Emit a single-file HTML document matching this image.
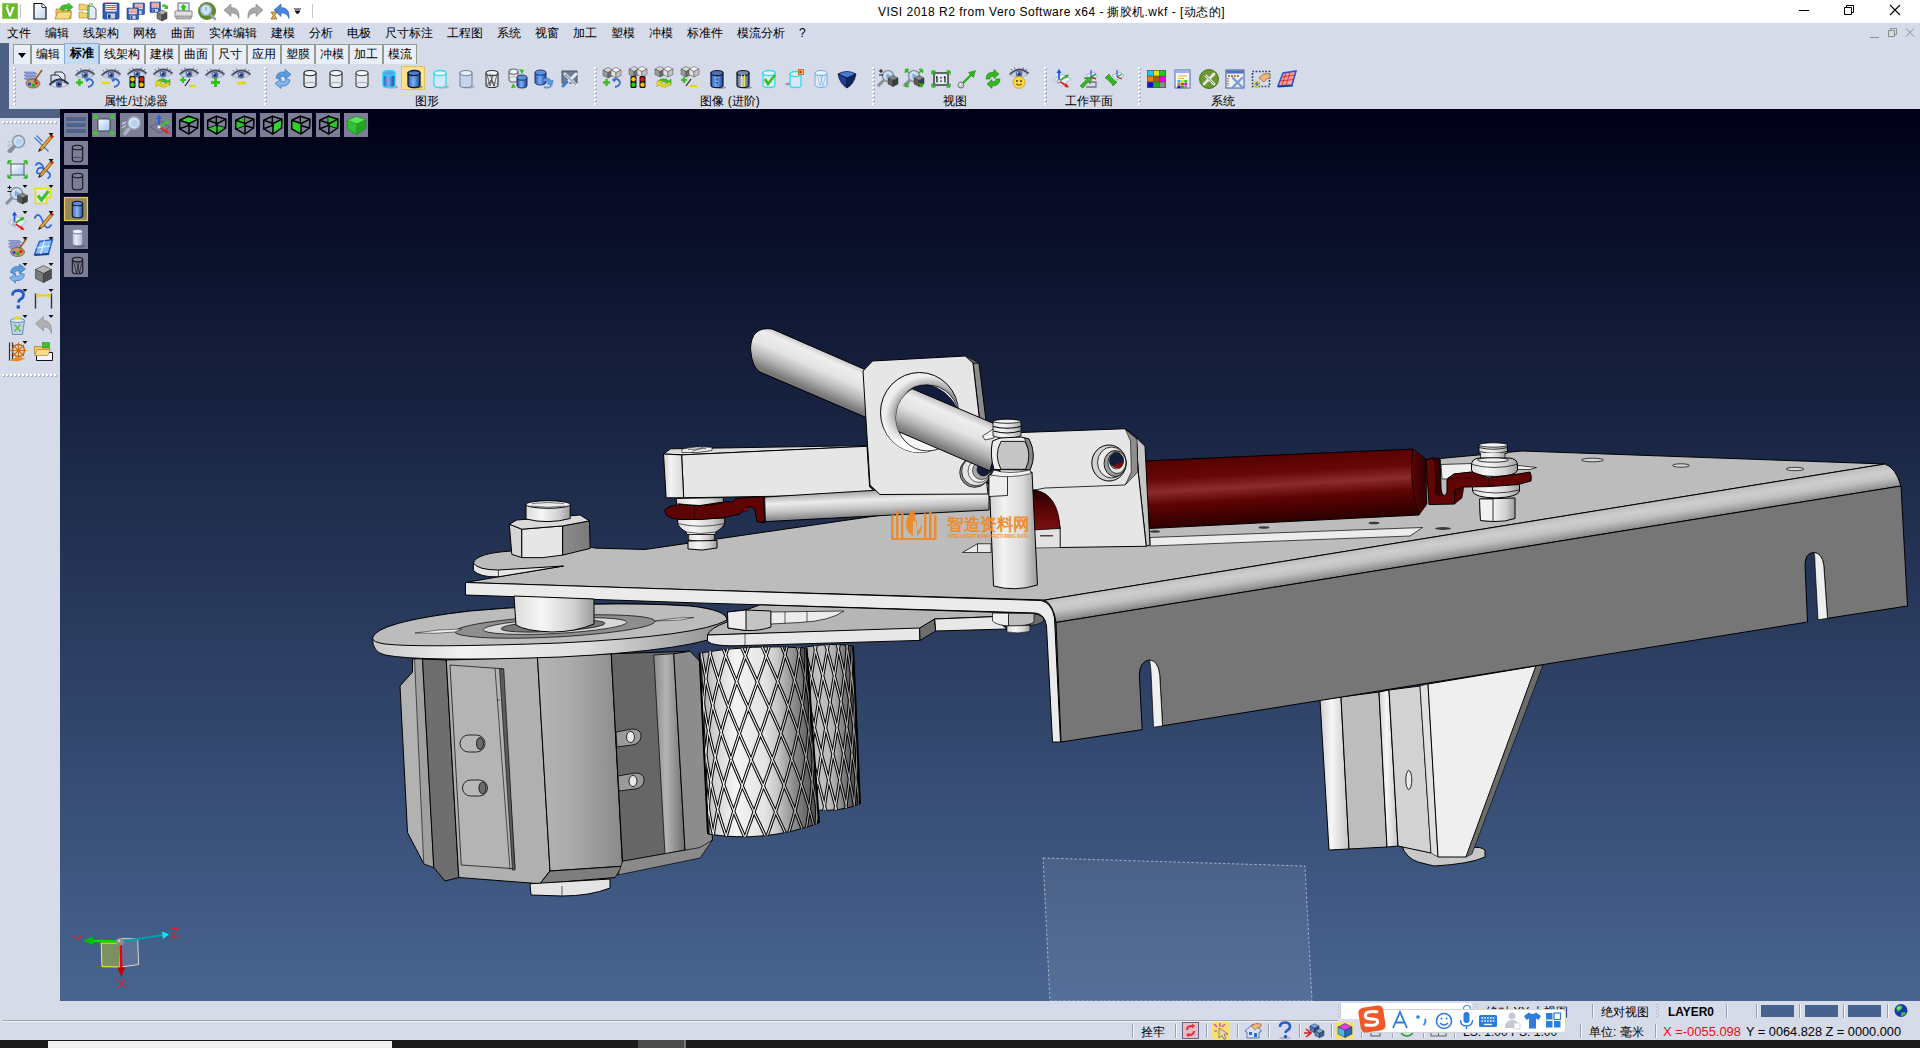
<!DOCTYPE html>
<html lang="zh">
<head>
<meta charset="utf-8">
<title>VISI 2018 R2 from Vero Software x64 - 撕胶机.wkf - [动态的]</title>
<style>
*{box-sizing:border-box;margin:0;padding:0}
html,body{width:1920px;height:1048px;overflow:hidden;background:#d6dbe9;font-family:"Liberation Sans",sans-serif;font-size:12px;color:#000}
.abs,.abs *{position:absolute}
#app{position:relative;width:1920px;height:1048px;overflow:hidden}
#titlebar{left:0;top:0;width:1920px;height:23px;background:#fff}
#title,#title2{top:5px;white-space:nowrap;font-size:12px;letter-spacing:.5px;color:#000;line-height:14px}
#title{left:878px}#title2{left:1107px}
#menubar{left:0;top:23px;width:1920px;height:20px;background:#d6dbe9}
#menubar span{top:3px;white-space:nowrap;line-height:14px;font-size:12px}
#strip{left:0;top:43px;width:9px;height:75px;background:#4e6084}
#strip2{left:0;top:109px;width:60px;height:9px;background:#4e6084}
#tabs{left:12px;top:43px;height:21px;width:410px}
#tabs div{top:1px;height:20px;background:#e8eefa;border:1px solid #9a9a8a;border-bottom:none;text-align:center;line-height:18px;font-size:12px;white-space:nowrap;overflow:hidden}
#tabs div.sel{top:0;height:21px;background:#c2dcf8;border-color:#8fa9c8;font-weight:bold;line-height:19px}
#toolbar{left:12px;top:64px;width:1908px;height:44px;background:#d6dbe9}
.grip{width:3px;top:3px;height:38px;background:repeating-linear-gradient(180deg,#fff 0,#fff 2px,transparent 2px,transparent 4px) 0 0/2px 100% no-repeat,repeating-linear-gradient(180deg,transparent 0,transparent 1px,#a4acc0 1px,#a4acc0 3px,transparent 3px,transparent 4px) 1px 0/2px 100% no-repeat}
.glabel{top:30px;font-size:12px;line-height:14px;white-space:nowrap;transform:translateX(-50%)}
#sidebar{left:0;top:118px;width:60px;height:883px;background:#d6dbe9}
.hgrip{left:2px;width:56px;height:3px;background:repeating-linear-gradient(90deg,#fff 0,#fff 2px,transparent 2px,transparent 4px) 0 0/100% 2px no-repeat,repeating-linear-gradient(90deg,transparent 0,transparent 1px,#a4acc0 1px,#a4acc0 3px,transparent 3px,transparent 4px) 0 1px/100% 2px no-repeat}
#viewport{left:60px;top:109px;width:1860px;height:892px;background:linear-gradient(180deg,#000118 0%,#486591 100%);overflow:hidden}
#status{left:0;top:1001px;width:1920px;height:39px;background:#d6dbe9}
#taskbar{left:0;top:1040px;width:1920px;height:8px;background:#1b1b1b}
</style>
</head>
<body>
<div id="app" class="abs">

<!-- ===== viewport ===== -->
<div id="viewport">
<svg id="model" width="1860" height="892" viewBox="60 109 1860 892" style="left:0;top:0">
<defs>
<linearGradient id="gHandle" gradientUnits="userSpaceOnUse" x1="880" y1="372" x2="862" y2="413"><stop offset="0" stop-color="#b4b4b4"/><stop offset=".22" stop-color="#eeeeee"/><stop offset=".5" stop-color="#e2e2e2"/><stop offset=".75" stop-color="#b4b4b4"/><stop offset="1" stop-color="#787878"/></linearGradient>
<linearGradient id="gCap" x1="0" y1="0" x2="1" y2="0"><stop offset="0" stop-color="#cfcfcf"/><stop offset=".35" stop-color="#f4f4f4"/><stop offset="1" stop-color="#d6d6d6"/></linearGradient>
<linearGradient id="gRod" gradientUnits="userSpaceOnUse" x1="876" y1="491" x2="877" y2="515"><stop offset="0" stop-color="#a8a8a8"/><stop offset=".35" stop-color="#ececec"/><stop offset=".7" stop-color="#c4c4c4"/><stop offset="1" stop-color="#8c8c8c"/></linearGradient>
<linearGradient id="gPost" x1="0" y1="0" x2="1" y2="0"><stop offset="0" stop-color="#cfcfcf"/><stop offset=".3" stop-color="#f2f2f2"/><stop offset=".7" stop-color="#dadada"/><stop offset="1" stop-color="#9a9a9a"/></linearGradient>
<linearGradient id="gRed" gradientUnits="userSpaceOnUse" x1="1280" y1="455" x2="1284" y2="523"><stop offset="0" stop-color="#560101"/><stop offset=".25" stop-color="#690707"/><stop offset=".44" stop-color="#8c2c2c"/><stop offset=".62" stop-color="#600404"/><stop offset=".85" stop-color="#3e0000"/><stop offset="1" stop-color="#2a0000"/></linearGradient>
<linearGradient id="gRedEnd" x1="0" y1="0" x2="0" y2="1"><stop offset="0" stop-color="#1e0000"/><stop offset=".45" stop-color="#5a0404"/><stop offset="1" stop-color="#7a1212"/></linearGradient>
<linearGradient id="gRedCap" x1="0" y1="0" x2="1" y2="0"><stop offset="0" stop-color="#5a0505"/><stop offset="1" stop-color="#2e0000"/></linearGradient>
<linearGradient id="gFold" gradientUnits="userSpaceOnUse" x1="1470" y1="531" x2="1474" y2="556"><stop offset="0" stop-color="#bcbcbc"/><stop offset=".3" stop-color="#cecece"/><stop offset=".55" stop-color="#c2c2c2"/><stop offset=".8" stop-color="#9e9e9e"/><stop offset="1" stop-color="#7a7a7a"/></linearGradient>
<linearGradient id="gHub" x1="0" y1="0" x2="1" y2="0"><stop offset="0" stop-color="#dcdcdc"/><stop offset=".35" stop-color="#f6f6f6"/><stop offset=".75" stop-color="#d0d0d0"/><stop offset="1" stop-color="#9c9c9c"/></linearGradient>
<linearGradient id="gDiscSide" x1="0" y1="0" x2="1" y2="0"><stop offset="0" stop-color="#c8c8c8"/><stop offset=".25" stop-color="#f2f2f2"/><stop offset=".6" stop-color="#dedede"/><stop offset="1" stop-color="#8e8e8e"/></linearGradient>
<linearGradient id="gDrum" x1="0" y1="0" x2="1" y2="0"><stop offset="0" stop-color="#b4b4b4"/><stop offset=".4" stop-color="#aaaaaa"/><stop offset="1" stop-color="#8a8a8a"/></linearGradient>
<linearGradient id="gStrip" x1="0" y1="0" x2="1" y2="0"><stop offset="0" stop-color="#8a8a8a"/><stop offset=".4" stop-color="#b4b4b4"/><stop offset="1" stop-color="#6c6c6c"/></linearGradient>
<linearGradient id="gKnSh1" x1="0" y1="0" x2="1" y2="0"><stop offset="0" stop-color="#000" stop-opacity=".12"/><stop offset=".12" stop-color="#000" stop-opacity="0"/><stop offset=".55" stop-color="#000" stop-opacity="0"/><stop offset="1" stop-color="#000" stop-opacity=".42"/></linearGradient><linearGradient id="gKnSh2" x1="0" y1="0" x2="1" y2="0"><stop offset="0" stop-color="#000" stop-opacity=".3"/><stop offset=".3" stop-color="#000" stop-opacity=".08"/><stop offset=".6" stop-color="#000" stop-opacity=".12"/><stop offset="1" stop-color="#000" stop-opacity=".5"/></linearGradient>
<linearGradient id="gKn1" x1="0" y1="0" x2="1" y2="0"><stop offset="0" stop-color="#b8b8b8"/><stop offset=".3" stop-color="#f4f4f4"/><stop offset=".65" stop-color="#dcdcdc"/><stop offset="1" stop-color="#7c7c7c"/></linearGradient>
<linearGradient id="gKn2" x1="0" y1="0" x2="1" y2="0"><stop offset="0" stop-color="#d8d8d8"/><stop offset=".5" stop-color="#d0d0d0"/><stop offset="1" stop-color="#707070"/></linearGradient>
<linearGradient id="gSup1" x1="0" y1="0" x2="1" y2="0"><stop offset="0" stop-color="#d0d0d0"/><stop offset=".4" stop-color="#f6f6f6"/><stop offset="1" stop-color="#c4c4c4"/></linearGradient>
<linearGradient id="gNutR" x1="0" y1="0" x2="1" y2="0"><stop offset="0" stop-color="#8c8c8c"/><stop offset="1" stop-color="#7a7a7a"/></linearGradient>
<radialGradient id="gRing" gradientUnits="userSpaceOnUse" cx="929" cy="420" r="44"><stop offset=".68" stop-color="#666"/><stop offset=".84" stop-color="#b8b8b8"/><stop offset="1" stop-color="#eee"/></radialGradient>
<linearGradient id="gRingW" x1=".2" y1="0" x2=".5" y2="1"><stop offset=".45" stop-color="#fff" stop-opacity="0"/><stop offset=".85" stop-color="#fff" stop-opacity="1"/></linearGradient>
<clipPath id="cHole"><ellipse cx="927.5" cy="418" rx="31.5" ry="33"/><path d="M927.5,300 L1100,300 L1100,520 L927.5,520 Z"/></clipPath>
<clipPath id="cKn1"><path d="M699.5,653 Q752,644 806.5,648 L819,823 Q765,843 708,834 Z"/></clipPath>
<clipPath id="cKn2"><path d="M800,648 Q830,642 853,646 L860,804 Q840,812 815,810 Z"/></clipPath>
</defs>
<g stroke="#000" stroke-width="1" stroke-linejoin="round">

<!-- dashed selection rectangle -->
<path d="M1043,858 L1305,866 L1312,1001 L1050,1001 Z" fill="#fff" fill-opacity=".075" stroke="#dfe4ee" stroke-opacity=".62" stroke-width="1" stroke-dasharray="2.5 2"/>

<!-- ============ support bracket under flange ============ -->
<path d="M1402,846 Q1406,858 1418,862 L1434,866 Q1470,864 1485,857 L1485,850 Q1480,846 1472,848 Z" fill="#c8c8c8"/>
<path d="M1320,700 L1341,697 L1349,849 L1329,850 Z" fill="url(#gSup1)"/>
<path d="M1341,697 L1379,692 L1387,847 L1349,849 Z" fill="#bdbdbd"/>
<path d="M1379,692 L1389,690 L1398,846 L1387,847 Z" fill="url(#gSup1)"/>
<path d="M1389,690 L1420,686 L1431,853 L1398,846 Z" fill="#d2d2d2"/>
<ellipse cx="1408.8" cy="780" rx="3" ry="9.5" fill="#e8e8e8" stroke-width=".8"/>
<path d="M1420,686 L1428,684 L1438,857 L1431,853 Z" fill="#e0e0e0" stroke-width=".6"/>
<path d="M1428,684 L1536,666 L1466,857 L1438,857 Z" fill="#efefef"/>
<path d="M1536,666 L1543,665 L1472,854 L1466,857 Z" fill="#6c6c6c" stroke-width=".6"/>

<!-- ============ main plate top surface ============ -->
<path d="M465.5,582.5 L498.4,576.8 L563.5,566 L592,548 L645,549.5 L865,517.5 L1150,477 L1440,458.5 L1522,451 L1885,464 L1045,600 L700,590 Z" fill="#bcbcbc"/>
<!-- lighter strip on plate -->
<path d="M1150,537.5 L1422.5,527.5 L1410,536 L1150,546 Z" fill="#ececec" stroke-width=".7"/>
<g fill="#3a3a3a" stroke="none"><ellipse cx="1155" cy="531.5" rx="5" ry="1.2"/><ellipse cx="1264" cy="527.5" rx="5.5" ry="1.2"/><ellipse cx="1374" cy="523" rx="5.5" ry="1.3"/><ellipse cx="1443" cy="528.5" rx="8" ry="1.4"/></g>
<g fill="#d6d6d6" stroke-width=".7"><ellipse cx="1592.5" cy="460" rx="11" ry="1.8"/><ellipse cx="1681" cy="465.5" rx="8.5" ry="1.7"/><ellipse cx="1795" cy="469" rx="9" ry="1.7"/></g>
<!-- slot detail near post -->
<path d="M962.5,552.5 L977.5,543.750 L991,543.750 L991,552.5 Z" fill="#e8e8e8" stroke-width=".7"/>
<path d="M977.5,543.750 L977.5,552 " fill="none" stroke-width=".7"/>
<!-- fold band -->
<path d="M1045,600 L1885,464 Q1896,468 1901,486 L1056,622.5 Q1054,606 1045,600 Z" fill="url(#gFold)"/>
<!-- flange front -->
<path d="M1056,622.5 L1901,486 L1907.5,606 L1827.5,618.3 L1823.750,565 Q1822,553 1813.750,552.5 Q1805,553 1805,565 L1807.5,622 L1162.6,725.8 L1159.7,674.7 Q1158,660.5 1149.5,660 Q1140,661 1139.3,674.7 L1142.2,729.6 L1061,742 Z" fill="#767676"/>
<!-- slot inner thickness -->
<path d="M1151,672 Q1150,662 1149.5,660 Q1158,660.5 1159.7,674.7 L1162.6,725.8 L1153.5,727.3 Z" fill="#efefef" stroke-width=".7"/>
<path d="M1815,565 Q1815,555 1813.750,552.5 Q1822,553 1823.750,565 L1827.5,618.3 L1818,619.8 Z" fill="#efefef" stroke-width=".7"/>
<!-- plate front thickness + left bend strip -->
<path d="M465.5,582.5 L700,590 L1041,600.5 Q1052,603 1054.5,618 L1060.5,742 L1052.5,742 L1046.5,626 Q1045,614 1035,613 L700,603 L465.5,595 Z" fill="#ebebeb"/>

<!-- ============ ear + hex nut (left) ============ -->
<path d="M473.4,563 Q476,553 512,551 L592,548 L597,549.5 L566,569 L563.5,566 L498.4,570 Q478,570 473.4,563 Z" fill="#bcbcbc" stroke="none"/>
<path d="M473.4,563 Q476,553 512,551" fill="none"/>
<path d="M473.4,563 L473.4,570.5 Q480,577.5 498.4,576.8 L563.5,566 L498.4,570 Q478,570 473.4,563 Z" fill="#e6e6e6"/>
<path d="M498.4,570 L498.4,576.8" fill="none" stroke-width=".7"/>
<!-- nut -->
<path d="M509.3,524.2 L521.8,529.2 L521.8,557.6 L511.8,554.3 Z" fill="#d6d6d6"/>
<path d="M521.8,529.2 L562.7,525.9 L562.7,555.1 Q542,559 521.8,557.6 Z" fill="#e6e6e6"/>
<path d="M562.7,525.9 L589.4,520.9 L590.2,548.4 L562.7,555.1 Z" fill="url(#gNutR)"/>
<path d="M509.3,524.2 L516.8,520 L580.2,515 L589.4,520.9 L562.7,525.9 L521.8,529.2 Z" fill="#dadada"/>
<path d="M526,504.5 L526,519 Q548,524.5 570.2,518.5 L570.2,504.5 Z" fill="url(#gHub)"/>
<ellipse cx="548.1" cy="504.5" rx="22.1" ry="3.8" fill="#ececec"/>
<path d="M532,503.5 Q548,501.5 564,503.5 M531,506 Q548,508.5 565,506" fill="none" stroke-width=".5"/>

<!-- ============ hub + disc + roller ============ -->
<!-- roller body pieces -->
<path d="M412.5,659 L422.5,659 L433.750,867.5 L423.750,863.750 L407.5,832.5 L400,686 L412.5,672 Z" fill="#b2b2b2"/><path d="M414.5,659 L422.5,659 L433.750,867.5 L423.750,863.750 Z" fill="#a0a0a0" stroke-width=".6"/>
<path d="M422.5,659 L446.250,660 L458.750,877.5 L445,881 L433.750,867.5 Z" fill="#6e6e6e"/>
<path d="M446.250,660 L537.5,657.5 L550,871 L540,883.750 L458.750,877.5 Z" fill="#b0b0b0"/>
<path d="M450,665 L502.5,668.750 L515,868.750 L461.250,865 Z" fill="#b4b4b4" stroke-width=".7"/>
<path d="M499.5,669 L503.750,668.750 L515,870 L512.5,870 Z" fill="#5c5c5c" stroke-width=".6"/><path d="M495,668.5 L510,869.5" fill="none" stroke-width=".6"/>
<path d="M497,700 L500,700" fill="none" stroke-width=".5"/>
<path d="M537.5,657.5 L611.250,653.750 L622.5,866.250 L550,871 Z" fill="url(#gDrum)"/>
<path d="M540,883.750 L550,871 L622.5,866.250 L615,877.5 Z" fill="#7e7e7e"/>
<path d="M611.250,653.750 L690,651.250 L700,847.5 L622.5,861.250 Z" fill="#666666"/>
<path d="M653.750,655 L673.750,653.750 L685,850 L665,853.750 Z" fill="url(#gStrip)" stroke-width=".7"/>
<path d="M673.750,653.750 L690,651.250 L701,662.5 L712.5,840 L700,852.5 L685,850 Z" fill="#8c8c8c"/>
<path d="M622.5,861.250 L700,847.5 L712.5,840 L700,858 L618,875 Z" fill="#8a8a8a" stroke-width=".7"/>
<!-- slot holes -->
<g stroke-width=".8"><rect x="460" y="735" width="25" height="17" rx="8.5" fill="#b8b8b8"/><ellipse cx="480" cy="743.5" rx="3.5" ry="6" fill="#6a6a6a"/><rect x="462.5" y="780" width="25" height="16" rx="8" fill="#b8b8b8"/><ellipse cx="482.5" cy="788" rx="3.5" ry="6" fill="#6a6a6a"/>
<path d="M616,732 L632,729 Q642,729 641,737 Q640,744 632,745 L617,747 Z" fill="#9a9a9a"/><ellipse cx="630.5" cy="737" rx="4" ry="5.5" fill="#e8e8e8"/>
<path d="M618,776 L635,773 Q645,773 644,781 Q643,788 635,789 L619,791 Z" fill="#9a9a9a"/><ellipse cx="633" cy="781" rx="4" ry="5.5" fill="#e8e8e8"/></g>
<!-- bottom nub -->
<path d="M530,883.750 L610,879 L610,888 Q590,896 562,896 L531,895 Z" fill="#e4e4e4"/>
<path d="M562,886 L562,896" fill="none" stroke-width=".6"/>
<!-- disc -->
<path d="M372.5,638 Q376,622 470,611 Q600,600 690,606 Q727,610 727,620 L727,632 Q700,650 560,657 Q420,662 385,655 Q372,652 372.5,638 Z" fill="url(#gDiscSide)"/>
<path d="M372.5,638 Q376,622 470,611 Q600,600 690,606 Q727,610 727,620 Q700,636 560,643 Q420,648 385,644 Q372,642 372.5,638 Z" fill="#bcbcbc"/>
<!-- bearing rings on disc -->
<ellipse cx="555" cy="626.5" rx="100" ry="10.5" fill="#8e8e8e" transform="rotate(-3 555 626.5)" stroke-width=".7"/>
<ellipse cx="555" cy="626" rx="72" ry="7.5" fill="#d8d8d8" transform="rotate(-3 555 626)" stroke-width=".7"/>
<ellipse cx="553" cy="626" rx="52" ry="5.5" fill="#777" transform="rotate(-3 553 626)" stroke-width=".7"/>
<path d="M415,633 Q440,629 462,629 L455,632 Q435,634 415,633 Z M655,621 Q680,617 694,617.5 L680,620 Z" fill="#f0f0f0" stroke-width=".5"/>
<!-- hub -->
<path d="M514,596 L594,599 L594,624 Q575,632 552,632 Q525,631 516,625 Z" fill="url(#gHub)"/>

<!-- ============ knurled rollers ============ -->
<path d="M800,648 Q830,642 853,646 L860,804 Q840,812 815,810 Z" fill="url(#gKn2)"/>
<g clip-path="url(#cKn2)" fill="none" id="kn2"><path d="M830.6,619.8 L832.0,624.7 L833.3,629.7 L834.6,634.6 L835.9,639.6 L837.2,644.5 L838.4,649.4 L839.7,654.3 L840.8,659.2 L842.0,664.2 L843.1,669.1 L844.2,674.0 L845.3,678.9 L846.3,683.7 L847.3,688.6 L848.3,693.5 L849.2,698.4 L850.1,703.3 L850.9,708.2 L851.7,713.0 L852.5,717.9 L853.2,722.8 L853.9,727.6 L854.6,732.5 L855.2,737.3 L855.8,742.2 L856.3,747.0 L856.8,751.9 L857.2,756.8 L857.6,761.6 L858.0,766.5 L858.3,771.3 L858.6,776.2 M841.1,619.0 L842.2,623.9 L843.3,628.8 L844.3,633.7 L845.3,638.6 L846.3,643.5 L847.2,648.4 L848.1,653.2 L848.9,658.1 L849.7,663.0 L850.5,667.8 L851.2,672.7 L851.9,677.6 L852.5,682.4 L853.1,687.3 L853.7,692.1 L854.2,697.0 L854.7,701.8 L855.1,706.7 L855.5,711.5 L855.9,716.4 L856.2,721.2 L856.4,726.1 M848.5,617.8 L849.2,622.6 L849.9,627.5 L850.5,632.4 L851.1,637.2 L851.7,642.1 L852.2,646.9 L852.6,651.8 L853.0,656.6 L853.4,661.5 L853.8,666.3 L854.0,671.2 M851.6,616.3 L851.9,621.1 M801.5,786.1 L801.9,791.3 L802.4,796.4 L802.8,801.6 L803.4,806.7 L803.9,811.9 L804.5,817.0 L805.2,822.2 L805.8,827.3 L806.5,832.5 L807.3,837.6 M798.2,736.2 L798.6,741.4 L799.0,746.5 L799.5,751.7 L800.1,756.8 L800.6,762.0 L801.3,767.1 L801.9,772.2 L802.6,777.4 L803.3,782.5 L804.1,787.7 L804.9,792.8 L805.8,797.9 L806.6,803.1 L807.5,808.2 L808.5,813.3 L809.4,818.4 L810.4,823.6 L811.5,828.7 L812.5,833.8 L813.6,838.9 M794.4,681.1 L794.8,686.3 L795.2,691.4 L795.7,696.6 L796.2,701.7 L796.8,706.9 L797.4,712.0 L798.0,717.2 L798.7,722.3 L799.4,727.4 L800.2,732.6 L801.0,737.7 L801.8,742.9 L802.7,748.0 L803.6,753.1 L804.5,758.2 L805.4,763.4 L806.4,768.5 L807.5,773.6 L808.5,778.7 L809.6,783.8 L810.7,788.9 L811.8,794.0 L813.0,799.1 L814.1,804.2 L815.3,809.3 L816.5,814.4 L817.8,819.5 L819.0,824.5 L820.3,829.6 L821.6,834.7 L822.8,839.7 M791.0,631.2 L791.4,636.3 L791.9,641.5 L792.4,646.6 L792.9,651.8 L793.5,656.9 L794.1,662.1 L794.8,667.2 L795.5,672.4 L796.2,677.5 L797.0,682.6 L797.8,687.8 L798.7,692.9 L799.6,698.0 L800.5,703.2 L801.4,708.3 L802.4,713.4 L803.5,718.5 L804.5,723.6 L805.6,728.8 L806.7,733.9 L807.8,739.0 L809.0,744.1 L810.2,749.2 L811.4,754.3 L812.6,759.3 L813.8,764.4 L815.1,769.5 L816.3,774.6 L817.6,779.6 L818.9,784.7 L820.2,789.7 L821.6,794.8 L822.9,799.8 L824.2,804.9 L825.6,809.9 L826.9,814.9 L828.3,820.0 L829.6,825.0 L831.0,830.0 L832.3,835.0 L833.7,840.0 M791.6,617.3 L792.3,622.4 L793.1,627.6 L793.9,632.7 L794.7,637.8 L795.6,643.0 L796.5,648.1 L797.4,653.2 L798.4,658.3 L799.4,663.5 L800.5,668.6 L801.6,673.7 L802.7,678.8 L803.8,683.9 L805.0,689.0 L806.1,694.1 L807.4,699.2 L808.6,704.3 L809.8,709.4 L811.1,714.5 L812.4,719.5 L813.7,724.6 L815.0,729.7 L816.3,734.7 L817.7,739.8 L819.0,744.8 L820.4,749.9 L821.7,754.9 L823.1,759.9 L824.5,765.0 L825.8,770.0 L827.2,775.0 L828.6,780.0 L830.0,785.0 L831.3,790.0 L832.7,795.0 L834.0,800.0 L835.4,805.0 L836.7,809.9 L838.0,814.9 L839.3,819.9 L840.6,824.8 L841.9,829.8 L843.1,834.7 L844.4,839.7 M797.5,618.6 L798.7,623.7 L799.8,628.8 L800.9,634.0 L802.1,639.1 L803.3,644.1 L804.6,649.2 L805.8,654.3 L807.1,659.4 L808.4,664.5 L809.7,669.6 L811.0,674.6 L812.4,679.7 L813.7,684.7 L815.1,689.8 L816.5,694.8 L817.9,699.9 L819.3,704.9 L820.7,709.9 L822.0,715.0 L823.4,720.0 L824.8,725.0 L826.2,730.0 L827.6,735.0 L829.0,740.0 L830.4,745.0 L831.8,750.0 L833.1,754.9 L834.5,759.9 L835.8,764.9 L837.1,769.8 L838.4,774.8 L839.7,779.8 L841.0,784.7 L842.3,789.6 L843.5,794.6 L844.7,799.5 L845.9,804.4 L847.0,809.3 L848.2,814.3 L849.3,819.2 L850.3,824.1 L851.4,829.0 L852.4,833.9 L853.4,838.8 M807.1,619.6 L808.4,624.6 L809.8,629.7 L811.2,634.8 L812.6,639.8 L814.0,644.9 L815.4,649.9 L816.8,654.9 L818.2,659.9 L819.6,665.0 L821.1,670.0 L822.5,675.0 L823.9,680.0 L825.3,685.0 L826.7,690.0 L828.1,695.0 L829.5,700.0 L830.9,704.9 L832.3,709.9 L833.6,714.9 L835.0,719.8 L836.3,724.8 L837.6,729.7 L838.9,734.7 L840.1,739.6 L841.4,744.5 L842.6,749.5 L843.8,754.4 L845.0,759.3 L846.1,764.2 L847.2,769.1 L848.3,774.0 L849.3,778.9 L850.4,783.8 L851.4,788.7 L852.3,793.6 L853.2,798.5 L854.1,803.4 L855.0,808.3 L855.8,813.1 L856.6,818.0 L857.3,822.9 L858.0,827.7 L858.7,832.6 L859.3,837.5 M818.7,620.0 L820.1,625.0 L821.6,630.0 L823.0,635.0 L824.4,640.0 L825.9,645.0 L827.3,650.0 L828.7,654.9 L830.1,659.9 L831.4,664.9 L832.8,669.8 L834.1,674.8 L835.5,679.7 L836.7,684.6 L838.0,689.6 L839.3,694.5 L840.5,699.4 L841.7,704.4 L842.9,709.3 L844.0,714.2 L845.2,719.1 L846.2,724.0 L847.3,728.9 L848.3,733.8 L849.3,738.7 L850.3,743.6 L851.2,748.4 L852.1,753.3 L852.9,758.2 L853.8,763.1 L854.5,767.9 L855.3,772.8 L856.0,777.7 L856.6,782.5 L857.2,787.4 L857.8,792.3 L858.4,797.1 L858.9,802.0 L859.3,806.8 L859.7,811.7 L860.1,816.5 L860.4,821.4 L860.7,826.2 M830.6,619.8 L832.0,624.7 L833.3,629.7 L834.6,634.6 L835.9,639.6 L837.2,644.5 L838.4,649.4 L839.7,654.3 L840.8,659.2 L842.0,664.2 L843.1,669.1 L844.2,674.0 L845.3,678.9 L846.3,683.7 L847.3,688.6 L848.3,693.5 L849.2,698.4 L850.1,703.3 L850.9,708.2 L851.7,713.0 L852.5,717.9 L853.2,722.8 L853.9,727.6 L854.6,732.5 L855.2,737.3 L855.8,742.2 L856.3,747.0 L856.8,751.9 L857.2,756.8 L857.6,761.6 L858.0,766.5 L858.3,771.3 L858.6,776.2 M841.1,619.0 L842.2,623.9 L843.3,628.8 L844.3,633.7 L845.3,638.6 L846.3,643.5 L847.2,648.4 L848.1,653.2 L848.9,658.1 L849.7,663.0 L850.5,667.8 L851.2,672.7 L851.9,677.6 L852.5,682.4 L853.1,687.3 L853.7,692.1 L854.2,697.0 L854.7,701.8 L855.1,706.7 L855.5,711.5 L855.9,716.4 L856.2,721.2 L856.4,726.1 M848.5,617.8 L849.2,622.6 L849.9,627.5 L850.5,632.4 L851.1,637.2 L851.7,642.1 L852.2,646.9 L852.6,651.8 L853.0,656.6 L853.4,661.5 L853.8,666.3 L854.0,671.2 M851.6,616.3 L851.9,621.1 M801.5,786.1 L801.9,791.3 L802.4,796.4 L802.8,801.6 L803.4,806.7 L803.9,811.9 L804.5,817.0 L805.2,822.2 L805.8,827.3 L806.5,832.5 L807.3,837.6 M798.2,736.2 L798.6,741.4 L799.0,746.5 L799.5,751.7 L800.1,756.8 L800.6,762.0 L801.3,767.1 L801.9,772.2 L802.6,777.4 L803.3,782.5 L804.1,787.7 L804.9,792.8 L805.8,797.9 L806.6,803.1 L807.5,808.2 L808.5,813.3 L809.4,818.4 L810.4,823.6 L811.5,828.7 L812.5,833.8 L813.6,838.9 M794.4,681.1 L794.8,686.3 L795.2,691.4 L795.7,696.6 L796.2,701.7 L796.8,706.9 L797.4,712.0 L798.0,717.2 L798.7,722.3 L799.4,727.4 L800.2,732.6 L801.0,737.7 L801.8,742.9 L802.7,748.0 L803.6,753.1 L804.5,758.2 L805.4,763.4 L806.4,768.5 L807.5,773.6 L808.5,778.7 L809.6,783.8 L810.7,788.9 L811.8,794.0 L813.0,799.1 L814.1,804.2 L815.3,809.3 L816.5,814.4 L817.8,819.5 L819.0,824.5 L820.3,829.6 L821.6,834.7 L822.8,839.7 M791.0,631.2 L791.4,636.3 L791.9,641.5 L792.4,646.6 L792.9,651.8 L793.5,656.9 L794.1,662.1 L794.8,667.2 L795.5,672.4 L796.2,677.5 L797.0,682.6 L797.8,687.8 L798.7,692.9 L799.6,698.0 L800.5,703.2 L801.4,708.3 L802.4,713.4 L803.5,718.5 L804.5,723.6 L805.6,728.8 L806.7,733.9 L807.8,739.0 L809.0,744.1 L810.2,749.2 L811.4,754.3 L812.6,759.3 L813.8,764.4 L815.1,769.5 L816.3,774.6 L817.6,779.6 L818.9,784.7 L820.2,789.7 L821.6,794.8 L822.9,799.8 L824.2,804.9 L825.6,809.9 L826.9,814.9 L828.3,820.0 L829.6,825.0 L831.0,830.0 L832.3,835.0 L833.7,840.0 M791.6,617.3 L792.3,622.4 L793.1,627.6 L793.9,632.7 L794.7,637.8 L795.6,643.0 L796.5,648.1 L797.4,653.2 L798.4,658.3 L799.4,663.5 L800.5,668.6 L801.6,673.7 L802.7,678.8 L803.8,683.9 L805.0,689.0 L806.1,694.1 L807.4,699.2 L808.6,704.3 L809.8,709.4 L811.1,714.5 L812.4,719.5 L813.7,724.6 L815.0,729.7 L816.3,734.7 L817.7,739.8 L819.0,744.8 L820.4,749.9 L821.7,754.9 L823.1,759.9 L824.5,765.0 L825.8,770.0 L827.2,775.0 L828.6,780.0 L830.0,785.0 L831.3,790.0 L832.7,795.0 L834.0,800.0 L835.4,805.0 L836.7,809.9 L838.0,814.9 L839.3,819.9 L840.6,824.8 L841.9,829.8 L843.1,834.7 L844.4,839.7 M797.5,618.6 L798.7,623.7 L799.8,628.8 L800.9,634.0 L802.1,639.1 L803.3,644.1 L804.6,649.2 L805.8,654.3 L807.1,659.4 L808.4,664.5 L809.7,669.6 L811.0,674.6 L812.4,679.7 L813.7,684.7 L815.1,689.8 L816.5,694.8 L817.9,699.9 L819.3,704.9 L820.7,709.9 L822.0,715.0 L823.4,720.0 L824.8,725.0 L826.2,730.0 L827.6,735.0 L829.0,740.0 L830.4,745.0 L831.8,750.0 L833.1,754.9 L834.5,759.9 L835.8,764.9 L837.1,769.8 L838.4,774.8 L839.7,779.8 L841.0,784.7 L842.3,789.6 L843.5,794.6 L844.7,799.5 L845.9,804.4 L847.0,809.3 L848.2,814.3 L849.3,819.2 L850.3,824.1 L851.4,829.0 L852.4,833.9 L853.4,838.8 M807.1,619.6 L808.4,624.6 L809.8,629.7 L811.2,634.8 L812.6,639.8 L814.0,644.9 L815.4,649.9 L816.8,654.9 L818.2,659.9 L819.6,665.0 L821.1,670.0 L822.5,675.0 L823.9,680.0 L825.3,685.0 L826.7,690.0 L828.1,695.0 L829.5,700.0 L830.9,704.9 L832.3,709.9 L833.6,714.9 L835.0,719.8 L836.3,724.8 L837.6,729.7 L838.9,734.7 L840.1,739.6 L841.4,744.5 L842.6,749.5 L843.8,754.4 L845.0,759.3 L846.1,764.2 L847.2,769.1 L848.3,774.0 L849.3,778.9 L850.4,783.8 L851.4,788.7 L852.3,793.6 L853.2,798.5 L854.1,803.4 L855.0,808.3 L855.8,813.1 L856.6,818.0 L857.3,822.9 L858.0,827.7 L858.7,832.6 L859.3,837.5 M818.7,620.0 L820.1,625.0 L821.6,630.0 L823.0,635.0 L824.4,640.0 L825.9,645.0 L827.3,650.0 L828.7,654.9 L830.1,659.9 L831.4,664.9 L832.8,669.8 L834.1,674.8 L835.5,679.7 L836.7,684.6 L838.0,689.6 L839.3,694.5 L840.5,699.4 L841.7,704.4 L842.9,709.3 L844.0,714.2 L845.2,719.1 L846.2,724.0 L847.3,728.9 L848.3,733.8 L849.3,738.7 L850.3,743.6 L851.2,748.4 L852.1,753.3 L852.9,758.2 L853.8,763.1 L854.5,767.9 L855.3,772.8 L856.0,777.7 L856.6,782.5 L857.2,787.4 L857.8,792.3 L858.4,797.1 L858.9,802.0 L859.3,806.8 L859.7,811.7 L860.1,816.5 L860.4,821.4 L860.7,826.2 M830.6,619.8 L832.0,624.7 L833.3,629.7 L834.6,634.6 L835.9,639.6 L837.2,644.5 L838.4,649.4 L839.7,654.3 L840.8,659.2 L842.0,664.2 L843.1,669.1 L844.2,674.0 L845.3,678.9 L846.3,683.7 L847.3,688.6 L848.3,693.5 L849.2,698.4 L850.1,703.3 L850.9,708.2 L851.7,713.0 L852.5,717.9 L853.2,722.8 L853.9,727.6 L854.6,732.5 L855.2,737.3 L855.8,742.2 L856.3,747.0 L856.8,751.9 L857.2,756.8 L857.6,761.6 L858.0,766.5 L858.3,771.3 L858.6,776.2 M841.1,619.0 L842.2,623.9 L843.3,628.8 L844.3,633.7 L845.3,638.6 L846.3,643.5 L847.2,648.4 L848.1,653.2 L848.9,658.1 L849.7,663.0 L850.5,667.8 L851.2,672.7 L851.9,677.6 L852.5,682.4 L853.1,687.3 L853.7,692.1 L854.2,697.0 L854.7,701.8 L855.1,706.7 L855.5,711.5 L855.9,716.4 L856.2,721.2 L856.4,726.1 M848.5,617.8 L849.2,622.6 L849.9,627.5 L850.5,632.4 L851.1,637.2 L851.7,642.1 L852.2,646.9 L852.6,651.8 L853.0,656.6 L853.4,661.5 L853.8,666.3 L854.0,671.2 M851.6,616.3 L851.9,621.1 M801.5,786.1 L801.9,791.3 L802.4,796.4 L802.8,801.6 L803.4,806.7 L803.9,811.9 L804.5,817.0 L805.2,822.2 L805.8,827.3 L806.5,832.5 L807.3,837.6 M798.2,736.2 L798.6,741.4 L799.0,746.5 L799.5,751.7 L800.1,756.8 L800.6,762.0 L801.3,767.1 L801.9,772.2 L802.6,777.4 L803.3,782.5 L804.1,787.7 L804.9,792.8 L805.8,797.9 L806.6,803.1 L807.5,808.2 L808.5,813.3 L809.4,818.4 L810.4,823.6 L811.5,828.7 L812.5,833.8 L813.6,838.9 M794.4,681.1 L794.8,686.3 L795.2,691.4 L795.7,696.6 L796.2,701.7 L796.8,706.9 L797.4,712.0 L798.0,717.2 L798.7,722.3 L799.4,727.4 L800.2,732.6 L801.0,737.7 L801.8,742.9 L802.7,748.0 L803.6,753.1 L804.5,758.2 L805.4,763.4 L806.4,768.5 L807.5,773.6 L808.5,778.7 L809.6,783.8 L810.7,788.9 L811.8,794.0 L813.0,799.1 L814.1,804.2 L815.3,809.3 L816.5,814.4 L817.8,819.5 L819.0,824.5 L820.3,829.6 L821.6,834.7 L822.8,839.7 M791.0,631.2 L791.4,636.3 L791.9,641.5 L792.4,646.6 L792.9,651.8 L793.5,656.9 L794.1,662.1 L794.8,667.2 L795.5,672.4 L796.2,677.5 L797.0,682.6 L797.8,687.8 L798.7,692.9 L799.6,698.0 L800.5,703.2 L801.4,708.3 L802.4,713.4 L803.5,718.5 L804.5,723.6 L805.6,728.8 L806.7,733.9 L807.8,739.0 L809.0,744.1 L810.2,749.2 L811.4,754.3 L812.6,759.3 L813.8,764.4 L815.1,769.5 L816.3,774.6 L817.6,779.6 L818.9,784.7 L820.2,789.7 L821.6,794.8 L822.9,799.8 L824.2,804.9 L825.6,809.9 L826.9,814.9 L828.3,820.0 L829.6,825.0 L831.0,830.0 L832.3,835.0 L833.7,840.0 M791.6,617.3 L792.3,622.4 L793.1,627.6 L793.9,632.7 L794.7,637.8 L795.6,643.0 L796.5,648.1 L797.4,653.2 L798.4,658.3 L799.4,663.5 L800.5,668.6 L801.6,673.7 L802.7,678.8 L803.8,683.9 L805.0,689.0 L806.1,694.1 L807.4,699.2 L808.6,704.3 L809.8,709.4 L811.1,714.5 L812.4,719.5 L813.7,724.6 L815.0,729.7 L816.3,734.7 L817.7,739.8 L819.0,744.8 L820.4,749.9 L821.7,754.9 L823.1,759.9 L824.5,765.0 L825.8,770.0 L827.2,775.0 L828.6,780.0 L830.0,785.0 L831.3,790.0 L832.7,795.0 L834.0,800.0 L835.4,805.0 L836.7,809.9 L838.0,814.9 L839.3,819.9 L840.6,824.8 L841.9,829.8 L843.1,834.7 L844.4,839.7 M797.5,618.6 L798.7,623.7 L799.8,628.8 L800.9,634.0 L802.1,639.1 L803.3,644.1 L804.6,649.2 L805.8,654.3 L807.1,659.4 L808.4,664.5 L809.7,669.6 L811.0,674.6 L812.4,679.7 L813.7,684.7 L815.1,689.8 L816.5,694.8 L817.9,699.9 L819.3,704.9 L820.7,709.9 L822.0,715.0 L823.4,720.0 L824.8,725.0 L826.2,730.0 L827.6,735.0 L829.0,740.0 L830.4,745.0 L831.8,750.0 L833.1,754.9 L834.5,759.9 L835.8,764.9 L837.1,769.8 L838.4,774.8 L839.7,779.8 L841.0,784.7 L842.3,789.6 L843.5,794.6 L844.7,799.5 L845.9,804.4 L847.0,809.3 L848.2,814.3 L849.3,819.2 L850.3,824.1 L851.4,829.0 L852.4,833.9 L853.4,838.8 M807.1,619.6 L808.4,624.6 L809.8,629.7 L811.2,634.8 L812.6,639.8 L814.0,644.9 L815.4,649.9 L816.8,654.9 L818.2,659.9 L819.6,665.0 L821.1,670.0 L822.5,675.0 L823.9,680.0 L825.3,685.0 L826.7,690.0 L828.1,695.0 L829.5,700.0 L830.9,704.9 L832.3,709.9 L833.6,714.9 L835.0,719.8 L836.3,724.8 L837.6,729.7 L838.9,734.7 L840.1,739.6 L841.4,744.5 L842.6,749.5 L843.8,754.4 L845.0,759.3 L846.1,764.2 L847.2,769.1 L848.3,774.0 L849.3,778.9 L850.4,783.8 L851.4,788.7 L852.3,793.6 L853.2,798.5 L854.1,803.4 L855.0,808.3 L855.8,813.1 L856.6,818.0 L857.3,822.9 L858.0,827.7 L858.7,832.6 L859.3,837.5 M818.7,620.0 L820.1,625.0 L821.6,630.0 L823.0,635.0 L824.4,640.0 L825.9,645.0 L827.3,650.0 L828.7,654.9 L830.1,659.9 L831.4,664.9 L832.8,669.8 L834.1,674.8 L835.5,679.7 L836.7,684.6 L838.0,689.6 L839.3,694.5 L840.5,699.4 L841.7,704.4 L842.9,709.3 L844.0,714.2 L845.2,719.1 L846.2,724.0 L847.3,728.9 L848.3,733.8 L849.3,738.7 L850.3,743.6 L851.2,748.4 L852.1,753.3 L852.9,758.2 L853.8,763.1 L854.5,767.9 L855.3,772.8 L856.0,777.7 L856.6,782.5 L857.2,787.4 L857.8,792.3 L858.4,797.1 L858.9,802.0 L859.3,806.8 L859.7,811.7 L860.1,816.5 L860.4,821.4 L860.7,826.2 M842.5,618.9 L841.9,624.0 L841.2,629.1 L840.6,634.2 L839.9,639.2 L839.2,644.3 L838.4,649.4 L837.7,654.5 L836.9,659.6 L836.2,664.6 L835.4,669.7 L834.6,674.7 L833.7,679.8 L832.9,684.8 L832.1,689.9 L831.2,694.9 L830.4,699.9 L829.6,705.0 L828.7,710.0 L827.9,715.0 L827.0,720.0 L826.2,725.0 L825.3,730.0 L824.5,735.0 L823.7,740.0 L822.9,744.9 L822.1,749.9 L821.3,754.9 L820.5,759.8 L819.8,764.8 L819.0,769.7 L818.3,774.7 L817.6,779.6 L817.0,784.6 L816.3,789.5 L815.7,794.4 L815.1,799.3 L814.5,804.3 L813.9,809.2 L813.4,814.1 L812.9,819.0 L812.5,823.9 L812.0,828.8 L811.6,833.6 L811.3,838.5 M849.2,617.6 L849.0,622.7 L848.7,627.8 L848.4,633.0 L848.0,638.1 L847.6,643.2 L847.2,648.4 L846.7,653.5 L846.2,658.6 L845.7,663.7 L845.1,668.8 L844.6,673.9 L843.9,679.0 L843.3,684.1 L842.7,689.2 L842.0,694.3 L841.3,699.4 L840.6,704.5 L839.8,709.5 L839.1,714.6 L838.3,719.7 L837.5,724.7 L836.7,729.8 L835.9,734.8 L835.1,739.9 L834.3,744.9 L833.5,749.9 L832.7,755.0 L831.9,760.0 L831.0,765.0 L830.2,770.0 L829.4,775.0 L828.6,780.0 L827.8,785.0 L827.0,790.0 L826.2,795.0 L825.4,799.9 L824.7,804.9 L823.9,809.9 L823.2,814.8 L822.4,819.8 L821.7,824.7 L821.1,829.7 L820.4,834.6 L819.8,839.5 M851.9,621.2 L852.0,626.3 L852.1,631.5 L852.2,636.6 L852.2,641.8 L852.2,646.9 L852.1,652.1 L852.0,657.2 L851.8,662.4 L851.6,667.5 L851.4,672.6 L851.1,677.8 L850.8,682.9 L850.5,688.0 L850.1,693.2 L849.7,698.3 L849.3,703.4 L848.8,708.5 L848.3,713.7 L847.8,718.8 L847.2,723.9 L846.7,729.0 L846.0,734.1 L845.4,739.2 L844.8,744.3 L844.1,749.3 L843.4,754.4 L842.7,759.5 L842.0,764.6 L841.2,769.6 L840.5,774.7 L839.7,779.8 L839.0,784.8 L838.2,789.8 L837.4,794.9 L836.6,799.9 L835.8,804.9 L835.0,810.0 L834.2,815.0 L833.4,820.0 L832.6,825.0 L831.8,830.0 L831.0,835.0 L830.3,840.0 M854.1,671.1 L854.2,676.3 L854.3,681.4 L854.4,686.6 L854.4,691.7 L854.4,696.9 L854.4,702.0 L854.3,707.2 L854.2,712.3 L854.0,717.5 L853.8,722.6 L853.6,727.7 L853.3,732.9 L853.0,738.0 L852.6,743.1 L852.2,748.3 L851.8,753.4 L851.4,758.5 L850.9,763.6 L850.4,768.7 L849.9,773.8 L849.3,778.9 L848.8,784.0 L848.2,789.1 L847.5,794.2 L846.9,799.3 L846.2,804.4 L845.6,809.5 L844.9,814.5 L844.2,819.6 L843.4,824.7 L842.7,829.7 L841.9,834.8 L841.2,839.8 M856.4,726.2 L856.5,731.4 L856.6,736.5 L856.7,741.7 L856.7,746.8 L856.7,752.0 L856.6,757.1 L856.5,762.3 L856.4,767.4 L856.2,772.5 L856.0,777.7 L855.7,782.8 L855.4,787.9 L855.1,793.1 L854.8,798.2 L854.4,803.3 L854.0,808.4 L853.5,813.6 L853.0,818.7 L852.5,823.8 L852.0,828.9 L851.5,834.0 L850.9,839.1 M858.6,776.2 L858.7,781.3 L858.9,786.5 L858.9,791.6 L859.0,796.8 L859.0,801.9 L858.9,807.0 L858.8,812.2 L858.7,817.3 L858.6,822.5 L858.4,827.6 L858.1,832.8 L857.9,837.9 M860.8,826.1 L860.9,831.2 L861.1,836.4 M792.2,617.5 L792.1,622.4 L792.1,627.2 L792.1,632.1 L792.1,636.9 L792.2,641.8 L792.4,646.6 L792.6,651.5 L792.8,656.3 L793.0,661.2 M798.8,618.8 L798.3,623.7 L797.9,628.6 L797.5,633.5 L797.1,638.3 L796.8,643.2 L796.5,648.1 L796.2,653.0 L796.0,657.8 L795.9,662.7 L795.7,667.6 L795.6,672.4 L795.6,677.3 L795.6,682.1 L795.6,687.0 L795.7,691.8 L795.8,696.7 L796.0,701.5 L796.2,706.4 L796.5,711.2 L796.8,716.1 M808.8,619.7 L808.0,624.6 L807.3,629.6 L806.6,634.5 L805.9,639.4 L805.2,644.3 L804.6,649.2 L804.0,654.1 L803.4,659.1 L802.9,664.0 L802.4,668.8 L801.9,673.7 L801.4,678.6 L801.0,683.5 L800.7,688.4 L800.3,693.3 L800.0,698.1 L799.8,703.0 L799.6,707.9 L799.4,712.7 L799.3,717.6 L799.2,722.5 L799.1,727.3 L799.1,732.2 L799.1,737.0 L799.2,741.9 L799.3,746.7 L799.5,751.6 L799.7,756.4 L799.9,761.3 L800.2,766.1 M820.6,620.0 L819.7,625.0 L818.8,630.0 L817.9,635.0 L817.1,639.9 L816.2,644.9 L815.4,649.9 L814.6,654.9 L813.8,659.8 L813.0,664.8 L812.2,669.7 L811.5,674.6 L810.7,679.6 L810.0,684.5 L809.4,689.4 L808.7,694.4 L808.1,699.3 L807.5,704.2 L806.9,709.1 L806.4,714.0 L805.9,718.9 L805.4,723.8 L805.0,728.7 L804.6,733.6 L804.2,738.4 L803.9,743.3 L803.6,748.2 L803.3,753.1 L803.1,757.9 L802.9,762.8 L802.8,767.7 L802.7,772.5 L802.6,777.4 L802.6,782.2 L802.6,787.1 L802.7,792.0 L802.8,796.8 L802.9,801.7 L803.1,806.5 L803.3,811.4 L803.6,816.2 M832.4,619.7 L831.6,624.8 L830.7,629.8 L829.9,634.9 L829.0,639.9 L828.1,644.9 L827.3,650.0 L826.4,655.0 L825.5,660.0 L824.7,665.0 L823.8,670.0 L822.9,675.0 L822.1,680.0 L821.2,685.0 L820.4,690.0 L819.6,694.9 L818.7,699.9 L817.9,704.9 L817.2,709.8 L816.4,714.8 L815.6,719.7 L814.9,724.7 L814.2,729.6 L813.5,734.5 L812.8,739.5 L812.2,744.4 L811.6,749.3 L811.0,754.2 L810.4,759.1 L809.9,764.0 L809.4,768.9 L808.9,773.8 L808.5,778.7 L808.1,783.6 L807.7,788.5 L807.4,793.4 L807.1,798.2 L806.9,803.1 L806.6,808.0 L806.4,812.9 L806.3,817.7 L806.2,822.6 L806.1,827.4 L806.1,832.3 L806.1,837.2 M842.5,618.9 L841.9,624.0 L841.2,629.1 L840.6,634.2 L839.9,639.2 L839.2,644.3 L838.4,649.4 L837.7,654.5 L836.9,659.6 L836.2,664.6 L835.4,669.7 L834.6,674.7 L833.7,679.8 L832.9,684.8 L832.1,689.9 L831.2,694.9 L830.4,699.9 L829.6,705.0 L828.7,710.0 L827.9,715.0 L827.0,720.0 L826.2,725.0 L825.3,730.0 L824.5,735.0 L823.7,740.0 L822.9,744.9 L822.1,749.9 L821.3,754.9 L820.5,759.8 L819.8,764.8 L819.0,769.7 L818.3,774.7 L817.6,779.6 L817.0,784.6 L816.3,789.5 L815.7,794.4 L815.1,799.3 L814.5,804.3 L813.9,809.2 L813.4,814.1 L812.9,819.0 L812.5,823.9 L812.0,828.8 L811.6,833.6 L811.3,838.5 M849.2,617.6 L849.0,622.7 L848.7,627.8 L848.4,633.0 L848.0,638.1 L847.6,643.2 L847.2,648.4 L846.7,653.5 L846.2,658.6 L845.7,663.7 L845.1,668.8 L844.6,673.9 L843.9,679.0 L843.3,684.1 L842.7,689.2 L842.0,694.3 L841.3,699.4 L840.6,704.5 L839.8,709.5 L839.1,714.6 L838.3,719.7 L837.5,724.7 L836.7,729.8 L835.9,734.8 L835.1,739.9 L834.3,744.9 L833.5,749.9 L832.7,755.0 L831.9,760.0 L831.0,765.0 L830.2,770.0 L829.4,775.0 L828.6,780.0 L827.8,785.0 L827.0,790.0 L826.2,795.0 L825.4,799.9 L824.7,804.9 L823.9,809.9 L823.2,814.8 L822.4,819.8 L821.7,824.7 L821.1,829.7 L820.4,834.6 L819.8,839.5 M851.9,621.2 L852.0,626.3 L852.1,631.5 L852.2,636.6 L852.2,641.8 L852.2,646.9 L852.1,652.1 L852.0,657.2 L851.8,662.4 L851.6,667.5 L851.4,672.6 L851.1,677.8 L850.8,682.9 L850.5,688.0 L850.1,693.2 L849.7,698.3 L849.3,703.4 L848.8,708.5 L848.3,713.7 L847.8,718.8 L847.2,723.9 L846.7,729.0 L846.0,734.1 L845.4,739.2 L844.8,744.3 L844.1,749.3 L843.4,754.4 L842.7,759.5 L842.0,764.6 L841.2,769.6 L840.5,774.7 L839.7,779.8 L839.0,784.8 L838.2,789.8 L837.4,794.9 L836.6,799.9 L835.8,804.9 L835.0,810.0 L834.2,815.0 L833.4,820.0 L832.6,825.0 L831.8,830.0 L831.0,835.0 L830.3,840.0 M854.1,671.1 L854.2,676.3 L854.3,681.4 L854.4,686.6 L854.4,691.7 L854.4,696.9 L854.4,702.0 L854.3,707.2 L854.2,712.3 L854.0,717.5 L853.8,722.6 L853.6,727.7 L853.3,732.9 L853.0,738.0 L852.6,743.1 L852.2,748.3 L851.8,753.4 L851.4,758.5 L850.9,763.6 L850.4,768.7 L849.9,773.8 L849.3,778.9 L848.8,784.0 L848.2,789.1 L847.5,794.2 L846.9,799.3 L846.2,804.4 L845.6,809.5 L844.9,814.5 L844.2,819.6 L843.4,824.7 L842.7,829.7 L841.9,834.8 L841.2,839.8 M856.4,726.2 L856.5,731.4 L856.6,736.5 L856.7,741.7 L856.7,746.8 L856.7,752.0 L856.6,757.1 L856.5,762.3 L856.4,767.4 L856.2,772.5 L856.0,777.7 L855.7,782.8 L855.4,787.9 L855.1,793.1 L854.8,798.2 L854.4,803.3 L854.0,808.4 L853.5,813.6 L853.0,818.7 L852.5,823.8 L852.0,828.9 L851.5,834.0 L850.9,839.1 M858.6,776.2 L858.7,781.3 L858.9,786.5 L858.9,791.6 L859.0,796.8 L859.0,801.9 L858.9,807.0 L858.8,812.2 L858.7,817.3 L858.6,822.5 L858.4,827.6 L858.1,832.8 L857.9,837.9 M860.8,826.1 L860.9,831.2 L861.1,836.4 M792.2,617.5 L792.1,622.4 L792.1,627.2 L792.1,632.1 L792.1,636.9 L792.2,641.8 L792.4,646.6 L792.6,651.5 L792.8,656.3 L793.0,661.2 M798.8,618.8 L798.3,623.7 L797.9,628.6 L797.5,633.5 L797.1,638.3 L796.8,643.2 L796.5,648.1 L796.2,653.0 L796.0,657.8 L795.9,662.7 L795.7,667.6 L795.6,672.4 L795.6,677.3 L795.6,682.1 L795.6,687.0 L795.7,691.8 L795.8,696.7 L796.0,701.5 L796.2,706.4 L796.5,711.2 L796.8,716.1 M808.8,619.7 L808.0,624.6 L807.3,629.6 L806.6,634.5 L805.9,639.4 L805.2,644.3 L804.6,649.2 L804.0,654.1 L803.4,659.1 L802.9,664.0 L802.4,668.8 L801.9,673.7 L801.4,678.6 L801.0,683.5 L800.7,688.4 L800.3,693.3 L800.0,698.1 L799.8,703.0 L799.6,707.9 L799.4,712.7 L799.3,717.6 L799.2,722.5 L799.1,727.3 L799.1,732.2 L799.1,737.0 L799.2,741.9 L799.3,746.7 L799.5,751.6 L799.7,756.4 L799.9,761.3 L800.2,766.1 M820.6,620.0 L819.7,625.0 L818.8,630.0 L817.9,635.0 L817.1,639.9 L816.2,644.9 L815.4,649.9 L814.6,654.9 L813.8,659.8 L813.0,664.8 L812.2,669.7 L811.5,674.6 L810.7,679.6 L810.0,684.5 L809.4,689.4 L808.7,694.4 L808.1,699.3 L807.5,704.2 L806.9,709.1 L806.4,714.0 L805.9,718.9 L805.4,723.8 L805.0,728.7 L804.6,733.6 L804.2,738.4 L803.9,743.3 L803.6,748.2 L803.3,753.1 L803.1,757.9 L802.9,762.8 L802.8,767.7 L802.7,772.5 L802.6,777.4 L802.6,782.2 L802.6,787.1 L802.7,792.0 L802.8,796.8 L802.9,801.7 L803.1,806.5 L803.3,811.4 L803.6,816.2 M832.4,619.7 L831.6,624.8 L830.7,629.8 L829.9,634.9 L829.0,639.9 L828.1,644.9 L827.3,650.0 L826.4,655.0 L825.5,660.0 L824.7,665.0 L823.8,670.0 L822.9,675.0 L822.1,680.0 L821.2,685.0 L820.4,690.0 L819.6,694.9 L818.7,699.9 L817.9,704.9 L817.2,709.8 L816.4,714.8 L815.6,719.7 L814.9,724.7 L814.2,729.6 L813.5,734.5 L812.8,739.5 L812.2,744.4 L811.6,749.3 L811.0,754.2 L810.4,759.1 L809.9,764.0 L809.4,768.9 L808.9,773.8 L808.5,778.7 L808.1,783.6 L807.7,788.5 L807.4,793.4 L807.1,798.2 L806.9,803.1 L806.6,808.0 L806.4,812.9 L806.3,817.7 L806.2,822.6 L806.1,827.4 L806.1,832.3 L806.1,837.2 M842.5,618.9 L841.9,624.0 L841.2,629.1 L840.6,634.2 L839.9,639.2 L839.2,644.3 L838.4,649.4 L837.7,654.5 L836.9,659.6 L836.2,664.6 L835.4,669.7 L834.6,674.7 L833.7,679.8 L832.9,684.8 L832.1,689.9 L831.2,694.9 L830.4,699.9 L829.6,705.0 L828.7,710.0 L827.9,715.0 L827.0,720.0 L826.2,725.0 L825.3,730.0 L824.5,735.0 L823.7,740.0 L822.9,744.9 L822.1,749.9 L821.3,754.9 L820.5,759.8 L819.8,764.8 L819.0,769.7 L818.3,774.7 L817.6,779.6 L817.0,784.6 L816.3,789.5 L815.7,794.4 L815.1,799.3 L814.5,804.3 L813.9,809.2 L813.4,814.1 L812.9,819.0 L812.5,823.9 L812.0,828.8 L811.6,833.6 L811.3,838.5 M849.2,617.6 L849.0,622.7 L848.7,627.8 L848.4,633.0 L848.0,638.1 L847.6,643.2 L847.2,648.4 L846.7,653.5 L846.2,658.6 L845.7,663.7 L845.1,668.8 L844.6,673.9 L843.9,679.0 L843.3,684.1 L842.7,689.2 L842.0,694.3 L841.3,699.4 L840.6,704.5 L839.8,709.5 L839.1,714.6 L838.3,719.7 L837.5,724.7 L836.7,729.8 L835.9,734.8 L835.1,739.9 L834.3,744.9 L833.5,749.9 L832.7,755.0 L831.9,760.0 L831.0,765.0 L830.2,770.0 L829.4,775.0 L828.6,780.0 L827.8,785.0 L827.0,790.0 L826.2,795.0 L825.4,799.9 L824.7,804.9 L823.9,809.9 L823.2,814.8 L822.4,819.8 L821.7,824.7 L821.1,829.7 L820.4,834.6 L819.8,839.5 M851.9,621.2 L852.0,626.3 L852.1,631.5 L852.2,636.6 L852.2,641.8 L852.2,646.9 L852.1,652.1 L852.0,657.2 L851.8,662.4 L851.6,667.5 L851.4,672.6 L851.1,677.8 L850.8,682.9 L850.5,688.0 L850.1,693.2 L849.7,698.3 L849.3,703.4 L848.8,708.5 L848.3,713.7 L847.8,718.8 L847.2,723.9 L846.7,729.0 L846.0,734.1 L845.4,739.2 L844.8,744.3 L844.1,749.3 L843.4,754.4 L842.7,759.5 L842.0,764.6 L841.2,769.6 L840.5,774.7 L839.7,779.8 L839.0,784.8 L838.2,789.8 L837.4,794.9 L836.6,799.9 L835.8,804.9 L835.0,810.0 L834.2,815.0 L833.4,820.0 L832.6,825.0 L831.8,830.0 L831.0,835.0 L830.3,840.0 M854.1,671.1 L854.2,676.3 L854.3,681.4 L854.4,686.6 L854.4,691.7 L854.4,696.9 L854.4,702.0 L854.3,707.2 L854.2,712.3 L854.0,717.5 L853.8,722.6 L853.6,727.7 L853.3,732.9 L853.0,738.0 L852.6,743.1 L852.2,748.3 L851.8,753.4 L851.4,758.5 L850.9,763.6 L850.4,768.7 L849.9,773.8 L849.3,778.9 L848.8,784.0 L848.2,789.1 L847.5,794.2 L846.9,799.3 L846.2,804.4 L845.6,809.5 L844.9,814.5 L844.2,819.6 L843.4,824.7 L842.7,829.7 L841.9,834.8 L841.2,839.8 M856.4,726.2 L856.5,731.4 L856.6,736.5 L856.7,741.7 L856.7,746.8 L856.7,752.0 L856.6,757.1 L856.5,762.3 L856.4,767.4 L856.2,772.5 L856.0,777.7 L855.7,782.8 L855.4,787.9 L855.1,793.1 L854.8,798.2 L854.4,803.3 L854.0,808.4 L853.5,813.6 L853.0,818.7 L852.5,823.8 L852.0,828.9 L851.5,834.0 L850.9,839.1 M858.6,776.2 L858.7,781.3 L858.9,786.5 L858.9,791.6 L859.0,796.8 L859.0,801.9 L858.9,807.0 L858.8,812.2 L858.7,817.3 L858.6,822.5 L858.4,827.6 L858.1,832.8 L857.9,837.9 M860.8,826.1 L860.9,831.2 L861.1,836.4 M792.2,617.5 L792.1,622.4 L792.1,627.2 L792.1,632.1 L792.1,636.9 L792.2,641.8 L792.4,646.6 L792.6,651.5 L792.8,656.3 L793.0,661.2 M798.8,618.8 L798.3,623.7 L797.9,628.6 L797.5,633.5 L797.1,638.3 L796.8,643.2 L796.5,648.1 L796.2,653.0 L796.0,657.8 L795.9,662.7 L795.7,667.6 L795.6,672.4 L795.6,677.3 L795.6,682.1 L795.6,687.0 L795.7,691.8 L795.8,696.7 L796.0,701.5 L796.2,706.4 L796.5,711.2 L796.8,716.1 M808.8,619.7 L808.0,624.6 L807.3,629.6 L806.6,634.5 L805.9,639.4 L805.2,644.3 L804.6,649.2 L804.0,654.1 L803.4,659.1 L802.9,664.0 L802.4,668.8 L801.9,673.7 L801.4,678.6 L801.0,683.5 L800.7,688.4 L800.3,693.3 L800.0,698.1 L799.8,703.0 L799.6,707.9 L799.4,712.7 L799.3,717.6 L799.2,722.5 L799.1,727.3 L799.1,732.2 L799.1,737.0 L799.2,741.9 L799.3,746.7 L799.5,751.6 L799.7,756.4 L799.9,761.3 L800.2,766.1 M820.6,620.0 L819.7,625.0 L818.8,630.0 L817.9,635.0 L817.1,639.9 L816.2,644.9 L815.4,649.9 L814.6,654.9 L813.8,659.8 L813.0,664.8 L812.2,669.7 L811.5,674.6 L810.7,679.6 L810.0,684.5 L809.4,689.4 L808.7,694.4 L808.1,699.3 L807.5,704.2 L806.9,709.1 L806.4,714.0 L805.9,718.9 L805.4,723.8 L805.0,728.7 L804.6,733.6 L804.2,738.4 L803.9,743.3 L803.6,748.2 L803.3,753.1 L803.1,757.9 L802.9,762.8 L802.8,767.7 L802.7,772.5 L802.6,777.4 L802.6,782.2 L802.6,787.1 L802.7,792.0 L802.8,796.8 L802.9,801.7 L803.1,806.5 L803.3,811.4 L803.6,816.2 M832.4,619.7 L831.6,624.8 L830.7,629.8 L829.9,634.9 L829.0,639.9 L828.1,644.9 L827.3,650.0 L826.4,655.0 L825.5,660.0 L824.7,665.0 L823.8,670.0 L822.9,675.0 L822.1,680.0 L821.2,685.0 L820.4,690.0 L819.6,694.9 L818.7,699.9 L817.9,704.9 L817.2,709.8 L816.4,714.8 L815.6,719.7 L814.9,724.7 L814.2,729.6 L813.5,734.5 L812.8,739.5 L812.2,744.4 L811.6,749.3 L811.0,754.2 L810.4,759.1 L809.9,764.0 L809.4,768.9 L808.9,773.8 L808.5,778.7 L808.1,783.6 L807.7,788.5 L807.4,793.4 L807.1,798.2 L806.9,803.1 L806.6,808.0 L806.4,812.9 L806.3,817.7 L806.2,822.6 L806.1,827.4 L806.1,832.3 L806.1,837.2" stroke="#050505" stroke-width="3.2"/><path d="M830.6,619.8 L832.0,624.7 L833.3,629.7 L834.6,634.6 L835.9,639.6 L837.2,644.5 L838.4,649.4 L839.7,654.3 L840.8,659.2 L842.0,664.2 L843.1,669.1 L844.2,674.0 L845.3,678.9 L846.3,683.7 L847.3,688.6 L848.3,693.5 L849.2,698.4 L850.1,703.3 L850.9,708.2 L851.7,713.0 L852.5,717.9 L853.2,722.8 L853.9,727.6 L854.6,732.5 L855.2,737.3 L855.8,742.2 L856.3,747.0 L856.8,751.9 L857.2,756.8 L857.6,761.6 L858.0,766.5 L858.3,771.3 L858.6,776.2 M841.1,619.0 L842.2,623.9 L843.3,628.8 L844.3,633.7 L845.3,638.6 L846.3,643.5 L847.2,648.4 L848.1,653.2 L848.9,658.1 L849.7,663.0 L850.5,667.8 L851.2,672.7 L851.9,677.6 L852.5,682.4 L853.1,687.3 L853.7,692.1 L854.2,697.0 L854.7,701.8 L855.1,706.7 L855.5,711.5 L855.9,716.4 L856.2,721.2 L856.4,726.1 M848.5,617.8 L849.2,622.6 L849.9,627.5 L850.5,632.4 L851.1,637.2 L851.7,642.1 L852.2,646.9 L852.6,651.8 L853.0,656.6 L853.4,661.5 L853.8,666.3 L854.0,671.2 M851.6,616.3 L851.9,621.1 M801.5,786.1 L801.9,791.3 L802.4,796.4 L802.8,801.6 L803.4,806.7 L803.9,811.9 L804.5,817.0 L805.2,822.2 L805.8,827.3 L806.5,832.5 L807.3,837.6 M798.2,736.2 L798.6,741.4 L799.0,746.5 L799.5,751.7 L800.1,756.8 L800.6,762.0 L801.3,767.1 L801.9,772.2 L802.6,777.4 L803.3,782.5 L804.1,787.7 L804.9,792.8 L805.8,797.9 L806.6,803.1 L807.5,808.2 L808.5,813.3 L809.4,818.4 L810.4,823.6 L811.5,828.7 L812.5,833.8 L813.6,838.9 M794.4,681.1 L794.8,686.3 L795.2,691.4 L795.7,696.6 L796.2,701.7 L796.8,706.9 L797.4,712.0 L798.0,717.2 L798.7,722.3 L799.4,727.4 L800.2,732.6 L801.0,737.7 L801.8,742.9 L802.7,748.0 L803.6,753.1 L804.5,758.2 L805.4,763.4 L806.4,768.5 L807.5,773.6 L808.5,778.7 L809.6,783.8 L810.7,788.9 L811.8,794.0 L813.0,799.1 L814.1,804.2 L815.3,809.3 L816.5,814.4 L817.8,819.5 L819.0,824.5 L820.3,829.6 L821.6,834.7 L822.8,839.7 M791.0,631.2 L791.4,636.3 L791.9,641.5 L792.4,646.6 L792.9,651.8 L793.5,656.9 L794.1,662.1 L794.8,667.2 L795.5,672.4 L796.2,677.5 L797.0,682.6 L797.8,687.8 L798.7,692.9 L799.6,698.0 L800.5,703.2 L801.4,708.3 L802.4,713.4 L803.5,718.5 L804.5,723.6 L805.6,728.8 L806.7,733.9 L807.8,739.0 L809.0,744.1 L810.2,749.2 L811.4,754.3 L812.6,759.3 L813.8,764.4 L815.1,769.5 L816.3,774.6 L817.6,779.6 L818.9,784.7 L820.2,789.7 L821.6,794.8 L822.9,799.8 L824.2,804.9 L825.6,809.9 L826.9,814.9 L828.3,820.0 L829.6,825.0 L831.0,830.0 L832.3,835.0 L833.7,840.0 M791.6,617.3 L792.3,622.4 L793.1,627.6 L793.9,632.7 L794.7,637.8 L795.6,643.0 L796.5,648.1 L797.4,653.2 L798.4,658.3 L799.4,663.5 L800.5,668.6 L801.6,673.7 L802.7,678.8 L803.8,683.9 L805.0,689.0 L806.1,694.1 L807.4,699.2 L808.6,704.3 L809.8,709.4 L811.1,714.5 L812.4,719.5 L813.7,724.6 L815.0,729.7 L816.3,734.7 L817.7,739.8 L819.0,744.8 L820.4,749.9 L821.7,754.9 L823.1,759.9 L824.5,765.0 L825.8,770.0 L827.2,775.0 L828.6,780.0 L830.0,785.0 L831.3,790.0 L832.7,795.0 L834.0,800.0 L835.4,805.0 L836.7,809.9 L838.0,814.9 L839.3,819.9 L840.6,824.8 L841.9,829.8 L843.1,834.7 L844.4,839.7 M797.5,618.6 L798.7,623.7 L799.8,628.8 L800.9,634.0 L802.1,639.1 L803.3,644.1 L804.6,649.2 L805.8,654.3 L807.1,659.4 L808.4,664.5 L809.7,669.6 L811.0,674.6 L812.4,679.7 L813.7,684.7 L815.1,689.8 L816.5,694.8 L817.9,699.9 L819.3,704.9 L820.7,709.9 L822.0,715.0 L823.4,720.0 L824.8,725.0 L826.2,730.0 L827.6,735.0 L829.0,740.0 L830.4,745.0 L831.8,750.0 L833.1,754.9 L834.5,759.9 L835.8,764.9 L837.1,769.8 L838.4,774.8 L839.7,779.8 L841.0,784.7 L842.3,789.6 L843.5,794.6 L844.7,799.5 L845.9,804.4 L847.0,809.3 L848.2,814.3 L849.3,819.2 L850.3,824.1 L851.4,829.0 L852.4,833.9 L853.4,838.8 M807.1,619.6 L808.4,624.6 L809.8,629.7 L811.2,634.8 L812.6,639.8 L814.0,644.9 L815.4,649.9 L816.8,654.9 L818.2,659.9 L819.6,665.0 L821.1,670.0 L822.5,675.0 L823.9,680.0 L825.3,685.0 L826.7,690.0 L828.1,695.0 L829.5,700.0 L830.9,704.9 L832.3,709.9 L833.6,714.9 L835.0,719.8 L836.3,724.8 L837.6,729.7 L838.9,734.7 L840.1,739.6 L841.4,744.5 L842.6,749.5 L843.8,754.4 L845.0,759.3 L846.1,764.2 L847.2,769.1 L848.3,774.0 L849.3,778.9 L850.4,783.8 L851.4,788.7 L852.3,793.6 L853.2,798.5 L854.1,803.4 L855.0,808.3 L855.8,813.1 L856.6,818.0 L857.3,822.9 L858.0,827.7 L858.7,832.6 L859.3,837.5 M818.7,620.0 L820.1,625.0 L821.6,630.0 L823.0,635.0 L824.4,640.0 L825.9,645.0 L827.3,650.0 L828.7,654.9 L830.1,659.9 L831.4,664.9 L832.8,669.8 L834.1,674.8 L835.5,679.7 L836.7,684.6 L838.0,689.6 L839.3,694.5 L840.5,699.4 L841.7,704.4 L842.9,709.3 L844.0,714.2 L845.2,719.1 L846.2,724.0 L847.3,728.9 L848.3,733.8 L849.3,738.7 L850.3,743.6 L851.2,748.4 L852.1,753.3 L852.9,758.2 L853.8,763.1 L854.5,767.9 L855.3,772.8 L856.0,777.7 L856.6,782.5 L857.2,787.4 L857.8,792.3 L858.4,797.1 L858.9,802.0 L859.3,806.8 L859.7,811.7 L860.1,816.5 L860.4,821.4 L860.7,826.2 M830.6,619.8 L832.0,624.7 L833.3,629.7 L834.6,634.6 L835.9,639.6 L837.2,644.5 L838.4,649.4 L839.7,654.3 L840.8,659.2 L842.0,664.2 L843.1,669.1 L844.2,674.0 L845.3,678.9 L846.3,683.7 L847.3,688.6 L848.3,693.5 L849.2,698.4 L850.1,703.3 L850.9,708.2 L851.7,713.0 L852.5,717.9 L853.2,722.8 L853.9,727.6 L854.6,732.5 L855.2,737.3 L855.8,742.2 L856.3,747.0 L856.8,751.9 L857.2,756.8 L857.6,761.6 L858.0,766.5 L858.3,771.3 L858.6,776.2 M841.1,619.0 L842.2,623.9 L843.3,628.8 L844.3,633.7 L845.3,638.6 L846.3,643.5 L847.2,648.4 L848.1,653.2 L848.9,658.1 L849.7,663.0 L850.5,667.8 L851.2,672.7 L851.9,677.6 L852.5,682.4 L853.1,687.3 L853.7,692.1 L854.2,697.0 L854.7,701.8 L855.1,706.7 L855.5,711.5 L855.9,716.4 L856.2,721.2 L856.4,726.1 M848.5,617.8 L849.2,622.6 L849.9,627.5 L850.5,632.4 L851.1,637.2 L851.7,642.1 L852.2,646.9 L852.6,651.8 L853.0,656.6 L853.4,661.5 L853.8,666.3 L854.0,671.2 M851.6,616.3 L851.9,621.1 M801.5,786.1 L801.9,791.3 L802.4,796.4 L802.8,801.6 L803.4,806.7 L803.9,811.9 L804.5,817.0 L805.2,822.2 L805.8,827.3 L806.5,832.5 L807.3,837.6 M798.2,736.2 L798.6,741.4 L799.0,746.5 L799.5,751.7 L800.1,756.8 L800.6,762.0 L801.3,767.1 L801.9,772.2 L802.6,777.4 L803.3,782.5 L804.1,787.7 L804.9,792.8 L805.8,797.9 L806.6,803.1 L807.5,808.2 L808.5,813.3 L809.4,818.4 L810.4,823.6 L811.5,828.7 L812.5,833.8 L813.6,838.9 M794.4,681.1 L794.8,686.3 L795.2,691.4 L795.7,696.6 L796.2,701.7 L796.8,706.9 L797.4,712.0 L798.0,717.2 L798.7,722.3 L799.4,727.4 L800.2,732.6 L801.0,737.7 L801.8,742.9 L802.7,748.0 L803.6,753.1 L804.5,758.2 L805.4,763.4 L806.4,768.5 L807.5,773.6 L808.5,778.7 L809.6,783.8 L810.7,788.9 L811.8,794.0 L813.0,799.1 L814.1,804.2 L815.3,809.3 L816.5,814.4 L817.8,819.5 L819.0,824.5 L820.3,829.6 L821.6,834.7 L822.8,839.7 M791.0,631.2 L791.4,636.3 L791.9,641.5 L792.4,646.6 L792.9,651.8 L793.5,656.9 L794.1,662.1 L794.8,667.2 L795.5,672.4 L796.2,677.5 L797.0,682.6 L797.8,687.8 L798.7,692.9 L799.6,698.0 L800.5,703.2 L801.4,708.3 L802.4,713.4 L803.5,718.5 L804.5,723.6 L805.6,728.8 L806.7,733.9 L807.8,739.0 L809.0,744.1 L810.2,749.2 L811.4,754.3 L812.6,759.3 L813.8,764.4 L815.1,769.5 L816.3,774.6 L817.6,779.6 L818.9,784.7 L820.2,789.7 L821.6,794.8 L822.9,799.8 L824.2,804.9 L825.6,809.9 L826.9,814.9 L828.3,820.0 L829.6,825.0 L831.0,830.0 L832.3,835.0 L833.7,840.0 M791.6,617.3 L792.3,622.4 L793.1,627.6 L793.9,632.7 L794.7,637.8 L795.6,643.0 L796.5,648.1 L797.4,653.2 L798.4,658.3 L799.4,663.5 L800.5,668.6 L801.6,673.7 L802.7,678.8 L803.8,683.9 L805.0,689.0 L806.1,694.1 L807.4,699.2 L808.6,704.3 L809.8,709.4 L811.1,714.5 L812.4,719.5 L813.7,724.6 L815.0,729.7 L816.3,734.7 L817.7,739.8 L819.0,744.8 L820.4,749.9 L821.7,754.9 L823.1,759.9 L824.5,765.0 L825.8,770.0 L827.2,775.0 L828.6,780.0 L830.0,785.0 L831.3,790.0 L832.7,795.0 L834.0,800.0 L835.4,805.0 L836.7,809.9 L838.0,814.9 L839.3,819.9 L840.6,824.8 L841.9,829.8 L843.1,834.7 L844.4,839.7 M797.5,618.6 L798.7,623.7 L799.8,628.8 L800.9,634.0 L802.1,639.1 L803.3,644.1 L804.6,649.2 L805.8,654.3 L807.1,659.4 L808.4,664.5 L809.7,669.6 L811.0,674.6 L812.4,679.7 L813.7,684.7 L815.1,689.8 L816.5,694.8 L817.9,699.9 L819.3,704.9 L820.7,709.9 L822.0,715.0 L823.4,720.0 L824.8,725.0 L826.2,730.0 L827.6,735.0 L829.0,740.0 L830.4,745.0 L831.8,750.0 L833.1,754.9 L834.5,759.9 L835.8,764.9 L837.1,769.8 L838.4,774.8 L839.7,779.8 L841.0,784.7 L842.3,789.6 L843.5,794.6 L844.7,799.5 L845.9,804.4 L847.0,809.3 L848.2,814.3 L849.3,819.2 L850.3,824.1 L851.4,829.0 L852.4,833.9 L853.4,838.8 M807.1,619.6 L808.4,624.6 L809.8,629.7 L811.2,634.8 L812.6,639.8 L814.0,644.9 L815.4,649.9 L816.8,654.9 L818.2,659.9 L819.6,665.0 L821.1,670.0 L822.5,675.0 L823.9,680.0 L825.3,685.0 L826.7,690.0 L828.1,695.0 L829.5,700.0 L830.9,704.9 L832.3,709.9 L833.6,714.9 L835.0,719.8 L836.3,724.8 L837.6,729.7 L838.9,734.7 L840.1,739.6 L841.4,744.5 L842.6,749.5 L843.8,754.4 L845.0,759.3 L846.1,764.2 L847.2,769.1 L848.3,774.0 L849.3,778.9 L850.4,783.8 L851.4,788.7 L852.3,793.6 L853.2,798.5 L854.1,803.4 L855.0,808.3 L855.8,813.1 L856.6,818.0 L857.3,822.9 L858.0,827.7 L858.7,832.6 L859.3,837.5 M818.7,620.0 L820.1,625.0 L821.6,630.0 L823.0,635.0 L824.4,640.0 L825.9,645.0 L827.3,650.0 L828.7,654.9 L830.1,659.9 L831.4,664.9 L832.8,669.8 L834.1,674.8 L835.5,679.7 L836.7,684.6 L838.0,689.6 L839.3,694.5 L840.5,699.4 L841.7,704.4 L842.9,709.3 L844.0,714.2 L845.2,719.1 L846.2,724.0 L847.3,728.9 L848.3,733.8 L849.3,738.7 L850.3,743.6 L851.2,748.4 L852.1,753.3 L852.9,758.2 L853.8,763.1 L854.5,767.9 L855.3,772.8 L856.0,777.7 L856.6,782.5 L857.2,787.4 L857.8,792.3 L858.4,797.1 L858.9,802.0 L859.3,806.8 L859.7,811.7 L860.1,816.5 L860.4,821.4 L860.7,826.2 M830.6,619.8 L832.0,624.7 L833.3,629.7 L834.6,634.6 L835.9,639.6 L837.2,644.5 L838.4,649.4 L839.7,654.3 L840.8,659.2 L842.0,664.2 L843.1,669.1 L844.2,674.0 L845.3,678.9 L846.3,683.7 L847.3,688.6 L848.3,693.5 L849.2,698.4 L850.1,703.3 L850.9,708.2 L851.7,713.0 L852.5,717.9 L853.2,722.8 L853.9,727.6 L854.6,732.5 L855.2,737.3 L855.8,742.2 L856.3,747.0 L856.8,751.9 L857.2,756.8 L857.6,761.6 L858.0,766.5 L858.3,771.3 L858.6,776.2 M841.1,619.0 L842.2,623.9 L843.3,628.8 L844.3,633.7 L845.3,638.6 L846.3,643.5 L847.2,648.4 L848.1,653.2 L848.9,658.1 L849.7,663.0 L850.5,667.8 L851.2,672.7 L851.9,677.6 L852.5,682.4 L853.1,687.3 L853.7,692.1 L854.2,697.0 L854.7,701.8 L855.1,706.7 L855.5,711.5 L855.9,716.4 L856.2,721.2 L856.4,726.1 M848.5,617.8 L849.2,622.6 L849.9,627.5 L850.5,632.4 L851.1,637.2 L851.7,642.1 L852.2,646.9 L852.6,651.8 L853.0,656.6 L853.4,661.5 L853.8,666.3 L854.0,671.2 M851.6,616.3 L851.9,621.1 M801.5,786.1 L801.9,791.3 L802.4,796.4 L802.8,801.6 L803.4,806.7 L803.9,811.9 L804.5,817.0 L805.2,822.2 L805.8,827.3 L806.5,832.5 L807.3,837.6 M798.2,736.2 L798.6,741.4 L799.0,746.5 L799.5,751.7 L800.1,756.8 L800.6,762.0 L801.3,767.1 L801.9,772.2 L802.6,777.4 L803.3,782.5 L804.1,787.7 L804.9,792.8 L805.8,797.9 L806.6,803.1 L807.5,808.2 L808.5,813.3 L809.4,818.4 L810.4,823.6 L811.5,828.7 L812.5,833.8 L813.6,838.9 M794.4,681.1 L794.8,686.3 L795.2,691.4 L795.7,696.6 L796.2,701.7 L796.8,706.9 L797.4,712.0 L798.0,717.2 L798.7,722.3 L799.4,727.4 L800.2,732.6 L801.0,737.7 L801.8,742.9 L802.7,748.0 L803.6,753.1 L804.5,758.2 L805.4,763.4 L806.4,768.5 L807.5,773.6 L808.5,778.7 L809.6,783.8 L810.7,788.9 L811.8,794.0 L813.0,799.1 L814.1,804.2 L815.3,809.3 L816.5,814.4 L817.8,819.5 L819.0,824.5 L820.3,829.6 L821.6,834.7 L822.8,839.7 M791.0,631.2 L791.4,636.3 L791.9,641.5 L792.4,646.6 L792.9,651.8 L793.5,656.9 L794.1,662.1 L794.8,667.2 L795.5,672.4 L796.2,677.5 L797.0,682.6 L797.8,687.8 L798.7,692.9 L799.6,698.0 L800.5,703.2 L801.4,708.3 L802.4,713.4 L803.5,718.5 L804.5,723.6 L805.6,728.8 L806.7,733.9 L807.8,739.0 L809.0,744.1 L810.2,749.2 L811.4,754.3 L812.6,759.3 L813.8,764.4 L815.1,769.5 L816.3,774.6 L817.6,779.6 L818.9,784.7 L820.2,789.7 L821.6,794.8 L822.9,799.8 L824.2,804.9 L825.6,809.9 L826.9,814.9 L828.3,820.0 L829.6,825.0 L831.0,830.0 L832.3,835.0 L833.7,840.0 M791.6,617.3 L792.3,622.4 L793.1,627.6 L793.9,632.7 L794.7,637.8 L795.6,643.0 L796.5,648.1 L797.4,653.2 L798.4,658.3 L799.4,663.5 L800.5,668.6 L801.6,673.7 L802.7,678.8 L803.8,683.9 L805.0,689.0 L806.1,694.1 L807.4,699.2 L808.6,704.3 L809.8,709.4 L811.1,714.5 L812.4,719.5 L813.7,724.6 L815.0,729.7 L816.3,734.7 L817.7,739.8 L819.0,744.8 L820.4,749.9 L821.7,754.9 L823.1,759.9 L824.5,765.0 L825.8,770.0 L827.2,775.0 L828.6,780.0 L830.0,785.0 L831.3,790.0 L832.7,795.0 L834.0,800.0 L835.4,805.0 L836.7,809.9 L838.0,814.9 L839.3,819.9 L840.6,824.8 L841.9,829.8 L843.1,834.7 L844.4,839.7 M797.5,618.6 L798.7,623.7 L799.8,628.8 L800.9,634.0 L802.1,639.1 L803.3,644.1 L804.6,649.2 L805.8,654.3 L807.1,659.4 L808.4,664.5 L809.7,669.6 L811.0,674.6 L812.4,679.7 L813.7,684.7 L815.1,689.8 L816.5,694.8 L817.9,699.9 L819.3,704.9 L820.7,709.9 L822.0,715.0 L823.4,720.0 L824.8,725.0 L826.2,730.0 L827.6,735.0 L829.0,740.0 L830.4,745.0 L831.8,750.0 L833.1,754.9 L834.5,759.9 L835.8,764.9 L837.1,769.8 L838.4,774.8 L839.7,779.8 L841.0,784.7 L842.3,789.6 L843.5,794.6 L844.7,799.5 L845.9,804.4 L847.0,809.3 L848.2,814.3 L849.3,819.2 L850.3,824.1 L851.4,829.0 L852.4,833.9 L853.4,838.8 M807.1,619.6 L808.4,624.6 L809.8,629.7 L811.2,634.8 L812.6,639.8 L814.0,644.9 L815.4,649.9 L816.8,654.9 L818.2,659.9 L819.6,665.0 L821.1,670.0 L822.5,675.0 L823.9,680.0 L825.3,685.0 L826.7,690.0 L828.1,695.0 L829.5,700.0 L830.9,704.9 L832.3,709.9 L833.6,714.9 L835.0,719.8 L836.3,724.8 L837.6,729.7 L838.9,734.7 L840.1,739.6 L841.4,744.5 L842.6,749.5 L843.8,754.4 L845.0,759.3 L846.1,764.2 L847.2,769.1 L848.3,774.0 L849.3,778.9 L850.4,783.8 L851.4,788.7 L852.3,793.6 L853.2,798.5 L854.1,803.4 L855.0,808.3 L855.8,813.1 L856.6,818.0 L857.3,822.9 L858.0,827.7 L858.7,832.6 L859.3,837.5 M818.7,620.0 L820.1,625.0 L821.6,630.0 L823.0,635.0 L824.4,640.0 L825.9,645.0 L827.3,650.0 L828.7,654.9 L830.1,659.9 L831.4,664.9 L832.8,669.8 L834.1,674.8 L835.5,679.7 L836.7,684.6 L838.0,689.6 L839.3,694.5 L840.5,699.4 L841.7,704.4 L842.9,709.3 L844.0,714.2 L845.2,719.1 L846.2,724.0 L847.3,728.9 L848.3,733.8 L849.3,738.7 L850.3,743.6 L851.2,748.4 L852.1,753.3 L852.9,758.2 L853.8,763.1 L854.5,767.9 L855.3,772.8 L856.0,777.7 L856.6,782.5 L857.2,787.4 L857.8,792.3 L858.4,797.1 L858.9,802.0 L859.3,806.8 L859.7,811.7 L860.1,816.5 L860.4,821.4 L860.7,826.2 M842.5,618.9 L841.9,624.0 L841.2,629.1 L840.6,634.2 L839.9,639.2 L839.2,644.3 L838.4,649.4 L837.7,654.5 L836.9,659.6 L836.2,664.6 L835.4,669.7 L834.6,674.7 L833.7,679.8 L832.9,684.8 L832.1,689.9 L831.2,694.9 L830.4,699.9 L829.6,705.0 L828.7,710.0 L827.9,715.0 L827.0,720.0 L826.2,725.0 L825.3,730.0 L824.5,735.0 L823.7,740.0 L822.9,744.9 L822.1,749.9 L821.3,754.9 L820.5,759.8 L819.8,764.8 L819.0,769.7 L818.3,774.7 L817.6,779.6 L817.0,784.6 L816.3,789.5 L815.7,794.4 L815.1,799.3 L814.5,804.3 L813.9,809.2 L813.4,814.1 L812.9,819.0 L812.5,823.9 L812.0,828.8 L811.6,833.6 L811.3,838.5 M849.2,617.6 L849.0,622.7 L848.7,627.8 L848.4,633.0 L848.0,638.1 L847.6,643.2 L847.2,648.4 L846.7,653.5 L846.2,658.6 L845.7,663.7 L845.1,668.8 L844.6,673.9 L843.9,679.0 L843.3,684.1 L842.7,689.2 L842.0,694.3 L841.3,699.4 L840.6,704.5 L839.8,709.5 L839.1,714.6 L838.3,719.7 L837.5,724.7 L836.7,729.8 L835.9,734.8 L835.1,739.9 L834.3,744.9 L833.5,749.9 L832.7,755.0 L831.9,760.0 L831.0,765.0 L830.2,770.0 L829.4,775.0 L828.6,780.0 L827.8,785.0 L827.0,790.0 L826.2,795.0 L825.4,799.9 L824.7,804.9 L823.9,809.9 L823.2,814.8 L822.4,819.8 L821.7,824.7 L821.1,829.7 L820.4,834.6 L819.8,839.5 M851.9,621.2 L852.0,626.3 L852.1,631.5 L852.2,636.6 L852.2,641.8 L852.2,646.9 L852.1,652.1 L852.0,657.2 L851.8,662.4 L851.6,667.5 L851.4,672.6 L851.1,677.8 L850.8,682.9 L850.5,688.0 L850.1,693.2 L849.7,698.3 L849.3,703.4 L848.8,708.5 L848.3,713.7 L847.8,718.8 L847.2,723.9 L846.7,729.0 L846.0,734.1 L845.4,739.2 L844.8,744.3 L844.1,749.3 L843.4,754.4 L842.7,759.5 L842.0,764.6 L841.2,769.6 L840.5,774.7 L839.7,779.8 L839.0,784.8 L838.2,789.8 L837.4,794.9 L836.6,799.9 L835.8,804.9 L835.0,810.0 L834.2,815.0 L833.4,820.0 L832.6,825.0 L831.8,830.0 L831.0,835.0 L830.3,840.0 M854.1,671.1 L854.2,676.3 L854.3,681.4 L854.4,686.6 L854.4,691.7 L854.4,696.9 L854.4,702.0 L854.3,707.2 L854.2,712.3 L854.0,717.5 L853.8,722.6 L853.6,727.7 L853.3,732.9 L853.0,738.0 L852.6,743.1 L852.2,748.3 L851.8,753.4 L851.4,758.5 L850.9,763.6 L850.4,768.7 L849.9,773.8 L849.3,778.9 L848.8,784.0 L848.2,789.1 L847.5,794.2 L846.9,799.3 L846.2,804.4 L845.6,809.5 L844.9,814.5 L844.2,819.6 L843.4,824.7 L842.7,829.7 L841.9,834.8 L841.2,839.8 M856.4,726.2 L856.5,731.4 L856.6,736.5 L856.7,741.7 L856.7,746.8 L856.7,752.0 L856.6,757.1 L856.5,762.3 L856.4,767.4 L856.2,772.5 L856.0,777.7 L855.7,782.8 L855.4,787.9 L855.1,793.1 L854.8,798.2 L854.4,803.3 L854.0,808.4 L853.5,813.6 L853.0,818.7 L852.5,823.8 L852.0,828.9 L851.5,834.0 L850.9,839.1 M858.6,776.2 L858.7,781.3 L858.9,786.5 L858.9,791.6 L859.0,796.8 L859.0,801.9 L858.9,807.0 L858.8,812.2 L858.7,817.3 L858.6,822.5 L858.4,827.6 L858.1,832.8 L857.9,837.9 M860.8,826.1 L860.9,831.2 L861.1,836.4 M792.2,617.5 L792.1,622.4 L792.1,627.2 L792.1,632.1 L792.1,636.9 L792.2,641.8 L792.4,646.6 L792.6,651.5 L792.8,656.3 L793.0,661.2 M798.8,618.8 L798.3,623.7 L797.9,628.6 L797.5,633.5 L797.1,638.3 L796.8,643.2 L796.5,648.1 L796.2,653.0 L796.0,657.8 L795.9,662.7 L795.7,667.6 L795.6,672.4 L795.6,677.3 L795.6,682.1 L795.6,687.0 L795.7,691.8 L795.8,696.7 L796.0,701.5 L796.2,706.4 L796.5,711.2 L796.8,716.1 M808.8,619.7 L808.0,624.6 L807.3,629.6 L806.6,634.5 L805.9,639.4 L805.2,644.3 L804.6,649.2 L804.0,654.1 L803.4,659.1 L802.9,664.0 L802.4,668.8 L801.9,673.7 L801.4,678.6 L801.0,683.5 L800.7,688.4 L800.3,693.3 L800.0,698.1 L799.8,703.0 L799.6,707.9 L799.4,712.7 L799.3,717.6 L799.2,722.5 L799.1,727.3 L799.1,732.2 L799.1,737.0 L799.2,741.9 L799.3,746.7 L799.5,751.6 L799.7,756.4 L799.9,761.3 L800.2,766.1 M820.6,620.0 L819.7,625.0 L818.8,630.0 L817.9,635.0 L817.1,639.9 L816.2,644.9 L815.4,649.9 L814.6,654.9 L813.8,659.8 L813.0,664.8 L812.2,669.7 L811.5,674.6 L810.7,679.6 L810.0,684.5 L809.4,689.4 L808.7,694.4 L808.1,699.3 L807.5,704.2 L806.9,709.1 L806.4,714.0 L805.9,718.9 L805.4,723.8 L805.0,728.7 L804.6,733.6 L804.2,738.4 L803.9,743.3 L803.6,748.2 L803.3,753.1 L803.1,757.9 L802.9,762.8 L802.8,767.7 L802.7,772.5 L802.6,777.4 L802.6,782.2 L802.6,787.1 L802.7,792.0 L802.8,796.8 L802.9,801.7 L803.1,806.5 L803.3,811.4 L803.6,816.2 M832.4,619.7 L831.6,624.8 L830.7,629.8 L829.9,634.9 L829.0,639.9 L828.1,644.9 L827.3,650.0 L826.4,655.0 L825.5,660.0 L824.7,665.0 L823.8,670.0 L822.9,675.0 L822.1,680.0 L821.2,685.0 L820.4,690.0 L819.6,694.9 L818.7,699.9 L817.9,704.9 L817.2,709.8 L816.4,714.8 L815.6,719.7 L814.9,724.7 L814.2,729.6 L813.5,734.5 L812.8,739.5 L812.2,744.4 L811.6,749.3 L811.0,754.2 L810.4,759.1 L809.9,764.0 L809.4,768.9 L808.9,773.8 L808.5,778.7 L808.1,783.6 L807.7,788.5 L807.4,793.4 L807.1,798.2 L806.9,803.1 L806.6,808.0 L806.4,812.9 L806.3,817.7 L806.2,822.6 L806.1,827.4 L806.1,832.3 L806.1,837.2 M842.5,618.9 L841.9,624.0 L841.2,629.1 L840.6,634.2 L839.9,639.2 L839.2,644.3 L838.4,649.4 L837.7,654.5 L836.9,659.6 L836.2,664.6 L835.4,669.7 L834.6,674.7 L833.7,679.8 L832.9,684.8 L832.1,689.9 L831.2,694.9 L830.4,699.9 L829.6,705.0 L828.7,710.0 L827.9,715.0 L827.0,720.0 L826.2,725.0 L825.3,730.0 L824.5,735.0 L823.7,740.0 L822.9,744.9 L822.1,749.9 L821.3,754.9 L820.5,759.8 L819.8,764.8 L819.0,769.7 L818.3,774.7 L817.6,779.6 L817.0,784.6 L816.3,789.5 L815.7,794.4 L815.1,799.3 L814.5,804.3 L813.9,809.2 L813.4,814.1 L812.9,819.0 L812.5,823.9 L812.0,828.8 L811.6,833.6 L811.3,838.5 M849.2,617.6 L849.0,622.7 L848.7,627.8 L848.4,633.0 L848.0,638.1 L847.6,643.2 L847.2,648.4 L846.7,653.5 L846.2,658.6 L845.7,663.7 L845.1,668.8 L844.6,673.9 L843.9,679.0 L843.3,684.1 L842.7,689.2 L842.0,694.3 L841.3,699.4 L840.6,704.5 L839.8,709.5 L839.1,714.6 L838.3,719.7 L837.5,724.7 L836.7,729.8 L835.9,734.8 L835.1,739.9 L834.3,744.9 L833.5,749.9 L832.7,755.0 L831.9,760.0 L831.0,765.0 L830.2,770.0 L829.4,775.0 L828.6,780.0 L827.8,785.0 L827.0,790.0 L826.2,795.0 L825.4,799.9 L824.7,804.9 L823.9,809.9 L823.2,814.8 L822.4,819.8 L821.7,824.7 L821.1,829.7 L820.4,834.6 L819.8,839.5 M851.9,621.2 L852.0,626.3 L852.1,631.5 L852.2,636.6 L852.2,641.8 L852.2,646.9 L852.1,652.1 L852.0,657.2 L851.8,662.4 L851.6,667.5 L851.4,672.6 L851.1,677.8 L850.8,682.9 L850.5,688.0 L850.1,693.2 L849.7,698.3 L849.3,703.4 L848.8,708.5 L848.3,713.7 L847.8,718.8 L847.2,723.9 L846.7,729.0 L846.0,734.1 L845.4,739.2 L844.8,744.3 L844.1,749.3 L843.4,754.4 L842.7,759.5 L842.0,764.6 L841.2,769.6 L840.5,774.7 L839.7,779.8 L839.0,784.8 L838.2,789.8 L837.4,794.9 L836.6,799.9 L835.8,804.9 L835.0,810.0 L834.2,815.0 L833.4,820.0 L832.6,825.0 L831.8,830.0 L831.0,835.0 L830.3,840.0 M854.1,671.1 L854.2,676.3 L854.3,681.4 L854.4,686.6 L854.4,691.7 L854.4,696.9 L854.4,702.0 L854.3,707.2 L854.2,712.3 L854.0,717.5 L853.8,722.6 L853.6,727.7 L853.3,732.9 L853.0,738.0 L852.6,743.1 L852.2,748.3 L851.8,753.4 L851.4,758.5 L850.9,763.6 L850.4,768.7 L849.9,773.8 L849.3,778.9 L848.8,784.0 L848.2,789.1 L847.5,794.2 L846.9,799.3 L846.2,804.4 L845.6,809.5 L844.9,814.5 L844.2,819.6 L843.4,824.7 L842.7,829.7 L841.9,834.8 L841.2,839.8 M856.4,726.2 L856.5,731.4 L856.6,736.5 L856.7,741.7 L856.7,746.8 L856.7,752.0 L856.6,757.1 L856.5,762.3 L856.4,767.4 L856.2,772.5 L856.0,777.7 L855.7,782.8 L855.4,787.9 L855.1,793.1 L854.8,798.2 L854.4,803.3 L854.0,808.4 L853.5,813.6 L853.0,818.7 L852.5,823.8 L852.0,828.9 L851.5,834.0 L850.9,839.1 M858.6,776.2 L858.7,781.3 L858.9,786.5 L858.9,791.6 L859.0,796.8 L859.0,801.9 L858.9,807.0 L858.8,812.2 L858.7,817.3 L858.6,822.5 L858.4,827.6 L858.1,832.8 L857.9,837.9 M860.8,826.1 L860.9,831.2 L861.1,836.4 M792.2,617.5 L792.1,622.4 L792.1,627.2 L792.1,632.1 L792.1,636.9 L792.2,641.8 L792.4,646.6 L792.6,651.5 L792.8,656.3 L793.0,661.2 M798.8,618.8 L798.3,623.7 L797.9,628.6 L797.5,633.5 L797.1,638.3 L796.8,643.2 L796.5,648.1 L796.2,653.0 L796.0,657.8 L795.9,662.7 L795.7,667.6 L795.6,672.4 L795.6,677.3 L795.6,682.1 L795.6,687.0 L795.7,691.8 L795.8,696.7 L796.0,701.5 L796.2,706.4 L796.5,711.2 L796.8,716.1 M808.8,619.7 L808.0,624.6 L807.3,629.6 L806.6,634.5 L805.9,639.4 L805.2,644.3 L804.6,649.2 L804.0,654.1 L803.4,659.1 L802.9,664.0 L802.4,668.8 L801.9,673.7 L801.4,678.6 L801.0,683.5 L800.7,688.4 L800.3,693.3 L800.0,698.1 L799.8,703.0 L799.6,707.9 L799.4,712.7 L799.3,717.6 L799.2,722.5 L799.1,727.3 L799.1,732.2 L799.1,737.0 L799.2,741.9 L799.3,746.7 L799.5,751.6 L799.7,756.4 L799.9,761.3 L800.2,766.1 M820.6,620.0 L819.7,625.0 L818.8,630.0 L817.9,635.0 L817.1,639.9 L816.2,644.9 L815.4,649.9 L814.6,654.9 L813.8,659.8 L813.0,664.8 L812.2,669.7 L811.5,674.6 L810.7,679.6 L810.0,684.5 L809.4,689.4 L808.7,694.4 L808.1,699.3 L807.5,704.2 L806.9,709.1 L806.4,714.0 L805.9,718.9 L805.4,723.8 L805.0,728.7 L804.6,733.6 L804.2,738.4 L803.9,743.3 L803.6,748.2 L803.3,753.1 L803.1,757.9 L802.9,762.8 L802.8,767.7 L802.7,772.5 L802.6,777.4 L802.6,782.2 L802.6,787.1 L802.7,792.0 L802.8,796.8 L802.9,801.7 L803.1,806.5 L803.3,811.4 L803.6,816.2 M832.4,619.7 L831.6,624.8 L830.7,629.8 L829.9,634.9 L829.0,639.9 L828.1,644.9 L827.3,650.0 L826.4,655.0 L825.5,660.0 L824.7,665.0 L823.8,670.0 L822.9,675.0 L822.1,680.0 L821.2,685.0 L820.4,690.0 L819.6,694.9 L818.7,699.9 L817.9,704.9 L817.2,709.8 L816.4,714.8 L815.6,719.7 L814.9,724.7 L814.2,729.6 L813.5,734.5 L812.8,739.5 L812.2,744.4 L811.6,749.3 L811.0,754.2 L810.4,759.1 L809.9,764.0 L809.4,768.9 L808.9,773.8 L808.5,778.7 L808.1,783.6 L807.7,788.5 L807.4,793.4 L807.1,798.2 L806.9,803.1 L806.6,808.0 L806.4,812.9 L806.3,817.7 L806.2,822.6 L806.1,827.4 L806.1,832.3 L806.1,837.2 M842.5,618.9 L841.9,624.0 L841.2,629.1 L840.6,634.2 L839.9,639.2 L839.2,644.3 L838.4,649.4 L837.7,654.5 L836.9,659.6 L836.2,664.6 L835.4,669.7 L834.6,674.7 L833.7,679.8 L832.9,684.8 L832.1,689.9 L831.2,694.9 L830.4,699.9 L829.6,705.0 L828.7,710.0 L827.9,715.0 L827.0,720.0 L826.2,725.0 L825.3,730.0 L824.5,735.0 L823.7,740.0 L822.9,744.9 L822.1,749.9 L821.3,754.9 L820.5,759.8 L819.8,764.8 L819.0,769.7 L818.3,774.7 L817.6,779.6 L817.0,784.6 L816.3,789.5 L815.7,794.4 L815.1,799.3 L814.5,804.3 L813.9,809.2 L813.4,814.1 L812.9,819.0 L812.5,823.9 L812.0,828.8 L811.6,833.6 L811.3,838.5 M849.2,617.6 L849.0,622.7 L848.7,627.8 L848.4,633.0 L848.0,638.1 L847.6,643.2 L847.2,648.4 L846.7,653.5 L846.2,658.6 L845.7,663.7 L845.1,668.8 L844.6,673.9 L843.9,679.0 L843.3,684.1 L842.7,689.2 L842.0,694.3 L841.3,699.4 L840.6,704.5 L839.8,709.5 L839.1,714.6 L838.3,719.7 L837.5,724.7 L836.7,729.8 L835.9,734.8 L835.1,739.9 L834.3,744.9 L833.5,749.9 L832.7,755.0 L831.9,760.0 L831.0,765.0 L830.2,770.0 L829.4,775.0 L828.6,780.0 L827.8,785.0 L827.0,790.0 L826.2,795.0 L825.4,799.9 L824.7,804.9 L823.9,809.9 L823.2,814.8 L822.4,819.8 L821.7,824.7 L821.1,829.7 L820.4,834.6 L819.8,839.5 M851.9,621.2 L852.0,626.3 L852.1,631.5 L852.2,636.6 L852.2,641.8 L852.2,646.9 L852.1,652.1 L852.0,657.2 L851.8,662.4 L851.6,667.5 L851.4,672.6 L851.1,677.8 L850.8,682.9 L850.5,688.0 L850.1,693.2 L849.7,698.3 L849.3,703.4 L848.8,708.5 L848.3,713.7 L847.8,718.8 L847.2,723.9 L846.7,729.0 L846.0,734.1 L845.4,739.2 L844.8,744.3 L844.1,749.3 L843.4,754.4 L842.7,759.5 L842.0,764.6 L841.2,769.6 L840.5,774.7 L839.7,779.8 L839.0,784.8 L838.2,789.8 L837.4,794.9 L836.6,799.9 L835.8,804.9 L835.0,810.0 L834.2,815.0 L833.4,820.0 L832.6,825.0 L831.8,830.0 L831.0,835.0 L830.3,840.0 M854.1,671.1 L854.2,676.3 L854.3,681.4 L854.4,686.6 L854.4,691.7 L854.4,696.9 L854.4,702.0 L854.3,707.2 L854.2,712.3 L854.0,717.5 L853.8,722.6 L853.6,727.7 L853.3,732.9 L853.0,738.0 L852.6,743.1 L852.2,748.3 L851.8,753.4 L851.4,758.5 L850.9,763.6 L850.4,768.7 L849.9,773.8 L849.3,778.9 L848.8,784.0 L848.2,789.1 L847.5,794.2 L846.9,799.3 L846.2,804.4 L845.6,809.5 L844.9,814.5 L844.2,819.6 L843.4,824.7 L842.7,829.7 L841.9,834.8 L841.2,839.8 M856.4,726.2 L856.5,731.4 L856.6,736.5 L856.7,741.7 L856.7,746.8 L856.7,752.0 L856.6,757.1 L856.5,762.3 L856.4,767.4 L856.2,772.5 L856.0,777.7 L855.7,782.8 L855.4,787.9 L855.1,793.1 L854.8,798.2 L854.4,803.3 L854.0,808.4 L853.5,813.6 L853.0,818.7 L852.5,823.8 L852.0,828.9 L851.5,834.0 L850.9,839.1 M858.6,776.2 L858.7,781.3 L858.9,786.5 L858.9,791.6 L859.0,796.8 L859.0,801.9 L858.9,807.0 L858.8,812.2 L858.7,817.3 L858.6,822.5 L858.4,827.6 L858.1,832.8 L857.9,837.9 M860.8,826.1 L860.9,831.2 L861.1,836.4 M792.2,617.5 L792.1,622.4 L792.1,627.2 L792.1,632.1 L792.1,636.9 L792.2,641.8 L792.4,646.6 L792.6,651.5 L792.8,656.3 L793.0,661.2 M798.8,618.8 L798.3,623.7 L797.9,628.6 L797.5,633.5 L797.1,638.3 L796.8,643.2 L796.5,648.1 L796.2,653.0 L796.0,657.8 L795.9,662.7 L795.7,667.6 L795.6,672.4 L795.6,677.3 L795.6,682.1 L795.6,687.0 L795.7,691.8 L795.8,696.7 L796.0,701.5 L796.2,706.4 L796.5,711.2 L796.8,716.1 M808.8,619.7 L808.0,624.6 L807.3,629.6 L806.6,634.5 L805.9,639.4 L805.2,644.3 L804.6,649.2 L804.0,654.1 L803.4,659.1 L802.9,664.0 L802.4,668.8 L801.9,673.7 L801.4,678.6 L801.0,683.5 L800.7,688.4 L800.3,693.3 L800.0,698.1 L799.8,703.0 L799.6,707.9 L799.4,712.7 L799.3,717.6 L799.2,722.5 L799.1,727.3 L799.1,732.2 L799.1,737.0 L799.2,741.9 L799.3,746.7 L799.5,751.6 L799.7,756.4 L799.9,761.3 L800.2,766.1 M820.6,620.0 L819.7,625.0 L818.8,630.0 L817.9,635.0 L817.1,639.9 L816.2,644.9 L815.4,649.9 L814.6,654.9 L813.8,659.8 L813.0,664.8 L812.2,669.7 L811.5,674.6 L810.7,679.6 L810.0,684.5 L809.4,689.4 L808.7,694.4 L808.1,699.3 L807.5,704.2 L806.9,709.1 L806.4,714.0 L805.9,718.9 L805.4,723.8 L805.0,728.7 L804.6,733.6 L804.2,738.4 L803.9,743.3 L803.6,748.2 L803.3,753.1 L803.1,757.9 L802.9,762.8 L802.8,767.7 L802.7,772.5 L802.6,777.4 L802.6,782.2 L802.6,787.1 L802.7,792.0 L802.8,796.8 L802.9,801.7 L803.1,806.5 L803.3,811.4 L803.6,816.2 M832.4,619.7 L831.6,624.8 L830.7,629.8 L829.9,634.9 L829.0,639.9 L828.1,644.9 L827.3,650.0 L826.4,655.0 L825.5,660.0 L824.7,665.0 L823.8,670.0 L822.9,675.0 L822.1,680.0 L821.2,685.0 L820.4,690.0 L819.6,694.9 L818.7,699.9 L817.9,704.9 L817.2,709.8 L816.4,714.8 L815.6,719.7 L814.9,724.7 L814.2,729.6 L813.5,734.5 L812.8,739.5 L812.2,744.4 L811.6,749.3 L811.0,754.2 L810.4,759.1 L809.9,764.0 L809.4,768.9 L808.9,773.8 L808.5,778.7 L808.1,783.6 L807.7,788.5 L807.4,793.4 L807.1,798.2 L806.9,803.1 L806.6,808.0 L806.4,812.9 L806.3,817.7 L806.2,822.6 L806.1,827.4 L806.1,832.3 L806.1,837.2" stroke="#f2f2f2" stroke-width="1.15"/></g>
<path d="M699.5,653 Q752,644 806.5,648 L819,823 Q765,843 708,834 Z" fill="url(#gKn1)"/>
<g clip-path="url(#cKn1)" fill="none" id="kn1"><path d="M752.5,626.0 L754.8,631.0 L757.1,636.0 L759.4,640.9 L761.7,645.9 L764.0,650.9 L766.2,655.8 L768.5,660.8 L770.7,665.7 L772.9,670.6 L775.1,675.5 L777.3,680.4 L779.4,685.3 L781.5,690.2 L783.6,695.1 L785.6,700.0 L787.6,704.9 L789.5,709.7 L791.4,714.6 L793.3,719.4 L795.1,724.3 L796.9,729.1 L798.6,733.9 L800.2,738.8 L801.8,743.6 L803.3,748.4 L804.8,753.2 L806.2,758.0 L807.5,762.8 L808.8,767.6 L810.0,772.4 L811.1,777.2 L812.2,782.0 L813.2,786.8 L814.1,791.6 L815.0,796.3 L815.7,801.1 L816.4,805.9 L817.0,810.7 L817.6,815.4 L818.0,820.2 M772.8,625.5 L774.9,630.4 L777.0,635.3 L779.1,640.2 L781.1,645.1 L783.1,649.9 L785.1,654.8 L787.0,659.7 L788.8,664.5 L790.7,669.4 L792.4,674.2 L794.2,679.0 L795.8,683.9 L797.4,688.7 L799.0,693.5 L800.5,698.3 L801.9,703.1 L803.3,707.9 L804.6,712.7 L805.8,717.5 L807.0,722.3 L808.1,727.1 L809.1,731.9 L810.1,736.7 L810.9,741.5 L811.7,746.3 L812.5,751.0 L813.1,755.8 L813.7,760.6 L814.2,765.4 L814.6,770.1 M789.8,624.1 L791.4,629.0 L793.1,633.8 L794.6,638.6 L796.2,643.4 L797.6,648.3 L799.0,653.1 L800.3,657.9 L801.6,662.7 L802.8,667.5 L803.9,672.2 L805.0,677.0 L806.0,681.8 L806.9,686.6 L807.8,691.4 L808.5,696.2 L809.2,700.9 L809.8,705.7 L810.4,710.5 L810.9,715.3 M800.9,622.2 L801.9,627.0 L802.9,631.7 L803.7,636.5 L804.6,641.3 L805.3,646.1 L806.0,650.9 L806.5,655.6 L807.1,660.4 L807.5,665.2 M707.9,830.2 L708.2,835.5 L708.6,840.7 L709.1,845.9 L709.7,851.1 L710.4,856.4 L711.1,861.6 M705.6,780.3 L706.0,785.5 L706.4,790.8 L707.0,796.0 L707.6,801.2 L708.3,806.4 L709.0,811.7 L709.9,816.9 L710.8,822.1 L711.8,827.3 L712.9,832.5 L714.0,837.7 L715.3,842.9 L716.6,848.1 L717.9,853.3 L719.3,858.5 L720.8,863.7 M703.0,725.2 L703.3,730.4 L703.7,735.6 L704.2,740.9 L704.8,746.1 L705.4,751.3 L706.2,756.5 L706.9,761.7 L707.8,767.0 L708.8,772.2 L709.8,777.4 L710.9,782.6 L712.1,787.8 L713.3,793.0 L714.6,798.2 L716.0,803.4 L717.4,808.6 L718.9,813.7 L720.5,818.9 L722.1,824.1 L723.8,829.2 L725.6,834.4 L727.4,839.6 L729.3,844.7 L731.2,849.8 L733.2,855.0 L735.2,860.1 L737.3,865.2 M700.7,675.3 L701.1,680.5 L701.5,685.7 L702.0,691.0 L702.6,696.2 L703.3,701.4 L704.0,706.6 L704.9,711.8 L705.8,717.0 L706.7,722.3 L707.8,727.5 L708.9,732.7 L710.1,737.9 L711.3,743.1 L712.6,748.3 L714.0,753.4 L715.5,758.6 L717.0,763.8 L718.6,769.0 L720.3,774.1 L722.0,779.3 L723.7,784.5 L725.5,789.6 L727.4,794.8 L729.3,799.9 L731.3,805.0 L733.3,810.1 L735.4,815.3 L737.5,820.4 L739.6,825.5 L741.8,830.5 L744.0,835.6 L746.3,840.7 L748.6,845.8 L750.9,850.8 L753.2,855.9 L755.5,860.9 L757.9,866.0 M698.1,620.1 L698.4,625.4 L698.8,630.6 L699.3,635.8 L699.8,641.0 L700.5,646.3 L701.2,651.5 L701.9,656.7 L702.8,661.9 L703.7,667.1 L704.7,672.3 L705.7,677.5 L706.9,682.8 L708.1,688.0 L709.4,693.1 L710.7,698.3 L712.1,703.5 L713.6,708.7 L715.1,713.9 L716.7,719.0 L718.4,724.2 L720.1,729.4 L721.9,734.5 L723.7,739.7 L725.6,744.8 L727.5,749.9 L729.5,755.1 L731.5,760.2 L733.5,765.3 L735.6,770.4 L737.8,775.5 L739.9,780.6 L742.2,785.7 L744.4,790.7 L746.7,795.8 L748.9,800.8 L751.3,805.9 L753.6,810.9 L755.9,816.0 L758.3,821.0 L760.7,826.0 L763.0,831.0 L765.4,836.0 L767.8,841.0 L770.2,846.0 L772.5,850.9 L774.9,855.9 L777.3,860.8 L779.6,865.8 M702.7,622.4 L703.7,627.6 L704.9,632.8 L706.1,638.0 L707.4,643.2 L708.8,648.4 L710.2,653.6 L711.7,658.8 L713.2,663.9 L714.8,669.1 L716.5,674.3 L718.2,679.4 L720.0,684.6 L721.8,689.7 L723.7,694.9 L725.6,700.0 L727.6,705.1 L729.6,710.2 L731.7,715.3 L733.8,720.4 L735.9,725.5 L738.1,730.6 L740.3,735.7 L742.5,740.8 L744.7,745.8 L747.0,750.9 L749.3,755.9 L751.6,760.9 L754.0,766.0 L756.3,771.0 L758.6,776.0 L761.0,781.0 L763.4,786.0 L765.7,791.0 L768.1,796.0 L770.4,800.9 L772.8,805.9 L775.1,810.8 L777.4,815.8 L779.7,820.7 L782.0,825.6 L784.2,830.5 L786.5,835.5 L788.6,840.4 L790.8,845.2 L792.9,850.1 L795.0,855.0 L797.1,859.9 L799.1,864.7 M714.6,624.3 L716.3,629.5 L718.1,634.6 L719.9,639.8 L721.8,644.9 L723.7,650.0 L725.7,655.2 L727.7,660.3 L729.8,665.4 L731.9,670.5 L734.0,675.6 L736.2,680.6 L738.4,685.7 L740.6,690.8 L742.8,695.8 L745.1,700.9 L747.4,705.9 L749.7,711.0 L752.0,716.0 L754.3,721.0 L756.6,726.0 L759.0,731.0 L761.3,736.0 L763.6,741.0 L766.0,745.9 L768.3,750.9 L770.6,755.9 L772.9,760.8 L775.2,765.7 L777.5,770.7 L779.7,775.6 L781.9,780.5 L784.1,785.4 L786.3,790.3 L788.4,795.2 L790.5,800.1 L792.6,805.0 L794.6,809.8 L796.6,814.7 L798.5,819.5 L800.4,824.4 L802.2,829.2 L804.0,834.1 L805.7,838.9 L807.3,843.7 L809.0,848.6 L810.5,853.4 L812.0,858.2 L813.4,863.0 M732.1,625.6 L734.2,630.7 L736.4,635.7 L738.6,640.8 L740.9,645.9 L743.1,650.9 L745.4,655.9 L747.7,661.0 L750.0,666.0 L752.3,671.0 L754.6,676.0 L756.9,681.0 L759.2,686.0 L761.5,691.0 L763.8,695.9 L766.1,700.9 L768.4,705.8 L770.7,710.8 L773.0,715.7 L775.2,720.6 L777.4,725.6 L779.6,730.5 L781.8,735.4 L783.9,740.3 L786.0,745.2 L788.1,750.0 L790.1,754.9 L792.1,759.8 L794.0,764.6 L795.9,769.5 L797.7,774.3 L799.5,779.2 L801.3,784.0 L803.0,788.8 L804.6,793.7 L806.1,798.5 L807.7,803.3 L809.1,808.1 L810.5,812.9 L811.8,817.7 L813.0,822.5 L814.2,827.3 L815.3,832.1 L816.3,836.9 L817.3,841.7 L818.1,846.4 L818.9,851.2 L819.7,856.0 L820.3,860.8 M752.5,626.0 L754.8,631.0 L757.1,636.0 L759.4,640.9 L761.7,645.9 L764.0,650.9 L766.2,655.8 L768.5,660.8 L770.7,665.7 L772.9,670.6 L775.1,675.5 L777.3,680.4 L779.4,685.3 L781.5,690.2 L783.6,695.1 L785.6,700.0 L787.6,704.9 L789.5,709.7 L791.4,714.6 L793.3,719.4 L795.1,724.3 L796.9,729.1 L798.6,733.9 L800.2,738.8 L801.8,743.6 L803.3,748.4 L804.8,753.2 L806.2,758.0 L807.5,762.8 L808.8,767.6 L810.0,772.4 L811.1,777.2 L812.2,782.0 L813.2,786.8 L814.1,791.6 L815.0,796.3 L815.7,801.1 L816.4,805.9 L817.0,810.7 L817.6,815.4 L818.0,820.2 M772.8,625.5 L774.9,630.4 L777.0,635.3 L779.1,640.2 L781.1,645.1 L783.1,649.9 L785.1,654.8 L787.0,659.7 L788.8,664.5 L790.7,669.4 L792.4,674.2 L794.2,679.0 L795.8,683.9 L797.4,688.7 L799.0,693.5 L800.5,698.3 L801.9,703.1 L803.3,707.9 L804.6,712.7 L805.8,717.5 L807.0,722.3 L808.1,727.1 L809.1,731.9 L810.1,736.7 L810.9,741.5 L811.7,746.3 L812.5,751.0 L813.1,755.8 L813.7,760.6 L814.2,765.4 L814.6,770.1 M789.8,624.1 L791.4,629.0 L793.1,633.8 L794.6,638.6 L796.2,643.4 L797.6,648.3 L799.0,653.1 L800.3,657.9 L801.6,662.7 L802.8,667.5 L803.9,672.2 L805.0,677.0 L806.0,681.8 L806.9,686.6 L807.8,691.4 L808.5,696.2 L809.2,700.9 L809.8,705.7 L810.4,710.5 L810.9,715.3 M800.9,622.2 L801.9,627.0 L802.9,631.7 L803.7,636.5 L804.6,641.3 L805.3,646.1 L806.0,650.9 L806.5,655.6 L807.1,660.4 L807.5,665.2 M707.9,830.2 L708.2,835.5 L708.6,840.7 L709.1,845.9 L709.7,851.1 L710.4,856.4 L711.1,861.6 M705.6,780.3 L706.0,785.5 L706.4,790.8 L707.0,796.0 L707.6,801.2 L708.3,806.4 L709.0,811.7 L709.9,816.9 L710.8,822.1 L711.8,827.3 L712.9,832.5 L714.0,837.7 L715.3,842.9 L716.6,848.1 L717.9,853.3 L719.3,858.5 L720.8,863.7 M703.0,725.2 L703.3,730.4 L703.7,735.6 L704.2,740.9 L704.8,746.1 L705.4,751.3 L706.2,756.5 L706.9,761.7 L707.8,767.0 L708.8,772.2 L709.8,777.4 L710.9,782.6 L712.1,787.8 L713.3,793.0 L714.6,798.2 L716.0,803.4 L717.4,808.6 L718.9,813.7 L720.5,818.9 L722.1,824.1 L723.8,829.2 L725.6,834.4 L727.4,839.6 L729.3,844.7 L731.2,849.8 L733.2,855.0 L735.2,860.1 L737.3,865.2 M700.7,675.3 L701.1,680.5 L701.5,685.7 L702.0,691.0 L702.6,696.2 L703.3,701.4 L704.0,706.6 L704.9,711.8 L705.8,717.0 L706.7,722.3 L707.8,727.5 L708.9,732.7 L710.1,737.9 L711.3,743.1 L712.6,748.3 L714.0,753.4 L715.5,758.6 L717.0,763.8 L718.6,769.0 L720.3,774.1 L722.0,779.3 L723.7,784.5 L725.5,789.6 L727.4,794.8 L729.3,799.9 L731.3,805.0 L733.3,810.1 L735.4,815.3 L737.5,820.4 L739.6,825.5 L741.8,830.5 L744.0,835.6 L746.3,840.7 L748.6,845.8 L750.9,850.8 L753.2,855.9 L755.5,860.9 L757.9,866.0 M698.1,620.1 L698.4,625.4 L698.8,630.6 L699.3,635.8 L699.8,641.0 L700.5,646.3 L701.2,651.5 L701.9,656.7 L702.8,661.9 L703.7,667.1 L704.7,672.3 L705.7,677.5 L706.9,682.8 L708.1,688.0 L709.4,693.1 L710.7,698.3 L712.1,703.5 L713.6,708.7 L715.1,713.9 L716.7,719.0 L718.4,724.2 L720.1,729.4 L721.9,734.5 L723.7,739.7 L725.6,744.8 L727.5,749.9 L729.5,755.1 L731.5,760.2 L733.5,765.3 L735.6,770.4 L737.8,775.5 L739.9,780.6 L742.2,785.7 L744.4,790.7 L746.7,795.8 L748.9,800.8 L751.3,805.9 L753.6,810.9 L755.9,816.0 L758.3,821.0 L760.7,826.0 L763.0,831.0 L765.4,836.0 L767.8,841.0 L770.2,846.0 L772.5,850.9 L774.9,855.9 L777.3,860.8 L779.6,865.8 M702.7,622.4 L703.7,627.6 L704.9,632.8 L706.1,638.0 L707.4,643.2 L708.8,648.4 L710.2,653.6 L711.7,658.8 L713.2,663.9 L714.8,669.1 L716.5,674.3 L718.2,679.4 L720.0,684.6 L721.8,689.7 L723.7,694.9 L725.6,700.0 L727.6,705.1 L729.6,710.2 L731.7,715.3 L733.8,720.4 L735.9,725.5 L738.1,730.6 L740.3,735.7 L742.5,740.8 L744.7,745.8 L747.0,750.9 L749.3,755.9 L751.6,760.9 L754.0,766.0 L756.3,771.0 L758.6,776.0 L761.0,781.0 L763.4,786.0 L765.7,791.0 L768.1,796.0 L770.4,800.9 L772.8,805.9 L775.1,810.8 L777.4,815.8 L779.7,820.7 L782.0,825.6 L784.2,830.5 L786.5,835.5 L788.6,840.4 L790.8,845.2 L792.9,850.1 L795.0,855.0 L797.1,859.9 L799.1,864.7 M714.6,624.3 L716.3,629.5 L718.1,634.6 L719.9,639.8 L721.8,644.9 L723.7,650.0 L725.7,655.2 L727.7,660.3 L729.8,665.4 L731.9,670.5 L734.0,675.6 L736.2,680.6 L738.4,685.7 L740.6,690.8 L742.8,695.8 L745.1,700.9 L747.4,705.9 L749.7,711.0 L752.0,716.0 L754.3,721.0 L756.6,726.0 L759.0,731.0 L761.3,736.0 L763.6,741.0 L766.0,745.9 L768.3,750.9 L770.6,755.9 L772.9,760.8 L775.2,765.7 L777.5,770.7 L779.7,775.6 L781.9,780.5 L784.1,785.4 L786.3,790.3 L788.4,795.2 L790.5,800.1 L792.6,805.0 L794.6,809.8 L796.6,814.7 L798.5,819.5 L800.4,824.4 L802.2,829.2 L804.0,834.1 L805.7,838.9 L807.3,843.7 L809.0,848.6 L810.5,853.4 L812.0,858.2 L813.4,863.0 M732.1,625.6 L734.2,630.7 L736.4,635.7 L738.6,640.8 L740.9,645.9 L743.1,650.9 L745.4,655.9 L747.7,661.0 L750.0,666.0 L752.3,671.0 L754.6,676.0 L756.9,681.0 L759.2,686.0 L761.5,691.0 L763.8,695.9 L766.1,700.9 L768.4,705.8 L770.7,710.8 L773.0,715.7 L775.2,720.6 L777.4,725.6 L779.6,730.5 L781.8,735.4 L783.9,740.3 L786.0,745.2 L788.1,750.0 L790.1,754.9 L792.1,759.8 L794.0,764.6 L795.9,769.5 L797.7,774.3 L799.5,779.2 L801.3,784.0 L803.0,788.8 L804.6,793.7 L806.1,798.5 L807.7,803.3 L809.1,808.1 L810.5,812.9 L811.8,817.7 L813.0,822.5 L814.2,827.3 L815.3,832.1 L816.3,836.9 L817.3,841.7 L818.1,846.4 L818.9,851.2 L819.7,856.0 L820.3,860.8 M752.5,626.0 L754.8,631.0 L757.1,636.0 L759.4,640.9 L761.7,645.9 L764.0,650.9 L766.2,655.8 L768.5,660.8 L770.7,665.7 L772.9,670.6 L775.1,675.5 L777.3,680.4 L779.4,685.3 L781.5,690.2 L783.6,695.1 L785.6,700.0 L787.6,704.9 L789.5,709.7 L791.4,714.6 L793.3,719.4 L795.1,724.3 L796.9,729.1 L798.6,733.9 L800.2,738.8 L801.8,743.6 L803.3,748.4 L804.8,753.2 L806.2,758.0 L807.5,762.8 L808.8,767.6 L810.0,772.4 L811.1,777.2 L812.2,782.0 L813.2,786.8 L814.1,791.6 L815.0,796.3 L815.7,801.1 L816.4,805.9 L817.0,810.7 L817.6,815.4 L818.0,820.2 M772.8,625.5 L774.9,630.4 L777.0,635.3 L779.1,640.2 L781.1,645.1 L783.1,649.9 L785.1,654.8 L787.0,659.7 L788.8,664.5 L790.7,669.4 L792.4,674.2 L794.2,679.0 L795.8,683.9 L797.4,688.7 L799.0,693.5 L800.5,698.3 L801.9,703.1 L803.3,707.9 L804.6,712.7 L805.8,717.5 L807.0,722.3 L808.1,727.1 L809.1,731.9 L810.1,736.7 L810.9,741.5 L811.7,746.3 L812.5,751.0 L813.1,755.8 L813.7,760.6 L814.2,765.4 L814.6,770.1 M789.8,624.1 L791.4,629.0 L793.1,633.8 L794.6,638.6 L796.2,643.4 L797.6,648.3 L799.0,653.1 L800.3,657.9 L801.6,662.7 L802.8,667.5 L803.9,672.2 L805.0,677.0 L806.0,681.8 L806.9,686.6 L807.8,691.4 L808.5,696.2 L809.2,700.9 L809.8,705.7 L810.4,710.5 L810.9,715.3 M800.9,622.2 L801.9,627.0 L802.9,631.7 L803.7,636.5 L804.6,641.3 L805.3,646.1 L806.0,650.9 L806.5,655.6 L807.1,660.4 L807.5,665.2 M707.9,830.2 L708.2,835.5 L708.6,840.7 L709.1,845.9 L709.7,851.1 L710.4,856.4 L711.1,861.6 M705.6,780.3 L706.0,785.5 L706.4,790.8 L707.0,796.0 L707.6,801.2 L708.3,806.4 L709.0,811.7 L709.9,816.9 L710.8,822.1 L711.8,827.3 L712.9,832.5 L714.0,837.7 L715.3,842.9 L716.6,848.1 L717.9,853.3 L719.3,858.5 L720.8,863.7 M703.0,725.2 L703.3,730.4 L703.7,735.6 L704.2,740.9 L704.8,746.1 L705.4,751.3 L706.2,756.5 L706.9,761.7 L707.8,767.0 L708.8,772.2 L709.8,777.4 L710.9,782.6 L712.1,787.8 L713.3,793.0 L714.6,798.2 L716.0,803.4 L717.4,808.6 L718.9,813.7 L720.5,818.9 L722.1,824.1 L723.8,829.2 L725.6,834.4 L727.4,839.6 L729.3,844.7 L731.2,849.8 L733.2,855.0 L735.2,860.1 L737.3,865.2 M700.7,675.3 L701.1,680.5 L701.5,685.7 L702.0,691.0 L702.6,696.2 L703.3,701.4 L704.0,706.6 L704.9,711.8 L705.8,717.0 L706.7,722.3 L707.8,727.5 L708.9,732.7 L710.1,737.9 L711.3,743.1 L712.6,748.3 L714.0,753.4 L715.5,758.6 L717.0,763.8 L718.6,769.0 L720.3,774.1 L722.0,779.3 L723.7,784.5 L725.5,789.6 L727.4,794.8 L729.3,799.9 L731.3,805.0 L733.3,810.1 L735.4,815.3 L737.5,820.4 L739.6,825.5 L741.8,830.5 L744.0,835.6 L746.3,840.7 L748.6,845.8 L750.9,850.8 L753.2,855.9 L755.5,860.9 L757.9,866.0 M698.1,620.1 L698.4,625.4 L698.8,630.6 L699.3,635.8 L699.8,641.0 L700.5,646.3 L701.2,651.5 L701.9,656.7 L702.8,661.9 L703.7,667.1 L704.7,672.3 L705.7,677.5 L706.9,682.8 L708.1,688.0 L709.4,693.1 L710.7,698.3 L712.1,703.5 L713.6,708.7 L715.1,713.9 L716.7,719.0 L718.4,724.2 L720.1,729.4 L721.9,734.5 L723.7,739.7 L725.6,744.8 L727.5,749.9 L729.5,755.1 L731.5,760.2 L733.5,765.3 L735.6,770.4 L737.8,775.5 L739.9,780.6 L742.2,785.7 L744.4,790.7 L746.7,795.8 L748.9,800.8 L751.3,805.9 L753.6,810.9 L755.9,816.0 L758.3,821.0 L760.7,826.0 L763.0,831.0 L765.4,836.0 L767.8,841.0 L770.2,846.0 L772.5,850.9 L774.9,855.9 L777.3,860.8 L779.6,865.8 M702.7,622.4 L703.7,627.6 L704.9,632.8 L706.1,638.0 L707.4,643.2 L708.8,648.4 L710.2,653.6 L711.7,658.8 L713.2,663.9 L714.8,669.1 L716.5,674.3 L718.2,679.4 L720.0,684.6 L721.8,689.7 L723.7,694.9 L725.6,700.0 L727.6,705.1 L729.6,710.2 L731.7,715.3 L733.8,720.4 L735.9,725.5 L738.1,730.6 L740.3,735.7 L742.5,740.8 L744.7,745.8 L747.0,750.9 L749.3,755.9 L751.6,760.9 L754.0,766.0 L756.3,771.0 L758.6,776.0 L761.0,781.0 L763.4,786.0 L765.7,791.0 L768.1,796.0 L770.4,800.9 L772.8,805.9 L775.1,810.8 L777.4,815.8 L779.7,820.7 L782.0,825.6 L784.2,830.5 L786.5,835.5 L788.6,840.4 L790.8,845.2 L792.9,850.1 L795.0,855.0 L797.1,859.9 L799.1,864.7 M714.6,624.3 L716.3,629.5 L718.1,634.6 L719.9,639.8 L721.8,644.9 L723.7,650.0 L725.7,655.2 L727.7,660.3 L729.8,665.4 L731.9,670.5 L734.0,675.6 L736.2,680.6 L738.4,685.7 L740.6,690.8 L742.8,695.8 L745.1,700.9 L747.4,705.9 L749.7,711.0 L752.0,716.0 L754.3,721.0 L756.6,726.0 L759.0,731.0 L761.3,736.0 L763.6,741.0 L766.0,745.9 L768.3,750.9 L770.6,755.9 L772.9,760.8 L775.2,765.7 L777.5,770.7 L779.7,775.6 L781.9,780.5 L784.1,785.4 L786.3,790.3 L788.4,795.2 L790.5,800.1 L792.6,805.0 L794.6,809.8 L796.6,814.7 L798.5,819.5 L800.4,824.4 L802.2,829.2 L804.0,834.1 L805.7,838.9 L807.3,843.7 L809.0,848.6 L810.5,853.4 L812.0,858.2 L813.4,863.0 M732.1,625.6 L734.2,630.7 L736.4,635.7 L738.6,640.8 L740.9,645.9 L743.1,650.9 L745.4,655.9 L747.7,661.0 L750.0,666.0 L752.3,671.0 L754.6,676.0 L756.9,681.0 L759.2,686.0 L761.5,691.0 L763.8,695.9 L766.1,700.9 L768.4,705.8 L770.7,710.8 L773.0,715.7 L775.2,720.6 L777.4,725.6 L779.6,730.5 L781.8,735.4 L783.9,740.3 L786.0,745.2 L788.1,750.0 L790.1,754.9 L792.1,759.8 L794.0,764.6 L795.9,769.5 L797.7,774.3 L799.5,779.2 L801.3,784.0 L803.0,788.8 L804.6,793.7 L806.1,798.5 L807.7,803.3 L809.1,808.1 L810.5,812.9 L811.8,817.7 L813.0,822.5 L814.2,827.3 L815.3,832.1 L816.3,836.9 L817.3,841.7 L818.1,846.4 L818.9,851.2 L819.7,856.0 L820.3,860.8 M775.7,625.3 L774.2,630.4 L772.7,635.5 L771.1,640.6 L769.5,645.7 L767.9,650.8 L766.2,655.8 L764.6,660.9 L762.9,665.9 L761.2,670.9 L759.4,676.0 L757.7,681.0 L756.0,686.0 L754.2,691.0 L752.5,696.0 L750.7,701.0 L749.0,706.0 L747.2,710.9 L745.5,715.9 L743.8,720.8 L742.1,725.8 L740.4,730.7 L738.7,735.6 L737.1,740.5 L735.4,745.5 L733.8,750.4 L732.3,755.3 L730.8,760.1 L729.3,765.0 L727.8,769.9 L726.4,774.8 L725.0,779.6 L723.7,784.5 L722.5,789.3 L721.2,794.1 L720.1,799.0 L719.0,803.8 L717.9,808.6 L716.9,813.4 L716.0,818.3 L715.1,823.1 L714.3,827.9 L713.6,832.7 L713.0,837.5 L712.4,842.3 L711.8,847.0 L711.4,851.8 L711.0,856.6 L710.7,861.4 M791.9,623.9 L790.9,629.0 L789.8,634.2 L788.7,639.4 L787.6,644.5 L786.3,649.7 L785.1,654.8 L783.7,659.9 L782.4,665.1 L781.0,670.2 L779.5,675.3 L778.0,680.4 L776.5,685.5 L774.9,690.6 L773.3,695.7 L771.7,700.7 L770.0,705.8 L768.3,710.8 L766.6,715.9 L764.9,720.9 L763.2,726.0 L761.4,731.0 L759.7,736.0 L757.9,741.0 L756.1,746.0 L754.3,751.0 L752.6,756.0 L750.8,760.9 L749.1,765.9 L747.3,770.8 L745.6,775.8 L743.9,780.7 L742.2,785.7 L740.5,790.6 L738.8,795.5 L737.2,800.4 L735.6,805.3 L734.0,810.2 L732.5,815.1 L731.0,819.9 L729.6,824.8 L728.2,829.7 L726.8,834.5 L725.5,839.4 L724.3,844.2 L723.1,849.0 L721.9,853.9 L720.9,858.7 L719.8,863.5 M801.9,621.8 L801.6,627.0 L801.3,632.2 L800.8,637.5 L800.3,642.7 L799.7,647.9 L799.0,653.1 L798.3,658.3 L797.5,663.4 L796.6,668.6 L795.7,673.8 L794.7,679.0 L793.7,684.1 L792.5,689.3 L791.4,694.5 L790.2,699.6 L788.9,704.7 L787.6,709.9 L786.2,715.0 L784.8,720.1 L783.3,725.2 L781.8,730.4 L780.3,735.5 L778.7,740.5 L777.1,745.6 L775.5,750.7 L773.8,755.8 L772.1,760.8 L770.4,765.9 L768.7,770.9 L766.9,776.0 L765.1,781.0 L763.4,786.0 L761.6,791.0 L759.8,796.0 L758.0,801.0 L756.2,806.0 L754.4,810.9 L752.6,815.9 L750.9,820.9 L749.1,825.8 L747.3,830.8 L745.6,835.7 L743.9,840.6 L742.2,845.5 L740.6,850.4 L739.0,855.3 L737.4,860.2 L735.8,865.1 M805.5,635.2 L805.7,640.4 L805.9,645.6 L806.0,650.9 L806.0,656.1 L805.9,661.3 L805.8,666.5 L805.6,671.7 L805.3,677.0 L804.9,682.2 L804.5,687.4 L804.0,692.6 L803.4,697.8 L802.7,703.0 L802.0,708.2 L801.2,713.4 L800.4,718.6 L799.5,723.7 L798.5,728.9 L797.5,734.1 L796.4,739.2 L795.2,744.4 L794.0,749.5 L792.7,754.7 L791.4,759.8 L790.0,765.0 L788.6,770.1 L787.2,775.2 L785.7,780.3 L784.1,785.4 L782.5,790.5 L780.9,795.6 L779.3,800.7 L777.6,805.7 L775.9,810.8 L774.2,815.9 L772.4,820.9 L770.7,825.9 L768.9,831.0 L767.1,836.0 L765.3,841.0 L763.5,846.0 L761.7,851.0 L759.8,856.0 L758.0,861.0 L756.2,865.9 M809.1,690.3 L809.3,695.5 L809.5,700.8 L809.5,706.0 L809.5,711.2 L809.4,716.4 L809.2,721.7 L808.9,726.9 L808.6,732.1 L808.1,737.3 L807.7,742.5 L807.1,747.7 L806.5,752.9 L805.8,758.1 L805.0,763.3 L804.2,768.5 L803.3,773.7 L802.3,778.8 L801.3,784.0 L800.2,789.2 L799.0,794.3 L797.8,799.5 L796.6,804.6 L795.3,809.8 L793.9,814.9 L792.5,820.0 L791.0,825.2 L789.5,830.3 L788.0,835.4 L786.4,840.5 L784.8,845.6 L783.1,850.6 L781.4,855.7 L779.7,860.8 L778.0,865.8 M812.6,740.2 L812.8,745.4 L812.9,750.7 L813.0,755.9 L813.0,761.1 L812.9,766.3 L812.8,771.6 L812.5,776.8 L812.2,782.0 L811.8,787.2 L811.4,792.4 L810.8,797.6 L810.2,802.8 L809.5,808.0 L808.8,813.2 L807.9,818.4 L807.1,823.6 L806.1,828.8 L805.1,833.9 L804.0,839.1 L802.9,844.3 L801.7,849.4 L800.4,854.6 L799.1,859.7 L797.7,864.9 M816.0,790.1 L816.3,795.4 L816.4,800.6 L816.5,805.8 L816.5,811.0 L816.5,816.3 L816.3,821.5 L816.1,826.7 L815.8,831.9 L815.5,837.1 L815.0,842.3 L814.5,847.5 L813.9,852.7 L813.3,857.9 L812.5,863.1 M819.7,845.3 L819.9,850.5 L820.0,855.7 L820.1,860.9 M698.3,620.5 L698.4,625.3 M704.0,622.8 L703.4,627.5 L702.8,632.3 L702.3,637.1 L701.8,641.9 L701.5,646.7 L701.2,651.5 L700.9,656.3 L700.8,661.0 L700.7,665.8 L700.7,670.6 L700.8,675.4 L700.9,680.1 M717.0,624.6 L715.7,629.4 L714.5,634.3 L713.3,639.1 L712.2,643.9 L711.2,648.8 L710.2,653.6 L709.2,658.4 L708.4,663.2 L707.5,668.0 L706.8,672.8 L706.1,677.6 L705.5,682.4 L704.9,687.2 L704.4,692.0 L704.0,696.8 L703.7,701.6 L703.4,706.4 L703.2,711.1 L703.1,715.9 L703.1,720.7 L703.1,725.5 L703.2,730.2 M735.1,625.7 L733.5,630.6 L731.9,635.6 L730.3,640.5 L728.7,645.4 L727.2,650.3 L725.7,655.2 L724.2,660.0 L722.8,664.9 L721.4,669.8 L720.1,674.6 L718.8,679.5 L717.6,684.3 L716.4,689.2 L715.2,694.0 L714.1,698.8 L713.1,703.7 L712.1,708.5 L711.2,713.3 L710.3,718.1 L709.6,722.9 L708.8,727.7 L708.2,732.5 L707.6,737.3 L707.1,742.1 L706.6,746.9 L706.2,751.7 L705.9,756.4 L705.7,761.2 L705.6,766.0 L705.5,770.8 L705.5,775.5 L705.6,780.3 M755.7,626.0 L754.0,631.0 L752.3,636.0 L750.6,641.0 L748.8,646.0 L747.1,651.0 L745.4,655.9 L743.7,660.9 L742.0,665.9 L740.3,670.8 L738.6,675.7 L736.9,680.7 L735.3,685.6 L733.7,690.5 L732.1,695.4 L730.5,700.3 L729.0,705.2 L727.5,710.1 L726.0,715.0 L724.6,719.8 L723.2,724.7 L721.9,729.6 L720.6,734.4 L719.4,739.2 L718.2,744.1 L717.1,748.9 L716.0,753.7 L715.0,758.6 L714.1,763.4 L713.2,768.2 L712.3,773.0 L711.6,777.8 L710.9,782.6 L710.3,787.4 L709.7,792.2 L709.2,797.0 L708.8,801.7 L708.5,806.5 L708.2,811.3 L708.0,816.1 L707.9,820.9 L707.9,825.6 L707.9,830.4 L708.1,835.2 M775.7,625.3 L774.2,630.4 L772.7,635.5 L771.1,640.6 L769.5,645.7 L767.9,650.8 L766.2,655.8 L764.6,660.9 L762.9,665.9 L761.2,670.9 L759.4,676.0 L757.7,681.0 L756.0,686.0 L754.2,691.0 L752.5,696.0 L750.7,701.0 L749.0,706.0 L747.2,710.9 L745.5,715.9 L743.8,720.8 L742.1,725.8 L740.4,730.7 L738.7,735.6 L737.1,740.5 L735.4,745.5 L733.8,750.4 L732.3,755.3 L730.8,760.1 L729.3,765.0 L727.8,769.9 L726.4,774.8 L725.0,779.6 L723.7,784.5 L722.5,789.3 L721.2,794.1 L720.1,799.0 L719.0,803.8 L717.9,808.6 L716.9,813.4 L716.0,818.3 L715.1,823.1 L714.3,827.9 L713.6,832.7 L713.0,837.5 L712.4,842.3 L711.8,847.0 L711.4,851.8 L711.0,856.6 L710.7,861.4 M791.9,623.9 L790.9,629.0 L789.8,634.2 L788.7,639.4 L787.6,644.5 L786.3,649.7 L785.1,654.8 L783.7,659.9 L782.4,665.1 L781.0,670.2 L779.5,675.3 L778.0,680.4 L776.5,685.5 L774.9,690.6 L773.3,695.7 L771.7,700.7 L770.0,705.8 L768.3,710.8 L766.6,715.9 L764.9,720.9 L763.2,726.0 L761.4,731.0 L759.7,736.0 L757.9,741.0 L756.1,746.0 L754.3,751.0 L752.6,756.0 L750.8,760.9 L749.1,765.9 L747.3,770.8 L745.6,775.8 L743.9,780.7 L742.2,785.7 L740.5,790.6 L738.8,795.5 L737.2,800.4 L735.6,805.3 L734.0,810.2 L732.5,815.1 L731.0,819.9 L729.6,824.8 L728.2,829.7 L726.8,834.5 L725.5,839.4 L724.3,844.2 L723.1,849.0 L721.9,853.9 L720.9,858.7 L719.8,863.5 M801.9,621.8 L801.6,627.0 L801.3,632.2 L800.8,637.5 L800.3,642.7 L799.7,647.9 L799.0,653.1 L798.3,658.3 L797.5,663.4 L796.6,668.6 L795.7,673.8 L794.7,679.0 L793.7,684.1 L792.5,689.3 L791.4,694.5 L790.2,699.6 L788.9,704.7 L787.6,709.9 L786.2,715.0 L784.8,720.1 L783.3,725.2 L781.8,730.4 L780.3,735.5 L778.7,740.5 L777.1,745.6 L775.5,750.7 L773.8,755.8 L772.1,760.8 L770.4,765.9 L768.7,770.9 L766.9,776.0 L765.1,781.0 L763.4,786.0 L761.6,791.0 L759.8,796.0 L758.0,801.0 L756.2,806.0 L754.4,810.9 L752.6,815.9 L750.9,820.9 L749.1,825.8 L747.3,830.8 L745.6,835.7 L743.9,840.6 L742.2,845.5 L740.6,850.4 L739.0,855.3 L737.4,860.2 L735.8,865.1 M805.5,635.2 L805.7,640.4 L805.9,645.6 L806.0,650.9 L806.0,656.1 L805.9,661.3 L805.8,666.5 L805.6,671.7 L805.3,677.0 L804.9,682.2 L804.5,687.4 L804.0,692.6 L803.4,697.8 L802.7,703.0 L802.0,708.2 L801.2,713.4 L800.4,718.6 L799.5,723.7 L798.5,728.9 L797.5,734.1 L796.4,739.2 L795.2,744.4 L794.0,749.5 L792.7,754.7 L791.4,759.8 L790.0,765.0 L788.6,770.1 L787.2,775.2 L785.7,780.3 L784.1,785.4 L782.5,790.5 L780.9,795.6 L779.3,800.7 L777.6,805.7 L775.9,810.8 L774.2,815.9 L772.4,820.9 L770.7,825.9 L768.9,831.0 L767.1,836.0 L765.3,841.0 L763.5,846.0 L761.7,851.0 L759.8,856.0 L758.0,861.0 L756.2,865.9 M809.1,690.3 L809.3,695.5 L809.5,700.8 L809.5,706.0 L809.5,711.2 L809.4,716.4 L809.2,721.7 L808.9,726.9 L808.6,732.1 L808.1,737.3 L807.7,742.5 L807.1,747.7 L806.5,752.9 L805.8,758.1 L805.0,763.3 L804.2,768.5 L803.3,773.7 L802.3,778.8 L801.3,784.0 L800.2,789.2 L799.0,794.3 L797.8,799.5 L796.6,804.6 L795.3,809.8 L793.9,814.9 L792.5,820.0 L791.0,825.2 L789.5,830.3 L788.0,835.4 L786.4,840.5 L784.8,845.6 L783.1,850.6 L781.4,855.7 L779.7,860.8 L778.0,865.8 M812.6,740.2 L812.8,745.4 L812.9,750.7 L813.0,755.9 L813.0,761.1 L812.9,766.3 L812.8,771.6 L812.5,776.8 L812.2,782.0 L811.8,787.2 L811.4,792.4 L810.8,797.6 L810.2,802.8 L809.5,808.0 L808.8,813.2 L807.9,818.4 L807.1,823.6 L806.1,828.8 L805.1,833.9 L804.0,839.1 L802.9,844.3 L801.7,849.4 L800.4,854.6 L799.1,859.7 L797.7,864.9 M816.0,790.1 L816.3,795.4 L816.4,800.6 L816.5,805.8 L816.5,811.0 L816.5,816.3 L816.3,821.5 L816.1,826.7 L815.8,831.9 L815.5,837.1 L815.0,842.3 L814.5,847.5 L813.9,852.7 L813.3,857.9 L812.5,863.1 M819.7,845.3 L819.9,850.5 L820.0,855.7 L820.1,860.9 M698.3,620.5 L698.4,625.3 M704.0,622.8 L703.4,627.5 L702.8,632.3 L702.3,637.1 L701.8,641.9 L701.5,646.7 L701.2,651.5 L700.9,656.3 L700.8,661.0 L700.7,665.8 L700.7,670.6 L700.8,675.4 L700.9,680.1 M717.0,624.6 L715.7,629.4 L714.5,634.3 L713.3,639.1 L712.2,643.9 L711.2,648.8 L710.2,653.6 L709.2,658.4 L708.4,663.2 L707.5,668.0 L706.8,672.8 L706.1,677.6 L705.5,682.4 L704.9,687.2 L704.4,692.0 L704.0,696.8 L703.7,701.6 L703.4,706.4 L703.2,711.1 L703.1,715.9 L703.1,720.7 L703.1,725.5 L703.2,730.2 M735.1,625.7 L733.5,630.6 L731.9,635.6 L730.3,640.5 L728.7,645.4 L727.2,650.3 L725.7,655.2 L724.2,660.0 L722.8,664.9 L721.4,669.8 L720.1,674.6 L718.8,679.5 L717.6,684.3 L716.4,689.2 L715.2,694.0 L714.1,698.8 L713.1,703.7 L712.1,708.5 L711.2,713.3 L710.3,718.1 L709.6,722.9 L708.8,727.7 L708.2,732.5 L707.6,737.3 L707.1,742.1 L706.6,746.9 L706.2,751.7 L705.9,756.4 L705.7,761.2 L705.6,766.0 L705.5,770.8 L705.5,775.5 L705.6,780.3 M755.7,626.0 L754.0,631.0 L752.3,636.0 L750.6,641.0 L748.8,646.0 L747.1,651.0 L745.4,655.9 L743.7,660.9 L742.0,665.9 L740.3,670.8 L738.6,675.7 L736.9,680.7 L735.3,685.6 L733.7,690.5 L732.1,695.4 L730.5,700.3 L729.0,705.2 L727.5,710.1 L726.0,715.0 L724.6,719.8 L723.2,724.7 L721.9,729.6 L720.6,734.4 L719.4,739.2 L718.2,744.1 L717.1,748.9 L716.0,753.7 L715.0,758.6 L714.1,763.4 L713.2,768.2 L712.3,773.0 L711.6,777.8 L710.9,782.6 L710.3,787.4 L709.7,792.2 L709.2,797.0 L708.8,801.7 L708.5,806.5 L708.2,811.3 L708.0,816.1 L707.9,820.9 L707.9,825.6 L707.9,830.4 L708.1,835.2 M775.7,625.3 L774.2,630.4 L772.7,635.5 L771.1,640.6 L769.5,645.7 L767.9,650.8 L766.2,655.8 L764.6,660.9 L762.9,665.9 L761.2,670.9 L759.4,676.0 L757.7,681.0 L756.0,686.0 L754.2,691.0 L752.5,696.0 L750.7,701.0 L749.0,706.0 L747.2,710.9 L745.5,715.9 L743.8,720.8 L742.1,725.8 L740.4,730.7 L738.7,735.6 L737.1,740.5 L735.4,745.5 L733.8,750.4 L732.3,755.3 L730.8,760.1 L729.3,765.0 L727.8,769.9 L726.4,774.8 L725.0,779.6 L723.7,784.5 L722.5,789.3 L721.2,794.1 L720.1,799.0 L719.0,803.8 L717.9,808.6 L716.9,813.4 L716.0,818.3 L715.1,823.1 L714.3,827.9 L713.6,832.7 L713.0,837.5 L712.4,842.3 L711.8,847.0 L711.4,851.8 L711.0,856.6 L710.7,861.4 M791.9,623.9 L790.9,629.0 L789.8,634.2 L788.7,639.4 L787.6,644.5 L786.3,649.7 L785.1,654.8 L783.7,659.9 L782.4,665.1 L781.0,670.2 L779.5,675.3 L778.0,680.4 L776.5,685.5 L774.9,690.6 L773.3,695.7 L771.7,700.7 L770.0,705.8 L768.3,710.8 L766.6,715.9 L764.9,720.9 L763.2,726.0 L761.4,731.0 L759.7,736.0 L757.9,741.0 L756.1,746.0 L754.3,751.0 L752.6,756.0 L750.8,760.9 L749.1,765.9 L747.3,770.8 L745.6,775.8 L743.9,780.7 L742.2,785.7 L740.5,790.6 L738.8,795.5 L737.2,800.4 L735.6,805.3 L734.0,810.2 L732.5,815.1 L731.0,819.9 L729.6,824.8 L728.2,829.7 L726.8,834.5 L725.5,839.4 L724.3,844.2 L723.1,849.0 L721.9,853.9 L720.9,858.7 L719.8,863.5 M801.9,621.8 L801.6,627.0 L801.3,632.2 L800.8,637.5 L800.3,642.7 L799.7,647.9 L799.0,653.1 L798.3,658.3 L797.5,663.4 L796.6,668.6 L795.7,673.8 L794.7,679.0 L793.7,684.1 L792.5,689.3 L791.4,694.5 L790.2,699.6 L788.9,704.7 L787.6,709.9 L786.2,715.0 L784.8,720.1 L783.3,725.2 L781.8,730.4 L780.3,735.5 L778.7,740.5 L777.1,745.6 L775.5,750.7 L773.8,755.8 L772.1,760.8 L770.4,765.9 L768.7,770.9 L766.9,776.0 L765.1,781.0 L763.4,786.0 L761.6,791.0 L759.8,796.0 L758.0,801.0 L756.2,806.0 L754.4,810.9 L752.6,815.9 L750.9,820.9 L749.1,825.8 L747.3,830.8 L745.6,835.7 L743.9,840.6 L742.2,845.5 L740.6,850.4 L739.0,855.3 L737.4,860.2 L735.8,865.1 M805.5,635.2 L805.7,640.4 L805.9,645.6 L806.0,650.9 L806.0,656.1 L805.9,661.3 L805.8,666.5 L805.6,671.7 L805.3,677.0 L804.9,682.2 L804.5,687.4 L804.0,692.6 L803.4,697.8 L802.7,703.0 L802.0,708.2 L801.2,713.4 L800.4,718.6 L799.5,723.7 L798.5,728.9 L797.5,734.1 L796.4,739.2 L795.2,744.4 L794.0,749.5 L792.7,754.7 L791.4,759.8 L790.0,765.0 L788.6,770.1 L787.2,775.2 L785.7,780.3 L784.1,785.4 L782.5,790.5 L780.9,795.6 L779.3,800.7 L777.6,805.7 L775.9,810.8 L774.2,815.9 L772.4,820.9 L770.7,825.9 L768.9,831.0 L767.1,836.0 L765.3,841.0 L763.5,846.0 L761.7,851.0 L759.8,856.0 L758.0,861.0 L756.2,865.9 M809.1,690.3 L809.3,695.5 L809.5,700.8 L809.5,706.0 L809.5,711.2 L809.4,716.4 L809.2,721.7 L808.9,726.9 L808.6,732.1 L808.1,737.3 L807.7,742.5 L807.1,747.7 L806.5,752.9 L805.8,758.1 L805.0,763.3 L804.2,768.5 L803.3,773.7 L802.3,778.8 L801.3,784.0 L800.2,789.2 L799.0,794.3 L797.8,799.5 L796.6,804.6 L795.3,809.8 L793.9,814.9 L792.5,820.0 L791.0,825.2 L789.5,830.3 L788.0,835.4 L786.4,840.5 L784.8,845.6 L783.1,850.6 L781.4,855.7 L779.7,860.8 L778.0,865.8 M812.6,740.2 L812.8,745.4 L812.9,750.7 L813.0,755.9 L813.0,761.1 L812.9,766.3 L812.8,771.6 L812.5,776.8 L812.2,782.0 L811.8,787.2 L811.4,792.4 L810.8,797.6 L810.2,802.8 L809.5,808.0 L808.8,813.2 L807.9,818.4 L807.1,823.6 L806.1,828.8 L805.1,833.9 L804.0,839.1 L802.9,844.3 L801.7,849.4 L800.4,854.6 L799.1,859.7 L797.7,864.9 M816.0,790.1 L816.3,795.4 L816.4,800.6 L816.5,805.8 L816.5,811.0 L816.5,816.3 L816.3,821.5 L816.1,826.7 L815.8,831.9 L815.5,837.1 L815.0,842.3 L814.5,847.5 L813.9,852.7 L813.3,857.9 L812.5,863.1 M819.7,845.3 L819.9,850.5 L820.0,855.7 L820.1,860.9 M698.3,620.5 L698.4,625.3 M704.0,622.8 L703.4,627.5 L702.8,632.3 L702.3,637.1 L701.8,641.9 L701.5,646.7 L701.2,651.5 L700.9,656.3 L700.8,661.0 L700.7,665.8 L700.7,670.6 L700.8,675.4 L700.9,680.1 M717.0,624.6 L715.7,629.4 L714.5,634.3 L713.3,639.1 L712.2,643.9 L711.2,648.8 L710.2,653.6 L709.2,658.4 L708.4,663.2 L707.5,668.0 L706.8,672.8 L706.1,677.6 L705.5,682.4 L704.9,687.2 L704.4,692.0 L704.0,696.8 L703.7,701.6 L703.4,706.4 L703.2,711.1 L703.1,715.9 L703.1,720.7 L703.1,725.5 L703.2,730.2 M735.1,625.7 L733.5,630.6 L731.9,635.6 L730.3,640.5 L728.7,645.4 L727.2,650.3 L725.7,655.2 L724.2,660.0 L722.8,664.9 L721.4,669.8 L720.1,674.6 L718.8,679.5 L717.6,684.3 L716.4,689.2 L715.2,694.0 L714.1,698.8 L713.1,703.7 L712.1,708.5 L711.2,713.3 L710.3,718.1 L709.6,722.9 L708.8,727.7 L708.2,732.5 L707.6,737.3 L707.1,742.1 L706.6,746.9 L706.2,751.7 L705.9,756.4 L705.7,761.2 L705.6,766.0 L705.5,770.8 L705.5,775.5 L705.6,780.3 M755.7,626.0 L754.0,631.0 L752.3,636.0 L750.6,641.0 L748.8,646.0 L747.1,651.0 L745.4,655.9 L743.7,660.9 L742.0,665.9 L740.3,670.8 L738.6,675.7 L736.9,680.7 L735.3,685.6 L733.7,690.5 L732.1,695.4 L730.5,700.3 L729.0,705.2 L727.5,710.1 L726.0,715.0 L724.6,719.8 L723.2,724.7 L721.9,729.6 L720.6,734.4 L719.4,739.2 L718.2,744.1 L717.1,748.9 L716.0,753.7 L715.0,758.6 L714.1,763.4 L713.2,768.2 L712.3,773.0 L711.6,777.8 L710.9,782.6 L710.3,787.4 L709.7,792.2 L709.2,797.0 L708.8,801.7 L708.5,806.5 L708.2,811.3 L708.0,816.1 L707.9,820.9 L707.9,825.6 L707.9,830.4 L708.1,835.2" stroke="#050505" stroke-width="3.2"/><path d="M752.5,626.0 L754.8,631.0 L757.1,636.0 L759.4,640.9 L761.7,645.9 L764.0,650.9 L766.2,655.8 L768.5,660.8 L770.7,665.7 L772.9,670.6 L775.1,675.5 L777.3,680.4 L779.4,685.3 L781.5,690.2 L783.6,695.1 L785.6,700.0 L787.6,704.9 L789.5,709.7 L791.4,714.6 L793.3,719.4 L795.1,724.3 L796.9,729.1 L798.6,733.9 L800.2,738.8 L801.8,743.6 L803.3,748.4 L804.8,753.2 L806.2,758.0 L807.5,762.8 L808.8,767.6 L810.0,772.4 L811.1,777.2 L812.2,782.0 L813.2,786.8 L814.1,791.6 L815.0,796.3 L815.7,801.1 L816.4,805.9 L817.0,810.7 L817.6,815.4 L818.0,820.2 M772.8,625.5 L774.9,630.4 L777.0,635.3 L779.1,640.2 L781.1,645.1 L783.1,649.9 L785.1,654.8 L787.0,659.7 L788.8,664.5 L790.7,669.4 L792.4,674.2 L794.2,679.0 L795.8,683.9 L797.4,688.7 L799.0,693.5 L800.5,698.3 L801.9,703.1 L803.3,707.9 L804.6,712.7 L805.8,717.5 L807.0,722.3 L808.1,727.1 L809.1,731.9 L810.1,736.7 L810.9,741.5 L811.7,746.3 L812.5,751.0 L813.1,755.8 L813.7,760.6 L814.2,765.4 L814.6,770.1 M789.8,624.1 L791.4,629.0 L793.1,633.8 L794.6,638.6 L796.2,643.4 L797.6,648.3 L799.0,653.1 L800.3,657.9 L801.6,662.7 L802.8,667.5 L803.9,672.2 L805.0,677.0 L806.0,681.8 L806.9,686.6 L807.8,691.4 L808.5,696.2 L809.2,700.9 L809.8,705.7 L810.4,710.5 L810.9,715.3 M800.9,622.2 L801.9,627.0 L802.9,631.7 L803.7,636.5 L804.6,641.3 L805.3,646.1 L806.0,650.9 L806.5,655.6 L807.1,660.4 L807.5,665.2 M707.9,830.2 L708.2,835.5 L708.6,840.7 L709.1,845.9 L709.7,851.1 L710.4,856.4 L711.1,861.6 M705.6,780.3 L706.0,785.5 L706.4,790.8 L707.0,796.0 L707.6,801.2 L708.3,806.4 L709.0,811.7 L709.9,816.9 L710.8,822.1 L711.8,827.3 L712.9,832.5 L714.0,837.7 L715.3,842.9 L716.6,848.1 L717.9,853.3 L719.3,858.5 L720.8,863.7 M703.0,725.2 L703.3,730.4 L703.7,735.6 L704.2,740.9 L704.8,746.1 L705.4,751.3 L706.2,756.5 L706.9,761.7 L707.8,767.0 L708.8,772.2 L709.8,777.4 L710.9,782.6 L712.1,787.8 L713.3,793.0 L714.6,798.2 L716.0,803.4 L717.4,808.6 L718.9,813.7 L720.5,818.9 L722.1,824.1 L723.8,829.2 L725.6,834.4 L727.4,839.6 L729.3,844.7 L731.2,849.8 L733.2,855.0 L735.2,860.1 L737.3,865.2 M700.7,675.3 L701.1,680.5 L701.5,685.7 L702.0,691.0 L702.6,696.2 L703.3,701.4 L704.0,706.6 L704.9,711.8 L705.8,717.0 L706.7,722.3 L707.8,727.5 L708.9,732.7 L710.1,737.9 L711.3,743.1 L712.6,748.3 L714.0,753.4 L715.5,758.6 L717.0,763.8 L718.6,769.0 L720.3,774.1 L722.0,779.3 L723.7,784.5 L725.5,789.6 L727.4,794.8 L729.3,799.9 L731.3,805.0 L733.3,810.1 L735.4,815.3 L737.5,820.4 L739.6,825.5 L741.8,830.5 L744.0,835.6 L746.3,840.7 L748.6,845.8 L750.9,850.8 L753.2,855.9 L755.5,860.9 L757.9,866.0 M698.1,620.1 L698.4,625.4 L698.8,630.6 L699.3,635.8 L699.8,641.0 L700.5,646.3 L701.2,651.5 L701.9,656.7 L702.8,661.9 L703.7,667.1 L704.7,672.3 L705.7,677.5 L706.9,682.8 L708.1,688.0 L709.4,693.1 L710.7,698.3 L712.1,703.5 L713.6,708.7 L715.1,713.9 L716.7,719.0 L718.4,724.2 L720.1,729.4 L721.9,734.5 L723.7,739.7 L725.6,744.8 L727.5,749.9 L729.5,755.1 L731.5,760.2 L733.5,765.3 L735.6,770.4 L737.8,775.5 L739.9,780.6 L742.2,785.7 L744.4,790.7 L746.7,795.8 L748.9,800.8 L751.3,805.9 L753.6,810.9 L755.9,816.0 L758.3,821.0 L760.7,826.0 L763.0,831.0 L765.4,836.0 L767.8,841.0 L770.2,846.0 L772.5,850.9 L774.9,855.9 L777.3,860.8 L779.6,865.8 M702.7,622.4 L703.7,627.6 L704.9,632.8 L706.1,638.0 L707.4,643.2 L708.8,648.4 L710.2,653.6 L711.7,658.8 L713.2,663.9 L714.8,669.1 L716.5,674.3 L718.2,679.4 L720.0,684.6 L721.8,689.7 L723.7,694.9 L725.6,700.0 L727.6,705.1 L729.6,710.2 L731.7,715.3 L733.8,720.4 L735.9,725.5 L738.1,730.6 L740.3,735.7 L742.5,740.8 L744.7,745.8 L747.0,750.9 L749.3,755.9 L751.6,760.9 L754.0,766.0 L756.3,771.0 L758.6,776.0 L761.0,781.0 L763.4,786.0 L765.7,791.0 L768.1,796.0 L770.4,800.9 L772.8,805.9 L775.1,810.8 L777.4,815.8 L779.7,820.7 L782.0,825.6 L784.2,830.5 L786.5,835.5 L788.6,840.4 L790.8,845.2 L792.9,850.1 L795.0,855.0 L797.1,859.9 L799.1,864.7 M714.6,624.3 L716.3,629.5 L718.1,634.6 L719.9,639.8 L721.8,644.9 L723.7,650.0 L725.7,655.2 L727.7,660.3 L729.8,665.4 L731.9,670.5 L734.0,675.6 L736.2,680.6 L738.4,685.7 L740.6,690.8 L742.8,695.8 L745.1,700.9 L747.4,705.9 L749.7,711.0 L752.0,716.0 L754.3,721.0 L756.6,726.0 L759.0,731.0 L761.3,736.0 L763.6,741.0 L766.0,745.9 L768.3,750.9 L770.6,755.9 L772.9,760.8 L775.2,765.7 L777.5,770.7 L779.7,775.6 L781.9,780.5 L784.1,785.4 L786.3,790.3 L788.4,795.2 L790.5,800.1 L792.6,805.0 L794.6,809.8 L796.6,814.7 L798.5,819.5 L800.4,824.4 L802.2,829.2 L804.0,834.1 L805.7,838.9 L807.3,843.7 L809.0,848.6 L810.5,853.4 L812.0,858.2 L813.4,863.0 M732.1,625.6 L734.2,630.7 L736.4,635.7 L738.6,640.8 L740.9,645.9 L743.1,650.9 L745.4,655.9 L747.7,661.0 L750.0,666.0 L752.3,671.0 L754.6,676.0 L756.9,681.0 L759.2,686.0 L761.5,691.0 L763.8,695.9 L766.1,700.9 L768.4,705.8 L770.7,710.8 L773.0,715.7 L775.2,720.6 L777.4,725.6 L779.6,730.5 L781.8,735.4 L783.9,740.3 L786.0,745.2 L788.1,750.0 L790.1,754.9 L792.1,759.8 L794.0,764.6 L795.9,769.5 L797.7,774.3 L799.5,779.2 L801.3,784.0 L803.0,788.8 L804.6,793.7 L806.1,798.5 L807.7,803.3 L809.1,808.1 L810.5,812.9 L811.8,817.7 L813.0,822.5 L814.2,827.3 L815.3,832.1 L816.3,836.9 L817.3,841.7 L818.1,846.4 L818.9,851.2 L819.7,856.0 L820.3,860.8 M752.5,626.0 L754.8,631.0 L757.1,636.0 L759.4,640.9 L761.7,645.9 L764.0,650.9 L766.2,655.8 L768.5,660.8 L770.7,665.7 L772.9,670.6 L775.1,675.5 L777.3,680.4 L779.4,685.3 L781.5,690.2 L783.6,695.1 L785.6,700.0 L787.6,704.9 L789.5,709.7 L791.4,714.6 L793.3,719.4 L795.1,724.3 L796.9,729.1 L798.6,733.9 L800.2,738.8 L801.8,743.6 L803.3,748.4 L804.8,753.2 L806.2,758.0 L807.5,762.8 L808.8,767.6 L810.0,772.4 L811.1,777.2 L812.2,782.0 L813.2,786.8 L814.1,791.6 L815.0,796.3 L815.7,801.1 L816.4,805.9 L817.0,810.7 L817.6,815.4 L818.0,820.2 M772.8,625.5 L774.9,630.4 L777.0,635.3 L779.1,640.2 L781.1,645.1 L783.1,649.9 L785.1,654.8 L787.0,659.7 L788.8,664.5 L790.7,669.4 L792.4,674.2 L794.2,679.0 L795.8,683.9 L797.4,688.7 L799.0,693.5 L800.5,698.3 L801.9,703.1 L803.3,707.9 L804.6,712.7 L805.8,717.5 L807.0,722.3 L808.1,727.1 L809.1,731.9 L810.1,736.7 L810.9,741.5 L811.7,746.3 L812.5,751.0 L813.1,755.8 L813.7,760.6 L814.2,765.4 L814.6,770.1 M789.8,624.1 L791.4,629.0 L793.1,633.8 L794.6,638.6 L796.2,643.4 L797.6,648.3 L799.0,653.1 L800.3,657.9 L801.6,662.7 L802.8,667.5 L803.9,672.2 L805.0,677.0 L806.0,681.8 L806.9,686.6 L807.8,691.4 L808.5,696.2 L809.2,700.9 L809.8,705.7 L810.4,710.5 L810.9,715.3 M800.9,622.2 L801.9,627.0 L802.9,631.7 L803.7,636.5 L804.6,641.3 L805.3,646.1 L806.0,650.9 L806.5,655.6 L807.1,660.4 L807.5,665.2 M707.9,830.2 L708.2,835.5 L708.6,840.7 L709.1,845.9 L709.7,851.1 L710.4,856.4 L711.1,861.6 M705.6,780.3 L706.0,785.5 L706.4,790.8 L707.0,796.0 L707.6,801.2 L708.3,806.4 L709.0,811.7 L709.9,816.9 L710.8,822.1 L711.8,827.3 L712.9,832.5 L714.0,837.7 L715.3,842.9 L716.6,848.1 L717.9,853.3 L719.3,858.5 L720.8,863.7 M703.0,725.2 L703.3,730.4 L703.7,735.6 L704.2,740.9 L704.8,746.1 L705.4,751.3 L706.2,756.5 L706.9,761.7 L707.8,767.0 L708.8,772.2 L709.8,777.4 L710.9,782.6 L712.1,787.8 L713.3,793.0 L714.6,798.2 L716.0,803.4 L717.4,808.6 L718.9,813.7 L720.5,818.9 L722.1,824.1 L723.8,829.2 L725.6,834.4 L727.4,839.6 L729.3,844.7 L731.2,849.8 L733.2,855.0 L735.2,860.1 L737.3,865.2 M700.7,675.3 L701.1,680.5 L701.5,685.7 L702.0,691.0 L702.6,696.2 L703.3,701.4 L704.0,706.6 L704.9,711.8 L705.8,717.0 L706.7,722.3 L707.8,727.5 L708.9,732.7 L710.1,737.9 L711.3,743.1 L712.6,748.3 L714.0,753.4 L715.5,758.6 L717.0,763.8 L718.6,769.0 L720.3,774.1 L722.0,779.3 L723.7,784.5 L725.5,789.6 L727.4,794.8 L729.3,799.9 L731.3,805.0 L733.3,810.1 L735.4,815.3 L737.5,820.4 L739.6,825.5 L741.8,830.5 L744.0,835.6 L746.3,840.7 L748.6,845.8 L750.9,850.8 L753.2,855.9 L755.5,860.9 L757.9,866.0 M698.1,620.1 L698.4,625.4 L698.8,630.6 L699.3,635.8 L699.8,641.0 L700.5,646.3 L701.2,651.5 L701.9,656.7 L702.8,661.9 L703.7,667.1 L704.7,672.3 L705.7,677.5 L706.9,682.8 L708.1,688.0 L709.4,693.1 L710.7,698.3 L712.1,703.5 L713.6,708.7 L715.1,713.9 L716.7,719.0 L718.4,724.2 L720.1,729.4 L721.9,734.5 L723.7,739.7 L725.6,744.8 L727.5,749.9 L729.5,755.1 L731.5,760.2 L733.5,765.3 L735.6,770.4 L737.8,775.5 L739.9,780.6 L742.2,785.7 L744.4,790.7 L746.7,795.8 L748.9,800.8 L751.3,805.9 L753.6,810.9 L755.9,816.0 L758.3,821.0 L760.7,826.0 L763.0,831.0 L765.4,836.0 L767.8,841.0 L770.2,846.0 L772.5,850.9 L774.9,855.9 L777.3,860.8 L779.6,865.8 M702.7,622.4 L703.7,627.6 L704.9,632.8 L706.1,638.0 L707.4,643.2 L708.8,648.4 L710.2,653.6 L711.7,658.8 L713.2,663.9 L714.8,669.1 L716.5,674.3 L718.2,679.4 L720.0,684.6 L721.8,689.7 L723.7,694.9 L725.6,700.0 L727.6,705.1 L729.6,710.2 L731.7,715.3 L733.8,720.4 L735.9,725.5 L738.1,730.6 L740.3,735.7 L742.5,740.8 L744.7,745.8 L747.0,750.9 L749.3,755.9 L751.6,760.9 L754.0,766.0 L756.3,771.0 L758.6,776.0 L761.0,781.0 L763.4,786.0 L765.7,791.0 L768.1,796.0 L770.4,800.9 L772.8,805.9 L775.1,810.8 L777.4,815.8 L779.7,820.7 L782.0,825.6 L784.2,830.5 L786.5,835.5 L788.6,840.4 L790.8,845.2 L792.9,850.1 L795.0,855.0 L797.1,859.9 L799.1,864.7 M714.6,624.3 L716.3,629.5 L718.1,634.6 L719.9,639.8 L721.8,644.9 L723.7,650.0 L725.7,655.2 L727.7,660.3 L729.8,665.4 L731.9,670.5 L734.0,675.6 L736.2,680.6 L738.4,685.7 L740.6,690.8 L742.8,695.8 L745.1,700.9 L747.4,705.9 L749.7,711.0 L752.0,716.0 L754.3,721.0 L756.6,726.0 L759.0,731.0 L761.3,736.0 L763.6,741.0 L766.0,745.9 L768.3,750.9 L770.6,755.9 L772.9,760.8 L775.2,765.7 L777.5,770.7 L779.7,775.6 L781.9,780.5 L784.1,785.4 L786.3,790.3 L788.4,795.2 L790.5,800.1 L792.6,805.0 L794.6,809.8 L796.6,814.7 L798.5,819.5 L800.4,824.4 L802.2,829.2 L804.0,834.1 L805.7,838.9 L807.3,843.7 L809.0,848.6 L810.5,853.4 L812.0,858.2 L813.4,863.0 M732.1,625.6 L734.2,630.7 L736.4,635.7 L738.6,640.8 L740.9,645.9 L743.1,650.9 L745.4,655.9 L747.7,661.0 L750.0,666.0 L752.3,671.0 L754.6,676.0 L756.9,681.0 L759.2,686.0 L761.5,691.0 L763.8,695.9 L766.1,700.9 L768.4,705.8 L770.7,710.8 L773.0,715.7 L775.2,720.6 L777.4,725.6 L779.6,730.5 L781.8,735.4 L783.9,740.3 L786.0,745.2 L788.1,750.0 L790.1,754.9 L792.1,759.8 L794.0,764.6 L795.9,769.5 L797.7,774.3 L799.5,779.2 L801.3,784.0 L803.0,788.8 L804.6,793.7 L806.1,798.5 L807.7,803.3 L809.1,808.1 L810.5,812.9 L811.8,817.7 L813.0,822.5 L814.2,827.3 L815.3,832.1 L816.3,836.9 L817.3,841.7 L818.1,846.4 L818.9,851.2 L819.7,856.0 L820.3,860.8 M752.5,626.0 L754.8,631.0 L757.1,636.0 L759.4,640.9 L761.7,645.9 L764.0,650.9 L766.2,655.8 L768.5,660.8 L770.7,665.7 L772.9,670.6 L775.1,675.5 L777.3,680.4 L779.4,685.3 L781.5,690.2 L783.6,695.1 L785.6,700.0 L787.6,704.9 L789.5,709.7 L791.4,714.6 L793.3,719.4 L795.1,724.3 L796.9,729.1 L798.6,733.9 L800.2,738.8 L801.8,743.6 L803.3,748.4 L804.8,753.2 L806.2,758.0 L807.5,762.8 L808.8,767.6 L810.0,772.4 L811.1,777.2 L812.2,782.0 L813.2,786.8 L814.1,791.6 L815.0,796.3 L815.7,801.1 L816.4,805.9 L817.0,810.7 L817.6,815.4 L818.0,820.2 M772.8,625.5 L774.9,630.4 L777.0,635.3 L779.1,640.2 L781.1,645.1 L783.1,649.9 L785.1,654.8 L787.0,659.7 L788.8,664.5 L790.7,669.4 L792.4,674.2 L794.2,679.0 L795.8,683.9 L797.4,688.7 L799.0,693.5 L800.5,698.3 L801.9,703.1 L803.3,707.9 L804.6,712.7 L805.8,717.5 L807.0,722.3 L808.1,727.1 L809.1,731.9 L810.1,736.7 L810.9,741.5 L811.7,746.3 L812.5,751.0 L813.1,755.8 L813.7,760.6 L814.2,765.4 L814.6,770.1 M789.8,624.1 L791.4,629.0 L793.1,633.8 L794.6,638.6 L796.2,643.4 L797.6,648.3 L799.0,653.1 L800.3,657.9 L801.6,662.7 L802.8,667.5 L803.9,672.2 L805.0,677.0 L806.0,681.8 L806.9,686.6 L807.8,691.4 L808.5,696.2 L809.2,700.9 L809.8,705.7 L810.4,710.5 L810.9,715.3 M800.9,622.2 L801.9,627.0 L802.9,631.7 L803.7,636.5 L804.6,641.3 L805.3,646.1 L806.0,650.9 L806.5,655.6 L807.1,660.4 L807.5,665.2 M707.9,830.2 L708.2,835.5 L708.6,840.7 L709.1,845.9 L709.7,851.1 L710.4,856.4 L711.1,861.6 M705.6,780.3 L706.0,785.5 L706.4,790.8 L707.0,796.0 L707.6,801.2 L708.3,806.4 L709.0,811.7 L709.9,816.9 L710.8,822.1 L711.8,827.3 L712.9,832.5 L714.0,837.7 L715.3,842.9 L716.6,848.1 L717.9,853.3 L719.3,858.5 L720.8,863.7 M703.0,725.2 L703.3,730.4 L703.7,735.6 L704.2,740.9 L704.8,746.1 L705.4,751.3 L706.2,756.5 L706.9,761.7 L707.8,767.0 L708.8,772.2 L709.8,777.4 L710.9,782.6 L712.1,787.8 L713.3,793.0 L714.6,798.2 L716.0,803.4 L717.4,808.6 L718.9,813.7 L720.5,818.9 L722.1,824.1 L723.8,829.2 L725.6,834.4 L727.4,839.6 L729.3,844.7 L731.2,849.8 L733.2,855.0 L735.2,860.1 L737.3,865.2 M700.7,675.3 L701.1,680.5 L701.5,685.7 L702.0,691.0 L702.6,696.2 L703.3,701.4 L704.0,706.6 L704.9,711.8 L705.8,717.0 L706.7,722.3 L707.8,727.5 L708.9,732.7 L710.1,737.9 L711.3,743.1 L712.6,748.3 L714.0,753.4 L715.5,758.6 L717.0,763.8 L718.6,769.0 L720.3,774.1 L722.0,779.3 L723.7,784.5 L725.5,789.6 L727.4,794.8 L729.3,799.9 L731.3,805.0 L733.3,810.1 L735.4,815.3 L737.5,820.4 L739.6,825.5 L741.8,830.5 L744.0,835.6 L746.3,840.7 L748.6,845.8 L750.9,850.8 L753.2,855.9 L755.5,860.9 L757.9,866.0 M698.1,620.1 L698.4,625.4 L698.8,630.6 L699.3,635.8 L699.8,641.0 L700.5,646.3 L701.2,651.5 L701.9,656.7 L702.8,661.9 L703.7,667.1 L704.7,672.3 L705.7,677.5 L706.9,682.8 L708.1,688.0 L709.4,693.1 L710.7,698.3 L712.1,703.5 L713.6,708.7 L715.1,713.9 L716.7,719.0 L718.4,724.2 L720.1,729.4 L721.9,734.5 L723.7,739.7 L725.6,744.8 L727.5,749.9 L729.5,755.1 L731.5,760.2 L733.5,765.3 L735.6,770.4 L737.8,775.5 L739.9,780.6 L742.2,785.7 L744.4,790.7 L746.7,795.8 L748.9,800.8 L751.3,805.9 L753.6,810.9 L755.9,816.0 L758.3,821.0 L760.7,826.0 L763.0,831.0 L765.4,836.0 L767.8,841.0 L770.2,846.0 L772.5,850.9 L774.9,855.9 L777.3,860.8 L779.6,865.8 M702.7,622.4 L703.7,627.6 L704.9,632.8 L706.1,638.0 L707.4,643.2 L708.8,648.4 L710.2,653.6 L711.7,658.8 L713.2,663.9 L714.8,669.1 L716.5,674.3 L718.2,679.4 L720.0,684.6 L721.8,689.7 L723.7,694.9 L725.6,700.0 L727.6,705.1 L729.6,710.2 L731.7,715.3 L733.8,720.4 L735.9,725.5 L738.1,730.6 L740.3,735.7 L742.5,740.8 L744.7,745.8 L747.0,750.9 L749.3,755.9 L751.6,760.9 L754.0,766.0 L756.3,771.0 L758.6,776.0 L761.0,781.0 L763.4,786.0 L765.7,791.0 L768.1,796.0 L770.4,800.9 L772.8,805.9 L775.1,810.8 L777.4,815.8 L779.7,820.7 L782.0,825.6 L784.2,830.5 L786.5,835.5 L788.6,840.4 L790.8,845.2 L792.9,850.1 L795.0,855.0 L797.1,859.9 L799.1,864.7 M714.6,624.3 L716.3,629.5 L718.1,634.6 L719.9,639.8 L721.8,644.9 L723.7,650.0 L725.7,655.2 L727.7,660.3 L729.8,665.4 L731.9,670.5 L734.0,675.6 L736.2,680.6 L738.4,685.7 L740.6,690.8 L742.8,695.8 L745.1,700.9 L747.4,705.9 L749.7,711.0 L752.0,716.0 L754.3,721.0 L756.6,726.0 L759.0,731.0 L761.3,736.0 L763.6,741.0 L766.0,745.9 L768.3,750.9 L770.6,755.9 L772.9,760.8 L775.2,765.7 L777.5,770.7 L779.7,775.6 L781.9,780.5 L784.1,785.4 L786.3,790.3 L788.4,795.2 L790.5,800.1 L792.6,805.0 L794.6,809.8 L796.6,814.7 L798.5,819.5 L800.4,824.4 L802.2,829.2 L804.0,834.1 L805.7,838.9 L807.3,843.7 L809.0,848.6 L810.5,853.4 L812.0,858.2 L813.4,863.0 M732.1,625.6 L734.2,630.7 L736.4,635.7 L738.6,640.8 L740.9,645.9 L743.1,650.9 L745.4,655.9 L747.7,661.0 L750.0,666.0 L752.3,671.0 L754.6,676.0 L756.9,681.0 L759.2,686.0 L761.5,691.0 L763.8,695.9 L766.1,700.9 L768.4,705.8 L770.7,710.8 L773.0,715.7 L775.2,720.6 L777.4,725.6 L779.6,730.5 L781.8,735.4 L783.9,740.3 L786.0,745.2 L788.1,750.0 L790.1,754.9 L792.1,759.8 L794.0,764.6 L795.9,769.5 L797.7,774.3 L799.5,779.2 L801.3,784.0 L803.0,788.8 L804.6,793.7 L806.1,798.5 L807.7,803.3 L809.1,808.1 L810.5,812.9 L811.8,817.7 L813.0,822.5 L814.2,827.3 L815.3,832.1 L816.3,836.9 L817.3,841.7 L818.1,846.4 L818.9,851.2 L819.7,856.0 L820.3,860.8 M775.7,625.3 L774.2,630.4 L772.7,635.5 L771.1,640.6 L769.5,645.7 L767.9,650.8 L766.2,655.8 L764.6,660.9 L762.9,665.9 L761.2,670.9 L759.4,676.0 L757.7,681.0 L756.0,686.0 L754.2,691.0 L752.5,696.0 L750.7,701.0 L749.0,706.0 L747.2,710.9 L745.5,715.9 L743.8,720.8 L742.1,725.8 L740.4,730.7 L738.7,735.6 L737.1,740.5 L735.4,745.5 L733.8,750.4 L732.3,755.3 L730.8,760.1 L729.3,765.0 L727.8,769.9 L726.4,774.8 L725.0,779.6 L723.7,784.5 L722.5,789.3 L721.2,794.1 L720.1,799.0 L719.0,803.8 L717.9,808.6 L716.9,813.4 L716.0,818.3 L715.1,823.1 L714.3,827.9 L713.6,832.7 L713.0,837.5 L712.4,842.3 L711.8,847.0 L711.4,851.8 L711.0,856.6 L710.7,861.4 M791.9,623.9 L790.9,629.0 L789.8,634.2 L788.7,639.4 L787.6,644.5 L786.3,649.7 L785.1,654.8 L783.7,659.9 L782.4,665.1 L781.0,670.2 L779.5,675.3 L778.0,680.4 L776.5,685.5 L774.9,690.6 L773.3,695.7 L771.7,700.7 L770.0,705.8 L768.3,710.8 L766.6,715.9 L764.9,720.9 L763.2,726.0 L761.4,731.0 L759.7,736.0 L757.9,741.0 L756.1,746.0 L754.3,751.0 L752.6,756.0 L750.8,760.9 L749.1,765.9 L747.3,770.8 L745.6,775.8 L743.9,780.7 L742.2,785.7 L740.5,790.6 L738.8,795.5 L737.2,800.4 L735.6,805.3 L734.0,810.2 L732.5,815.1 L731.0,819.9 L729.6,824.8 L728.2,829.7 L726.8,834.5 L725.5,839.4 L724.3,844.2 L723.1,849.0 L721.9,853.9 L720.9,858.7 L719.8,863.5 M801.9,621.8 L801.6,627.0 L801.3,632.2 L800.8,637.5 L800.3,642.7 L799.7,647.9 L799.0,653.1 L798.3,658.3 L797.5,663.4 L796.6,668.6 L795.7,673.8 L794.7,679.0 L793.7,684.1 L792.5,689.3 L791.4,694.5 L790.2,699.6 L788.9,704.7 L787.6,709.9 L786.2,715.0 L784.8,720.1 L783.3,725.2 L781.8,730.4 L780.3,735.5 L778.7,740.5 L777.1,745.6 L775.5,750.7 L773.8,755.8 L772.1,760.8 L770.4,765.9 L768.7,770.9 L766.9,776.0 L765.1,781.0 L763.4,786.0 L761.6,791.0 L759.8,796.0 L758.0,801.0 L756.2,806.0 L754.4,810.9 L752.6,815.9 L750.9,820.9 L749.1,825.8 L747.3,830.8 L745.6,835.7 L743.9,840.6 L742.2,845.5 L740.6,850.4 L739.0,855.3 L737.4,860.2 L735.8,865.1 M805.5,635.2 L805.7,640.4 L805.9,645.6 L806.0,650.9 L806.0,656.1 L805.9,661.3 L805.8,666.5 L805.6,671.7 L805.3,677.0 L804.9,682.2 L804.5,687.4 L804.0,692.6 L803.4,697.8 L802.7,703.0 L802.0,708.2 L801.2,713.4 L800.4,718.6 L799.5,723.7 L798.5,728.9 L797.5,734.1 L796.4,739.2 L795.2,744.4 L794.0,749.5 L792.7,754.7 L791.4,759.8 L790.0,765.0 L788.6,770.1 L787.2,775.2 L785.7,780.3 L784.1,785.4 L782.5,790.5 L780.9,795.6 L779.3,800.7 L777.6,805.7 L775.9,810.8 L774.2,815.9 L772.4,820.9 L770.7,825.9 L768.9,831.0 L767.1,836.0 L765.3,841.0 L763.5,846.0 L761.7,851.0 L759.8,856.0 L758.0,861.0 L756.2,865.9 M809.1,690.3 L809.3,695.5 L809.5,700.8 L809.5,706.0 L809.5,711.2 L809.4,716.4 L809.2,721.7 L808.9,726.9 L808.6,732.1 L808.1,737.3 L807.7,742.5 L807.1,747.7 L806.5,752.9 L805.8,758.1 L805.0,763.3 L804.2,768.5 L803.3,773.7 L802.3,778.8 L801.3,784.0 L800.2,789.2 L799.0,794.3 L797.8,799.5 L796.6,804.6 L795.3,809.8 L793.9,814.9 L792.5,820.0 L791.0,825.2 L789.5,830.3 L788.0,835.4 L786.4,840.5 L784.8,845.6 L783.1,850.6 L781.4,855.7 L779.7,860.8 L778.0,865.8 M812.6,740.2 L812.8,745.4 L812.9,750.7 L813.0,755.9 L813.0,761.1 L812.9,766.3 L812.8,771.6 L812.5,776.8 L812.2,782.0 L811.8,787.2 L811.4,792.4 L810.8,797.6 L810.2,802.8 L809.5,808.0 L808.8,813.2 L807.9,818.4 L807.1,823.6 L806.1,828.8 L805.1,833.9 L804.0,839.1 L802.9,844.3 L801.7,849.4 L800.4,854.6 L799.1,859.7 L797.7,864.9 M816.0,790.1 L816.3,795.4 L816.4,800.6 L816.5,805.8 L816.5,811.0 L816.5,816.3 L816.3,821.5 L816.1,826.7 L815.8,831.9 L815.5,837.1 L815.0,842.3 L814.5,847.5 L813.9,852.7 L813.3,857.9 L812.5,863.1 M819.7,845.3 L819.9,850.5 L820.0,855.7 L820.1,860.9 M698.3,620.5 L698.4,625.3 M704.0,622.8 L703.4,627.5 L702.8,632.3 L702.3,637.1 L701.8,641.9 L701.5,646.7 L701.2,651.5 L700.9,656.3 L700.8,661.0 L700.7,665.8 L700.7,670.6 L700.8,675.4 L700.9,680.1 M717.0,624.6 L715.7,629.4 L714.5,634.3 L713.3,639.1 L712.2,643.9 L711.2,648.8 L710.2,653.6 L709.2,658.4 L708.4,663.2 L707.5,668.0 L706.8,672.8 L706.1,677.6 L705.5,682.4 L704.9,687.2 L704.4,692.0 L704.0,696.8 L703.7,701.6 L703.4,706.4 L703.2,711.1 L703.1,715.9 L703.1,720.7 L703.1,725.5 L703.2,730.2 M735.1,625.7 L733.5,630.6 L731.9,635.6 L730.3,640.5 L728.7,645.4 L727.2,650.3 L725.7,655.2 L724.2,660.0 L722.8,664.9 L721.4,669.8 L720.1,674.6 L718.8,679.5 L717.6,684.3 L716.4,689.2 L715.2,694.0 L714.1,698.8 L713.1,703.7 L712.1,708.5 L711.2,713.3 L710.3,718.1 L709.6,722.9 L708.8,727.7 L708.2,732.5 L707.6,737.3 L707.1,742.1 L706.6,746.9 L706.2,751.7 L705.9,756.4 L705.7,761.2 L705.6,766.0 L705.5,770.8 L705.5,775.5 L705.6,780.3 M755.7,626.0 L754.0,631.0 L752.3,636.0 L750.6,641.0 L748.8,646.0 L747.1,651.0 L745.4,655.9 L743.7,660.9 L742.0,665.9 L740.3,670.8 L738.6,675.7 L736.9,680.7 L735.3,685.6 L733.7,690.5 L732.1,695.4 L730.5,700.3 L729.0,705.2 L727.5,710.1 L726.0,715.0 L724.6,719.8 L723.2,724.7 L721.9,729.6 L720.6,734.4 L719.4,739.2 L718.2,744.1 L717.1,748.9 L716.0,753.7 L715.0,758.6 L714.1,763.4 L713.2,768.2 L712.3,773.0 L711.6,777.8 L710.9,782.6 L710.3,787.4 L709.7,792.2 L709.2,797.0 L708.8,801.7 L708.5,806.5 L708.2,811.3 L708.0,816.1 L707.9,820.9 L707.9,825.6 L707.9,830.4 L708.1,835.2 M775.7,625.3 L774.2,630.4 L772.7,635.5 L771.1,640.6 L769.5,645.7 L767.9,650.8 L766.2,655.8 L764.6,660.9 L762.9,665.9 L761.2,670.9 L759.4,676.0 L757.7,681.0 L756.0,686.0 L754.2,691.0 L752.5,696.0 L750.7,701.0 L749.0,706.0 L747.2,710.9 L745.5,715.9 L743.8,720.8 L742.1,725.8 L740.4,730.7 L738.7,735.6 L737.1,740.5 L735.4,745.5 L733.8,750.4 L732.3,755.3 L730.8,760.1 L729.3,765.0 L727.8,769.9 L726.4,774.8 L725.0,779.6 L723.7,784.5 L722.5,789.3 L721.2,794.1 L720.1,799.0 L719.0,803.8 L717.9,808.6 L716.9,813.4 L716.0,818.3 L715.1,823.1 L714.3,827.9 L713.6,832.7 L713.0,837.5 L712.4,842.3 L711.8,847.0 L711.4,851.8 L711.0,856.6 L710.7,861.4 M791.9,623.9 L790.9,629.0 L789.8,634.2 L788.7,639.4 L787.6,644.5 L786.3,649.7 L785.1,654.8 L783.7,659.9 L782.4,665.1 L781.0,670.2 L779.5,675.3 L778.0,680.4 L776.5,685.5 L774.9,690.6 L773.3,695.7 L771.7,700.7 L770.0,705.8 L768.3,710.8 L766.6,715.9 L764.9,720.9 L763.2,726.0 L761.4,731.0 L759.7,736.0 L757.9,741.0 L756.1,746.0 L754.3,751.0 L752.6,756.0 L750.8,760.9 L749.1,765.9 L747.3,770.8 L745.6,775.8 L743.9,780.7 L742.2,785.7 L740.5,790.6 L738.8,795.5 L737.2,800.4 L735.6,805.3 L734.0,810.2 L732.5,815.1 L731.0,819.9 L729.6,824.8 L728.2,829.7 L726.8,834.5 L725.5,839.4 L724.3,844.2 L723.1,849.0 L721.9,853.9 L720.9,858.7 L719.8,863.5 M801.9,621.8 L801.6,627.0 L801.3,632.2 L800.8,637.5 L800.3,642.7 L799.7,647.9 L799.0,653.1 L798.3,658.3 L797.5,663.4 L796.6,668.6 L795.7,673.8 L794.7,679.0 L793.7,684.1 L792.5,689.3 L791.4,694.5 L790.2,699.6 L788.9,704.7 L787.6,709.9 L786.2,715.0 L784.8,720.1 L783.3,725.2 L781.8,730.4 L780.3,735.5 L778.7,740.5 L777.1,745.6 L775.5,750.7 L773.8,755.8 L772.1,760.8 L770.4,765.9 L768.7,770.9 L766.9,776.0 L765.1,781.0 L763.4,786.0 L761.6,791.0 L759.8,796.0 L758.0,801.0 L756.2,806.0 L754.4,810.9 L752.6,815.9 L750.9,820.9 L749.1,825.8 L747.3,830.8 L745.6,835.7 L743.9,840.6 L742.2,845.5 L740.6,850.4 L739.0,855.3 L737.4,860.2 L735.8,865.1 M805.5,635.2 L805.7,640.4 L805.9,645.6 L806.0,650.9 L806.0,656.1 L805.9,661.3 L805.8,666.5 L805.6,671.7 L805.3,677.0 L804.9,682.2 L804.5,687.4 L804.0,692.6 L803.4,697.8 L802.7,703.0 L802.0,708.2 L801.2,713.4 L800.4,718.6 L799.5,723.7 L798.5,728.9 L797.5,734.1 L796.4,739.2 L795.2,744.4 L794.0,749.5 L792.7,754.7 L791.4,759.8 L790.0,765.0 L788.6,770.1 L787.2,775.2 L785.7,780.3 L784.1,785.4 L782.5,790.5 L780.9,795.6 L779.3,800.7 L777.6,805.7 L775.9,810.8 L774.2,815.9 L772.4,820.9 L770.7,825.9 L768.9,831.0 L767.1,836.0 L765.3,841.0 L763.5,846.0 L761.7,851.0 L759.8,856.0 L758.0,861.0 L756.2,865.9 M809.1,690.3 L809.3,695.5 L809.5,700.8 L809.5,706.0 L809.5,711.2 L809.4,716.4 L809.2,721.7 L808.9,726.9 L808.6,732.1 L808.1,737.3 L807.7,742.5 L807.1,747.7 L806.5,752.9 L805.8,758.1 L805.0,763.3 L804.2,768.5 L803.3,773.7 L802.3,778.8 L801.3,784.0 L800.2,789.2 L799.0,794.3 L797.8,799.5 L796.6,804.6 L795.3,809.8 L793.9,814.9 L792.5,820.0 L791.0,825.2 L789.5,830.3 L788.0,835.4 L786.4,840.5 L784.8,845.6 L783.1,850.6 L781.4,855.7 L779.7,860.8 L778.0,865.8 M812.6,740.2 L812.8,745.4 L812.9,750.7 L813.0,755.9 L813.0,761.1 L812.9,766.3 L812.8,771.6 L812.5,776.8 L812.2,782.0 L811.8,787.2 L811.4,792.4 L810.8,797.6 L810.2,802.8 L809.5,808.0 L808.8,813.2 L807.9,818.4 L807.1,823.6 L806.1,828.8 L805.1,833.9 L804.0,839.1 L802.9,844.3 L801.7,849.4 L800.4,854.6 L799.1,859.7 L797.7,864.9 M816.0,790.1 L816.3,795.4 L816.4,800.6 L816.5,805.8 L816.5,811.0 L816.5,816.3 L816.3,821.5 L816.1,826.7 L815.8,831.9 L815.5,837.1 L815.0,842.3 L814.5,847.5 L813.9,852.7 L813.3,857.9 L812.5,863.1 M819.7,845.3 L819.9,850.5 L820.0,855.7 L820.1,860.9 M698.3,620.5 L698.4,625.3 M704.0,622.8 L703.4,627.5 L702.8,632.3 L702.3,637.1 L701.8,641.9 L701.5,646.7 L701.2,651.5 L700.9,656.3 L700.8,661.0 L700.7,665.8 L700.7,670.6 L700.8,675.4 L700.9,680.1 M717.0,624.6 L715.7,629.4 L714.5,634.3 L713.3,639.1 L712.2,643.9 L711.2,648.8 L710.2,653.6 L709.2,658.4 L708.4,663.2 L707.5,668.0 L706.8,672.8 L706.1,677.6 L705.5,682.4 L704.9,687.2 L704.4,692.0 L704.0,696.8 L703.7,701.6 L703.4,706.4 L703.2,711.1 L703.1,715.9 L703.1,720.7 L703.1,725.5 L703.2,730.2 M735.1,625.7 L733.5,630.6 L731.9,635.6 L730.3,640.5 L728.7,645.4 L727.2,650.3 L725.7,655.2 L724.2,660.0 L722.8,664.9 L721.4,669.8 L720.1,674.6 L718.8,679.5 L717.6,684.3 L716.4,689.2 L715.2,694.0 L714.1,698.8 L713.1,703.7 L712.1,708.5 L711.2,713.3 L710.3,718.1 L709.6,722.9 L708.8,727.7 L708.2,732.5 L707.6,737.3 L707.1,742.1 L706.6,746.9 L706.2,751.7 L705.9,756.4 L705.7,761.2 L705.6,766.0 L705.5,770.8 L705.5,775.5 L705.6,780.3 M755.7,626.0 L754.0,631.0 L752.3,636.0 L750.6,641.0 L748.8,646.0 L747.1,651.0 L745.4,655.9 L743.7,660.9 L742.0,665.9 L740.3,670.8 L738.6,675.7 L736.9,680.7 L735.3,685.6 L733.7,690.5 L732.1,695.4 L730.5,700.3 L729.0,705.2 L727.5,710.1 L726.0,715.0 L724.6,719.8 L723.2,724.7 L721.9,729.6 L720.6,734.4 L719.4,739.2 L718.2,744.1 L717.1,748.9 L716.0,753.7 L715.0,758.6 L714.1,763.4 L713.2,768.2 L712.3,773.0 L711.6,777.8 L710.9,782.6 L710.3,787.4 L709.7,792.2 L709.2,797.0 L708.8,801.7 L708.5,806.5 L708.2,811.3 L708.0,816.1 L707.9,820.9 L707.9,825.6 L707.9,830.4 L708.1,835.2 M775.7,625.3 L774.2,630.4 L772.7,635.5 L771.1,640.6 L769.5,645.7 L767.9,650.8 L766.2,655.8 L764.6,660.9 L762.9,665.9 L761.2,670.9 L759.4,676.0 L757.7,681.0 L756.0,686.0 L754.2,691.0 L752.5,696.0 L750.7,701.0 L749.0,706.0 L747.2,710.9 L745.5,715.9 L743.8,720.8 L742.1,725.8 L740.4,730.7 L738.7,735.6 L737.1,740.5 L735.4,745.5 L733.8,750.4 L732.3,755.3 L730.8,760.1 L729.3,765.0 L727.8,769.9 L726.4,774.8 L725.0,779.6 L723.7,784.5 L722.5,789.3 L721.2,794.1 L720.1,799.0 L719.0,803.8 L717.9,808.6 L716.9,813.4 L716.0,818.3 L715.1,823.1 L714.3,827.9 L713.6,832.7 L713.0,837.5 L712.4,842.3 L711.8,847.0 L711.4,851.8 L711.0,856.6 L710.7,861.4 M791.9,623.9 L790.9,629.0 L789.8,634.2 L788.7,639.4 L787.6,644.5 L786.3,649.7 L785.1,654.8 L783.7,659.9 L782.4,665.1 L781.0,670.2 L779.5,675.3 L778.0,680.4 L776.5,685.5 L774.9,690.6 L773.3,695.7 L771.7,700.7 L770.0,705.8 L768.3,710.8 L766.6,715.9 L764.9,720.9 L763.2,726.0 L761.4,731.0 L759.7,736.0 L757.9,741.0 L756.1,746.0 L754.3,751.0 L752.6,756.0 L750.8,760.9 L749.1,765.9 L747.3,770.8 L745.6,775.8 L743.9,780.7 L742.2,785.7 L740.5,790.6 L738.8,795.5 L737.2,800.4 L735.6,805.3 L734.0,810.2 L732.5,815.1 L731.0,819.9 L729.6,824.8 L728.2,829.7 L726.8,834.5 L725.5,839.4 L724.3,844.2 L723.1,849.0 L721.9,853.9 L720.9,858.7 L719.8,863.5 M801.9,621.8 L801.6,627.0 L801.3,632.2 L800.8,637.5 L800.3,642.7 L799.7,647.9 L799.0,653.1 L798.3,658.3 L797.5,663.4 L796.6,668.6 L795.7,673.8 L794.7,679.0 L793.7,684.1 L792.5,689.3 L791.4,694.5 L790.2,699.6 L788.9,704.7 L787.6,709.9 L786.2,715.0 L784.8,720.1 L783.3,725.2 L781.8,730.4 L780.3,735.5 L778.7,740.5 L777.1,745.6 L775.5,750.7 L773.8,755.8 L772.1,760.8 L770.4,765.9 L768.7,770.9 L766.9,776.0 L765.1,781.0 L763.4,786.0 L761.6,791.0 L759.8,796.0 L758.0,801.0 L756.2,806.0 L754.4,810.9 L752.6,815.9 L750.9,820.9 L749.1,825.8 L747.3,830.8 L745.6,835.7 L743.9,840.6 L742.2,845.5 L740.6,850.4 L739.0,855.3 L737.4,860.2 L735.8,865.1 M805.5,635.2 L805.7,640.4 L805.9,645.6 L806.0,650.9 L806.0,656.1 L805.9,661.3 L805.8,666.5 L805.6,671.7 L805.3,677.0 L804.9,682.2 L804.5,687.4 L804.0,692.6 L803.4,697.8 L802.7,703.0 L802.0,708.2 L801.2,713.4 L800.4,718.6 L799.5,723.7 L798.5,728.9 L797.5,734.1 L796.4,739.2 L795.2,744.4 L794.0,749.5 L792.7,754.7 L791.4,759.8 L790.0,765.0 L788.6,770.1 L787.2,775.2 L785.7,780.3 L784.1,785.4 L782.5,790.5 L780.9,795.6 L779.3,800.7 L777.6,805.7 L775.9,810.8 L774.2,815.9 L772.4,820.9 L770.7,825.9 L768.9,831.0 L767.1,836.0 L765.3,841.0 L763.5,846.0 L761.7,851.0 L759.8,856.0 L758.0,861.0 L756.2,865.9 M809.1,690.3 L809.3,695.5 L809.5,700.8 L809.5,706.0 L809.5,711.2 L809.4,716.4 L809.2,721.7 L808.9,726.9 L808.6,732.1 L808.1,737.3 L807.7,742.5 L807.1,747.7 L806.5,752.9 L805.8,758.1 L805.0,763.3 L804.2,768.5 L803.3,773.7 L802.3,778.8 L801.3,784.0 L800.2,789.2 L799.0,794.3 L797.8,799.5 L796.6,804.6 L795.3,809.8 L793.9,814.9 L792.5,820.0 L791.0,825.2 L789.5,830.3 L788.0,835.4 L786.4,840.5 L784.8,845.6 L783.1,850.6 L781.4,855.7 L779.7,860.8 L778.0,865.8 M812.6,740.2 L812.8,745.4 L812.9,750.7 L813.0,755.9 L813.0,761.1 L812.9,766.3 L812.8,771.6 L812.5,776.8 L812.2,782.0 L811.8,787.2 L811.4,792.4 L810.8,797.6 L810.2,802.8 L809.5,808.0 L808.8,813.2 L807.9,818.4 L807.1,823.6 L806.1,828.8 L805.1,833.9 L804.0,839.1 L802.9,844.3 L801.7,849.4 L800.4,854.6 L799.1,859.7 L797.7,864.9 M816.0,790.1 L816.3,795.4 L816.4,800.6 L816.5,805.8 L816.5,811.0 L816.5,816.3 L816.3,821.5 L816.1,826.7 L815.8,831.9 L815.5,837.1 L815.0,842.3 L814.5,847.5 L813.9,852.7 L813.3,857.9 L812.5,863.1 M819.7,845.3 L819.9,850.5 L820.0,855.7 L820.1,860.9 M698.3,620.5 L698.4,625.3 M704.0,622.8 L703.4,627.5 L702.8,632.3 L702.3,637.1 L701.8,641.9 L701.5,646.7 L701.2,651.5 L700.9,656.3 L700.8,661.0 L700.7,665.8 L700.7,670.6 L700.8,675.4 L700.9,680.1 M717.0,624.6 L715.7,629.4 L714.5,634.3 L713.3,639.1 L712.2,643.9 L711.2,648.8 L710.2,653.6 L709.2,658.4 L708.4,663.2 L707.5,668.0 L706.8,672.8 L706.1,677.6 L705.5,682.4 L704.9,687.2 L704.4,692.0 L704.0,696.8 L703.7,701.6 L703.4,706.4 L703.2,711.1 L703.1,715.9 L703.1,720.7 L703.1,725.5 L703.2,730.2 M735.1,625.7 L733.5,630.6 L731.9,635.6 L730.3,640.5 L728.7,645.4 L727.2,650.3 L725.7,655.2 L724.2,660.0 L722.8,664.9 L721.4,669.8 L720.1,674.6 L718.8,679.5 L717.6,684.3 L716.4,689.2 L715.2,694.0 L714.1,698.8 L713.1,703.7 L712.1,708.5 L711.2,713.3 L710.3,718.1 L709.6,722.9 L708.8,727.7 L708.2,732.5 L707.6,737.3 L707.1,742.1 L706.6,746.9 L706.2,751.7 L705.9,756.4 L705.7,761.2 L705.6,766.0 L705.5,770.8 L705.5,775.5 L705.6,780.3 M755.7,626.0 L754.0,631.0 L752.3,636.0 L750.6,641.0 L748.8,646.0 L747.1,651.0 L745.4,655.9 L743.7,660.9 L742.0,665.9 L740.3,670.8 L738.6,675.7 L736.9,680.7 L735.3,685.6 L733.7,690.5 L732.1,695.4 L730.5,700.3 L729.0,705.2 L727.5,710.1 L726.0,715.0 L724.6,719.8 L723.2,724.7 L721.9,729.6 L720.6,734.4 L719.4,739.2 L718.2,744.1 L717.1,748.9 L716.0,753.7 L715.0,758.6 L714.1,763.4 L713.2,768.2 L712.3,773.0 L711.6,777.8 L710.9,782.6 L710.3,787.4 L709.7,792.2 L709.2,797.0 L708.8,801.7 L708.5,806.5 L708.2,811.3 L708.0,816.1 L707.9,820.9 L707.9,825.6 L707.9,830.4 L708.1,835.2" stroke="#f2f2f2" stroke-width="1.15"/></g>
<path d="M800,648 Q830,642 853,646 L860,804 Q840,812 815,810 Z" fill="url(#gKnSh2)" stroke="none"/><path d="M699.5,653 Q752,644 806.5,648 L819,823 Q765,843 708,834 Z" fill="url(#gKnSh1)" stroke="none"/><path d="M699.5,653 L708,834 M806.5,648 L819,823 M853,646 L860,804" fill="none" stroke-width="2"/>

<!-- ============ under-arm plate ============ -->
<path d="M707.5,635 Q710,628 727,622 L740,612 L760,604.9 L1035,613.5 L1035,616 L992.5,616.7 L934.7,619 L919.6,629 Z" fill="#b6b6b6"/>
<path d="M707.5,635 L919.6,628 L920,640.4 L745,645.5 Q712,647 707.5,641 Z" fill="#e8e8e8"/>
<path d="M745,634 L745,645.5" fill="none" stroke-width=".6"/>
<path d="M919.6,628 L934.7,619 L935.7,631 L920,640.4 Z" fill="#6e6e6e"/>
<path d="M934.7,619 L992.5,616.7 L1007,629 L935.7,631 Z" fill="#e8e8e8"/>
<!-- hex bolt on under-arm -->
<path d="M727.5,612 L746,610 L771,611 L771,627 Q760,631 746,630.5 L728,628 Z" fill="#c4c4c4"/>
<path d="M727.5,612 L746,610 L746,630.5 L728,628 Z" fill="#ececec"/>
<path d="M771,612 L844,611 Q830,621 800,622.5 L771,624 Z" fill="#ececec" stroke-width=".7"/>
<path d="M785,612 L785,623.5 M807,611.5 L807,622" fill="none" stroke-width=".6"/>
<!-- bolt under plate right -->
<path d="M1034,613.5 Q1045,616 1043.5,621 Q1040,624.5 1030,625.5 L1030,613.5 Z" fill="#6e6e6e" stroke-width=".7"/>
<path d="M1008.5,613.3 L1034,613.5 L1034,622 Q1030,626 1008.5,626 Z" fill="#bdbdbd" stroke-width=".7"/>
<path d="M992.5,613 L1008.5,613.3 L1008.5,626 Q996,625 992.5,621 Z" fill="#ededed" stroke-width=".7"/>
<path d="M1007,626 L1030,625.5 L1030,631.5 Q1018,634 1007,632 Z" fill="url(#gHub)" stroke-width=".6"/>

<!-- ============ red gas cylinder ============ -->
<path d="M1143,461 L1413,449 L1419,515 L1149,528.5 Z" fill="url(#gRed)"/>
<path d="M1413,449 L1426,459 L1427,504 L1419,515 Q1408,482 1413,449 Z" fill="url(#gRedCap)" stroke-width=".7"/>
<!-- white base strip under washers -->
<path d="M1441,464.5 L1472,463.5 L1518,465.5 L1536.5,467.5 L1530,469.5 L1518,469.5 L1472,472 L1454,474 L1447,479 L1442,479 Z" fill="#f0f0f0" stroke-width=".7"/>
<!-- bolt top + washer 1 -->
<path d="M1479,445 L1479,453 Q1493,457 1507.5,453 L1507.5,445 Z" fill="url(#gHub)"/>
<ellipse cx="1493.2" cy="445" rx="14.2" ry="2.2" fill="#f4f4f4" stroke-width=".8"/>
<path d="M1479,447.5 Q1493,451 1507.5,447.5 M1479.5,451.5 Q1493,455 1507,451.5" fill="none" stroke-width=".8"/>
<path d="M1480.5,453 L1480.5,459 L1505,459 L1505,453" fill="url(#gHub)" stroke-width=".7"/>
<path d="M1471.5,465 Q1471.5,458.5 1480,458 L1509,458 Q1517.5,458.5 1517.5,465 L1517.5,470 Q1517,476 1494.5,476.5 Q1472,476 1471.5,470 Z" fill="url(#gHub)"/>
<ellipse cx="1493" cy="460" rx="15.5" ry="2.2" fill="#f2f2f2" stroke-width=".8"/>
<path d="M1472,464.5 Q1494,470.5 1517,464.5" fill="none" stroke-width=".7"/>
<!-- washer 2 + nut -->
<path d="M1479.5,499 L1515,498 L1515,518.5 Q1505,522 1493,521.5 L1480.5,520.5 Z" fill="url(#gHub)"/>
<path d="M1479.5,499 L1493,499 L1493,521.5 L1480.5,520.5 Z" fill="#f2f2f2" stroke-width=".8"/>
<path d="M1472.5,484.5 L1519.5,484.5 L1519.5,491 Q1518,497 1496,498 Q1474,497.5 1472.5,491 Z" fill="url(#gHub)"/>
<path d="M1473,490 Q1496,496 1519,490" fill="none" stroke-width=".7"/>
<!-- red hook -->
<path d="M1426,460 L1432,458 L1440,458.5 L1441,490 Q1442,495 1444,495.6 Q1447,495 1447,492 L1447,479 L1454,474 L1472,472 L1489,478 L1518,474 L1530,472 Q1532,476 1531,481 L1518,484.6 L1489,486.6 L1464,487 L1455,490 L1454.6,504 L1429,504.6 Z" fill="#620505"/>
<path d="M1432,458 L1440,458.5 L1441,490 Q1442,495 1444,495.6 L1438,495 Q1435.5,494 1435.5,490 L1435,462 Z" fill="#3a0000" stroke-width=".6"/>
<path d="M1489,478 L1489,486.6" fill="none" stroke="#1c0000" stroke-width=".7"/>
<path d="M1447,479 L1464,478 L1489,478" fill="none" stroke="#1c0000" stroke-width=".6"/>
<path d="M1455,490 L1454.6,504 L1462,498 L1464,487 Z" fill="#4e0202" stroke-width=".5"/>
<!-- ============ clevis plate (right of bracket) ============ -->
<path d="M1136.25,437.5 L1145,446.25 L1150,545 L1146.25,546.25 L1138,470 Z" fill="#c6c6c6"/>
<path d="M1000,433.5 L1021.25,432.5 L1125,428.75 L1136.25,437.5 L1138,470 L1146.25,546.25 L1060,547.5 L1060,527.5 Q1058,500 1035,490 L1000,492 Z" fill="#e6e6e6"/>
<path d="M1125,428.75 L1136.25,437.5 L1138,470 L1125,485 L1045,488 L1035,490" fill="none" stroke-width=".8"/>
<path d="M1125.5,429.5 L1137,439.4 L1137.8,472 L1125.5,484.5 L1131.3,472 L1130.5,441 Z" fill="#8e8e8e" stroke-width=".6"/>
<ellipse cx="1109" cy="463" rx="17.2" ry="18" fill="#d2d2d2"/>
<ellipse cx="1111.5" cy="462.5" rx="14" ry="15.5" fill="#ececec" stroke-width=".8"/>
<ellipse cx="1115" cy="463.5" rx="11" ry="13" fill="#9a9a9a" stroke-width=".8"/>
<ellipse cx="1117" cy="462.5" rx="9" ry="11" fill="#e4e4e4" stroke-width=".7"/>
<ellipse cx="1116.5" cy="460.7" rx="7" ry="8.2" fill="#151d3f" stroke-width=".8"/>
<path d="M1113,466 Q1118,462 1123.4,462.5 A7,8.2 0 0 1 1116.5,468.9 Q1114,468.5 1113,466 Z" fill="#7c1010" stroke="none"/>
<path d="M1110.5,464 A7,8.2 0 0 0 1120,467.8 A9,10 0 0 1 1110.5,464 Z" fill="#cfcfcf" stroke="none"/>
<path d="M1033,529.5 L1060,528 L1060,547.5 L1035,548 Z" fill="#e2e2e2" stroke-width=".6"/><path d="M1040,535.8 h13" stroke="#222" stroke-width="1.2"/>
<path d="M1030,491 L1035,490 Q1058,494 1060,527.5 L1060,528.5 L1032,530 Z" fill="url(#gRedEnd)" stroke-width=".7"/>
<!-- ============ arm ============ -->
<path d="M663.5,454 L670.6,448.8 L867,445.6 L867,446.3 L681.6,454.9 Z" fill="#dcdcdc"/>
<path d="M682,449 Q696,445.5 712,447.3 L712,450.5 Q697,453.5 682,452.5 Z" fill="#ececec" stroke-width=".6"/>
<path d="M688,449.5 L706,448.5 M692,451.5 L703,447.5" fill="none" stroke-width=".5"/>
<path d="M681.6,454.9 L867,446.3 L869.6,486.8 L877.4,493.3 L880,494.5 L683.7,497.8 Z" fill="#e6e6e6"/>
<path d="M663.5,454 L681.6,454.9 L683.7,497.8 L666.1,497.8 Z" fill="url(#gCap)"/>
<!-- bolt stack under arm-left -->
<path d="M676.4,498.4 L723.4,497.6 L723.4,505 Q700,510 676.4,506.5 Z" fill="url(#gHub)"/>
<path d="M677.7,519 L724.7,518 L724.7,524 Q722,529 716,532 L715.7,534.5 L686.7,534.5 L686,532 Q679,528 677.7,524 Z" fill="url(#gHub)"/>
<path d="M677.7,523.5 Q700,529 724.7,523.5 M686,532 Q700,535 716,532" fill="none" stroke-width=".6"/>
<path d="M688.6,534.5 L714.4,534.5 L714.4,540 Q701,543 688.6,540 Z" fill="url(#gHub)" stroke-width=".7"/>
<path d="M688,541 L717,540.5 L717,548 Q702,551.5 688,549 Z" fill="url(#gHub)"/>
<!-- red washer + hook (left) -->
<path d="M664.8,511 Q665,506 680,504.5 L700,505.5 L727,501.5 L732.4,502.3 L735.7,498.4 L763.4,496.5 L764.7,522.9 L757,521.6 L755,510 Q752,505.5 748,507 L744.7,508.7 L740.2,513.9 L723.4,517.7 Q700,520.5 680,519.5 Q664.5,518 664.8,511 Z" fill="#5e0404"/>
<path d="M694.5,506 L694.5,519.5" fill="none" stroke="#220000" stroke-width=".7"/>
<path d="M676.4,503 Q700,508.5 723.4,503" fill="none" stroke-width=".6"/>
<ellipse cx="746" cy="509.5" rx="2.6" ry="1.8" fill="#7a1010" stroke="#220000" stroke-width=".5" transform="rotate(-35 746 509.5)"/>
<!-- rod -->
<path d="M764.6,497.1 L989,483.3 L989,510 L765.3,521.6 Z" fill="url(#gRod)"/>

<!-- ============ handle (rear part, behind bracket) ============ -->
<path d="M772,329 Q751,326 750.5,349 Q752,368 760,372 L900,432 L912,390 Z" fill="url(#gHandle)"/>
<!-- ============ bracket block ============ -->
<path d="M973,363 L979,363 L992,470 L985.5,470 Z" fill="#8c8c8c"/>
<path d="M863,371 L872.5,361 L965.5,356 L973,363 L988,494 L880,494.5 L870,485 Z" fill="#e6e6e6"/>
<path d="M965.5,356 L979,363 L973,363 Z" fill="#6e6e6e" stroke-width=".6"/>
<!-- hole: chamfer ring, inner wall, see-through crescent -->
<ellipse cx="919.5" cy="412.5" rx="39" ry="40" fill="url(#gRing)"/><ellipse cx="919.5" cy="412.5" rx="39" ry="40" fill="url(#gRingW)" stroke="none"/>
<ellipse cx="927.5" cy="418" rx="31.5" ry="33" fill="#f7f7f7" stroke-width=".8"/>
<path d="M905,395 Q912,384 928,385 Q947,389 957,408 L950,414 Z" fill="#131b3e" stroke-width=".7"/>
<!-- pivot washer (behind handle) -->
<ellipse cx="974.7" cy="472.4" rx="15" ry="15" fill="#8c8c8c" stroke-width=".7"/><ellipse cx="976.2" cy="471.2" rx="14.5" ry="14.5" fill="#e4e4e4" stroke-width=".7"/>
<ellipse cx="979" cy="471" rx="11" ry="11.5" fill="#f0f0f0" stroke-width=".6"/><ellipse cx="981.5" cy="470.5" rx="9" ry="9" fill="#a8a8a8" stroke-width=".6"/>
<ellipse cx="983.5" cy="469.5" rx="6.5" ry="6.5" fill="#151d3f" stroke-width=".6"/>
<!-- handle front part (through hole, in front of bracket) -->
<g clip-path="url(#cHole)"><path d="M772,329 Q751,326 750.5,349 Q752,368 760,372 L990,471 L1002,427 Z" fill="url(#gHandle)"/></g>
<path d="M957,409 L1002,429 M897.5,430.5 L990,471" fill="none" stroke="none"/>

<!-- ============ pivot + post ============ -->
<path d="M989,475 L1032,472 L1037.5,585 Q1015,592 993.5,586 Z" fill="url(#gPost)"/>
<path d="M989,475 L1007.5,474 L1007.5,495.5 L989,496.5 Z" fill="#ededed" stroke-width=".8"/>
<path d="M982.5,436 L994,428.5 L994,438 L985,440 Z" fill="#f4f4f4" stroke-width=".7"/>
<path d="M993,423 Q994,419 1007,419 Q1020,419 1021,423 L1021,436 Q1007,441 993,436 Z" fill="url(#gHub)" stroke-width=".8"/>
<path d="M993,426.5 Q1007,430 1021,426.5 M993.5,431 Q1007,435 1020.5,431" fill="none" stroke-width="1"/><ellipse cx="1007" cy="421.3" rx="13.5" ry="2" fill="#f0f0f0" stroke-width=".8"/>
<path d="M992.5,441 Q989.5,455 994,469.5 L1030,470 Q1037,455 1029,439 L1021,437 L1000,438 Z" fill="#ececec"/>
<path d="M1024.5,438 L1029,439 Q1037,455 1030,470 L1025,469.3 Q1032.5,455 1024.5,438 Z" fill="#8a8a8a" stroke-width=".7"/>
<path d="M1001,441.4 L1025,441.4 Q1032.5,455 1025.5,469.3 L1001,469.3 Q993.5,455 1001,441.4 Z" fill="#c6c6c6" stroke-width=".9"/>
<path d="M994,470 Q1008,475 1030,470 L1031,473.5 Q1010,479 991,475 Z" fill="#f2f2f2" stroke-width=".6"/>

</g>
<!-- watermark -->
<g fill="#f08a24" stroke="none" opacity=".92">
<path d="M891,538 L891,516 L893.5,514 L893.5,538 Z M896,538 L896,512 L898.5,510 L898.5,538 Z M901,538 L901,514 L903.5,512.5 L903.5,538 Z M924,538 L924,512.5 L926.5,514 L926.5,538 Z M929,538 L929,510 L931.5,512 L931.5,538 Z M934,538 L934,514 L936.5,516 L936.5,538 Z M891,538 L936.5,538 L936.5,540 L891,540 Z"/>
<path d="M914,509 Q905,516 906,526 Q907,533 913,536 L913,522 L917,520 L917,536 Q923,531 922,524 Q920,530 917,530 Z"/>
<text x="947" y="530" font-family="Liberation Sans, sans-serif" font-size="17" font-weight="bold" textLength="83" lengthAdjust="spacingAndGlyphs">智造资料网</text>
<text x="947.5" y="538" font-family="Liberation Sans, sans-serif" font-size="4.6" font-weight="bold" textLength="81" lengthAdjust="spacingAndGlyphs">INTELLIGENT MANUFACTURING DATA</text>
</g>
<!-- axis triad -->
<g>
<path d="M101.2,943 L119.7,943 L120,967 L102,966.7 Z" fill="#7d9060" stroke="#ffff00" stroke-width="1"/>
<path d="M120,938.4 L137.7,939 L138.6,964.5 L123.6,966.7 L120,967 Z" fill="#5e7397" stroke="#d8d8d8" stroke-width="1"/>
<path d="M120,941.8 L165,934.8" stroke="#00a0a8" stroke-width="2" fill="none"/>
<path d="M162,931.5 L169,934.3 L163,939 Z" fill="#00f0f8"/>
<path d="M120,941.5 L92,941" stroke="#00e000" stroke-width="2.6" fill="none"/>
<path d="M83,940.5 L93,936.5 L93,945 Z" fill="#00c000"/>
<path d="M120.5,942 L121.2,969" stroke="#f00000" stroke-width="2.6" fill="none"/>
<path d="M117.5,967.5 L125,967.5 L121.4,977 Z" fill="#c00000"/>
<circle cx="120" cy="941.8" r="3.8" fill="#8a8a8a"/><circle cx="119" cy="940.8" r="1.5" fill="#c8c8c8"/>
<g stroke="#ff1010" stroke-width="1" fill="none"><path d="M74,936 L77.5,940 L81,936 M77.5,940 L77.5,945"/><path d="M171,928.5 L178,928.5 L171,937 L178,937"/><path d="M118,979 L126,988 M126,979 L118,988"/></g>
</g>

</svg>
<svg width="320" height="180" viewBox="60 109 320 180" style="left:0;top:0"><defs><linearGradient id="vcl" x1="0" y1="0" x2="1" y2="0"><stop offset="0" stop-color="#b8c4dc"/><stop offset=".4" stop-color="#e6ecf8"/><stop offset="1" stop-color="#a8b4cc"/></linearGradient><linearGradient id="vbg" x1="0" y1="0" x2="1" y2="1"><stop offset="0" stop-color="#ffffff"/><stop offset="1" stop-color="#9cc0f4"/></linearGradient><linearGradient id="vcb" x1="0" y1="0" x2="1" y2="0"><stop offset="0" stop-color="#3a68c0"/><stop offset=".45" stop-color="#8ab8f4"/><stop offset="1" stop-color="#2a4f98"/></linearGradient></defs><g transform="translate(64,113)"><rect x="0" y="0" width="24" height="24" fill="#7b7e96"/><rect x="2" y="4" width="20" height="4" fill="#4d6490"/><rect x="2" y="10" width="20" height="4" fill="#4d6490"/><rect x="2" y="16" width="20" height="4" fill="#4d6490"/></g><g transform="translate(92,113)"><rect x="0" y="0" width="24" height="24" fill="#7b7e96"/><rect x="6" y="6" width="12" height="12" fill="url(#vbg)" stroke="#2a2a2a" stroke-width=".8"/><path d="M2.5,2.5 h3.5 M2.5,2.5 v3.5 M2.5,2.5 l3.5,3.5" stroke="#39d026" stroke-width="1.4" fill="none"/><path d="M21.5,2.5 h-3.5 M21.5,2.5 v3.5 M21.5,2.5 l-3.5,3.5" stroke="#39d026" stroke-width="1.4" fill="none"/><path d="M2.5,21.5 h3.5 M2.5,21.5 v-3.5 M2.5,21.5 l3.5,-3.5" stroke="#39d026" stroke-width="1.4" fill="none"/><path d="M21.5,21.5 h-3.5 M21.5,21.5 v-3.5 M21.5,21.5 l-3.5,-3.5" stroke="#39d026" stroke-width="1.4" fill="none"/></g><g transform="translate(120,113)"><rect x="0" y="0" width="24" height="24" fill="#7b7e96"/><path d="M6,9 l-4,2 M6,12 l-4,3 M7,15 l-3,4" stroke="#c8ccd8" stroke-width="1.500"/><path d="M10.1,13.9 l-6,6" stroke="#8a8f98" stroke-width="3" stroke-linecap="round"/><circle cx="14" cy="10" r="6.5" fill="#cfe2f6" stroke="#8c97a8" stroke-width="1.6"/><circle cx="14.5" cy="10.5" r="3.575" fill="#a9cdf0" opacity=".7"/><path d="M9,16 l-4,5" stroke="#b0b4bc" stroke-width="3" stroke-linecap="round"/></g><g transform="translate(148,113)"><rect x="0" y="0" width="24" height="24" fill="#7b7e96"/><path d="M2,14 l10,-6 l10,6 l-10,6z" fill="none" stroke="#555a70" stroke-width=".8"/><path d="M11,14 v-10" stroke="#2060f0" stroke-width="1.800"/><path d="M11,1.500 l-3,4.500 h6z" fill="#2060f0"/><path d="M11,14 l8,-5" stroke="#39d026" stroke-width="1.800"/><path d="M21.500,7.500 l-5,0.500 l2.500,4z" fill="#39d026"/><path d="M11,14 l8,5" stroke="#e82020" stroke-width="1.800"/><path d="M21.500,20.500 l-5,-0.500 l2.500,-4z" fill="#e82020"/><circle cx="11" cy="14" r="2" fill="#e8e8e8" stroke="#555" stroke-width=".5"/></g><g transform="translate(176,113)"><rect x="0" y="0" width="24" height="24" fill="#7b7e96"/><path d="M12.3,3.3 L12.3,12.5 M3.7,15.8 L12.3,12.5 L21.5,15" fill="none" stroke="#000" stroke-width="1.5" stroke-linejoin="round" stroke-linecap="round"/><polygon points="3.7,7.2 12.3,3.3 22,6.2 13.2,10.5" fill="#34d634"/><path d="M3.7,7.2 L12.3,3.3 L22,6.2 L13.2,10.5Z M3.7,7.2 V15.8 L12.8,21.2 L21.5,15 L22,6.2 M13.2,10.5 L12.8,21.2" fill="none" stroke="#000" stroke-width="1.5" stroke-linejoin="round" stroke-linecap="round"/></g><g transform="translate(204,113)"><rect x="0" y="0" width="24" height="24" fill="#7b7e96"/><path d="M12.3,3.3 L12.3,12.5 M3.7,15.8 L12.3,12.5 L21.5,15" fill="none" stroke="#000" stroke-width="1.5" stroke-linejoin="round" stroke-linecap="round"/><polygon points="3.7,15.8 12.3,12.5 21.5,15 12.8,21.2" fill="#2cc82c"/><path d="M3.7,7.2 L12.3,3.3 L22,6.2 L13.2,10.5Z M3.7,7.2 V15.8 L12.8,21.2 L21.5,15 L22,6.2 M13.2,10.5 L12.8,21.2" fill="none" stroke="#000" stroke-width="1.5" stroke-linejoin="round" stroke-linecap="round"/></g><g transform="translate(232,113)"><rect x="0" y="0" width="24" height="24" fill="#7b7e96"/><path d="M12.3,3.3 L12.3,12.5 M3.7,15.8 L12.3,12.5 L21.5,15" fill="none" stroke="#000" stroke-width="1.5" stroke-linejoin="round" stroke-linecap="round"/><polygon points="3.7,7.2 12.3,3.3 12.3,12.5 3.7,15.8" fill="#2cc42c"/><path d="M3.7,7.2 L12.3,3.3 L22,6.2 L13.2,10.5Z M3.7,7.2 V15.8 L12.8,21.2 L21.5,15 L22,6.2 M13.2,10.5 L12.8,21.2" fill="none" stroke="#000" stroke-width="1.5" stroke-linejoin="round" stroke-linecap="round"/></g><g transform="translate(260,113)"><rect x="0" y="0" width="24" height="24" fill="#7b7e96"/><path d="M12.3,3.3 L12.3,12.5 M3.7,15.8 L12.3,12.5 L21.5,15" fill="none" stroke="#000" stroke-width="1.5" stroke-linejoin="round" stroke-linecap="round"/><polygon points="13.2,10.5 22,6.2 21.5,15 12.8,21.2" fill="#34d234"/><path d="M3.7,7.2 L12.3,3.3 L22,6.2 L13.2,10.5Z M3.7,7.2 V15.8 L12.8,21.2 L21.5,15 L22,6.2 M13.2,10.5 L12.8,21.2" fill="none" stroke="#000" stroke-width="1.5" stroke-linejoin="round" stroke-linecap="round"/></g><g transform="translate(288,113)"><rect x="0" y="0" width="24" height="24" fill="#7b7e96"/><path d="M12.3,3.3 L12.3,12.5 M3.7,15.8 L12.3,12.5 L21.5,15" fill="none" stroke="#000" stroke-width="1.5" stroke-linejoin="round" stroke-linecap="round"/><polygon points="3.7,7.2 13.2,10.5 12.8,21.2 3.7,15.8" fill="#30cc30"/><path d="M3.7,7.2 L12.3,3.3 L22,6.2 L13.2,10.5Z M3.7,7.2 V15.8 L12.8,21.2 L21.5,15 L22,6.2 M13.2,10.5 L12.8,21.2" fill="none" stroke="#000" stroke-width="1.5" stroke-linejoin="round" stroke-linecap="round"/></g><g transform="translate(316,113)"><rect x="0" y="0" width="24" height="24" fill="#7b7e96"/><path d="M12.3,3.3 L12.3,12.5 M3.7,15.8 L12.3,12.5 L21.5,15" fill="none" stroke="#000" stroke-width="1.5" stroke-linejoin="round" stroke-linecap="round"/><polygon points="12.3,3.3 22,6.2 21.5,15 12.3,12.5" fill="#2cc42c"/><path d="M3.7,7.2 L12.3,3.3 L22,6.2 L13.2,10.5Z M3.7,7.2 V15.8 L12.8,21.2 L21.5,15 L22,6.2 M13.2,10.5 L12.8,21.2" fill="none" stroke="#000" stroke-width="1.5" stroke-linejoin="round" stroke-linecap="round"/></g><g transform="translate(344,113)"><rect x="0" y="0" width="24" height="24" fill="#7b7e96"/><polygon points="3,7.5 12.3,3.3 22,6.5 13,11" fill="#58e458"/><polygon points="3,7.5 13,11 12.8,21.5 3.5,16" fill="#2fc42f"/><polygon points="13,11 22,6.5 21.5,15.5 12.8,21.5" fill="#23a823"/><path d="M3,7.5 L12.3,3.3 L22,6.5 L13,11Z M3,7.5 L3.5,16 L12.800,21.500 L21.500,15.500 L22,6.500 M13,11 L12.800,21.500" fill="none" stroke="#1c8a1c" stroke-width=".7"/></g><g transform="translate(64,141)"><rect x="0" y="0" width="24" height="24" fill="#7b7e96"/><path d="M8.300,6.500 v12 a5.200,2.300 0 0 0 10.400,0 v-12" fill="none" stroke="#16161e" stroke-width="1.100"/><ellipse cx="13.500" cy="6.500" rx="5.200" ry="2.300" fill="none" stroke="#16161e" stroke-width="1.100"/><path d="M8.300,18.500 a5.200,2.300 0 0 1 10.400,0" fill="none" stroke="#16161e" stroke-width=".6"/></g><g transform="translate(64,169)"><rect x="0" y="0" width="24" height="24" fill="#7b7e96"/><path d="M8.300,6.500 v12 a5.200,2.300 0 0 0 10.400,0 v-12" fill="none" stroke="#16161e" stroke-width="1.100"/><ellipse cx="13.500" cy="6.500" rx="5.200" ry="2.300" fill="none" stroke="#16161e" stroke-width="1.100"/></g><g transform="translate(64,197)"><rect x="0.500" y="0.500" width="23" height="23" fill="#958a5c" stroke="#ecca60" stroke-width="1.200"/><path d="M8.300,6.500 v12 a5.200,2.300 0 0 0 10.400,0 v-12" fill="url(#vcb)" stroke="#10182c" stroke-width="1.100"/><ellipse cx="13.500" cy="6.500" rx="5.200" ry="2.300" fill="#5a8ae0" stroke="#10182c" stroke-width="1.100"/></g><g transform="translate(64,225)"><rect x="0" y="0" width="24" height="24" fill="#7b7e96"/><ellipse cx="15" cy="21" rx="6" ry="1.500" fill="#333" opacity=".4"/><path d="M8.300,6.500 v12 a5.200,2.300 0 0 0 10.400,0 v-12" fill="url(#vcl)" stroke="#7c859c" stroke-width="1.100"/><ellipse cx="13.500" cy="6.500" rx="5.200" ry="2.300" fill="#eef2fb" stroke="#7c859c" stroke-width="1.100"/></g><g transform="translate(64,253)"><rect x="0" y="0" width="24" height="24" fill="#7b7e96"/><path d="M8.300,6.500 v12 a5.200,2.300 0 0 0 10.400,0 v-12" fill="none" stroke="#16161e" stroke-width="1.100"/><ellipse cx="13.500" cy="6.500" rx="5.200" ry="2.300" fill="none" stroke="#16161e" stroke-width="1.100"/><path d="M9.500,8 l3,12 M12.500,8.500 l3,12 M15.500,8.500 l-3,12 M18.300,8 l-3,12" stroke="#16161e" stroke-width=".7" fill="none"/></g></svg>
</div>

<!-- ===== title bar ===== -->
<div id="titlebar">
<svg width="330" height="23" style="left:0;top:0"><defs><linearGradient id="tdoc" x1="0" y1="0" x2="1" y2="1"><stop offset="0" stop-color="#fff"/><stop offset="1" stop-color="#c4d4f0"/></linearGradient></defs><g transform="translate(2,3)"><rect x="0" y="0" width="16" height="16" fill="#6ab82e"/><rect x="0.500" y="0.500" width="15" height="15" fill="none" stroke="#8ad048"/><path d="M3.500,4 l3.500,9.500 h2 l3.500,-9.500 h-2.400 l-2.100,6.500 l-2.100,-6.500z" fill="#fff"/><circle cx="5.500" cy="2.800" r="1" fill="#fff"/></g><rect x="20" y="4" width="1" height="14" fill="#c8c8c8"/><g transform="translate(33,3)"><path d="M1,0.500 h8 l4,4 v11.500 h-12z" fill="url(#tdoc)" stroke="#111" stroke-width="1.200"/><path d="M9,0.500 v4 h4" fill="#fff" stroke="#111" stroke-width=".8"/></g><g transform="translate(55,3)"><path d="M1,6 h6 l1,1.500 h8 v8 h-15z" fill="#f0c860" stroke="#a87c20" stroke-width=".7"/><path d="M0,16 l3,-7 h14 l-3,7z" fill="#f8dc88" stroke="#a87c20" stroke-width=".7"/><path d="M5,6 q1,-5 8,-4 l0,-2 l5,4 l-5,4 l0,-2 q-4,-1 -5,2z" fill="#3fbf2a" stroke="#1c7a10" stroke-width=".5"/></g><g transform="translate(79,3)"><path d="M0,1 h4 l1,1 h5 v5 h-10z M0,9 h4 l1,1 h5 v5 h-10z" fill="#f4d070" stroke="#a87c20" stroke-width=".6"/><path d="M9,3 h5 l3,3 v10 h-8z" fill="#e4ecfa" stroke="#444" stroke-width=".8"/><path d="M10,1 h4 M10,15 v-12" stroke="#3fbf2a" stroke-width="1"/></g><g transform="translate(103,3)"><g transform="translate(0,0)"><rect x="0" y="0" width="16" height="16" rx="1" fill="#2f5fb8" stroke="#183a80" stroke-width=".8"/><rect x="2.500" y="1" width="11" height="7.500" fill="#f4f4f4"/><path d="M3,2.500 h10 M3,4.500 h10 M3,6.500 h10" stroke="#e04040" stroke-width=".9"/><rect x="4" y="10.500" width="8" height="5" fill="#c8d0e0"/><rect x="5" y="11.500" width="2.500" height="3.500" fill="#183a80"/></g></g><g transform="translate(127,3)"><g transform="translate(6,0) scale(.72)"><g transform="translate(0,0)"><rect x="0" y="0" width="16" height="16" rx="1" fill="#2f5fb8" stroke="#183a80" stroke-width=".8"/><rect x="2.500" y="1" width="11" height="7.500" fill="#f4f4f4"/><path d="M3,2.500 h10 M3,4.500 h10 M3,6.500 h10" stroke="#e04040" stroke-width=".9"/><rect x="4" y="10.500" width="8" height="5" fill="#c8d0e0"/><rect x="5" y="11.500" width="2.500" height="3.500" fill="#183a80"/></g></g><g transform="translate(0,5) scale(.72)"><g transform="translate(0,0)"><rect x="0" y="0" width="16" height="16" rx="1" fill="#2f5fb8" stroke="#183a80" stroke-width=".8"/><rect x="2.500" y="1" width="11" height="7.500" fill="#f4f4f4"/><path d="M3,2.500 h10 M3,4.500 h10 M3,6.500 h10" stroke="#e04040" stroke-width=".9"/><rect x="4" y="10.500" width="8" height="5" fill="#c8d0e0"/><rect x="5" y="11.500" width="2.500" height="3.500" fill="#183a80"/></g></g></g><g transform="translate(150,3)"><g transform="translate(0,-1) scale(.66)"><g transform="translate(0,0)"><rect x="0" y="0" width="16" height="16" rx="1" fill="#2f5fb8" stroke="#183a80" stroke-width=".8"/><rect x="2.500" y="1" width="11" height="7.500" fill="#f4f4f4"/><path d="M3,2.500 h10 M3,4.500 h10 M3,6.500 h10" stroke="#e04040" stroke-width=".9"/><rect x="4" y="10.500" width="8" height="5" fill="#c8d0e0"/><rect x="5" y="11.500" width="2.500" height="3.500" fill="#183a80"/></g></g><g transform="translate(7,7)"><path d="M0,2.500 l5,-2.500 l5,2.500 l-5,2.500z" fill="#b0b0b0" stroke="#333" stroke-width=".5"/><path d="M0,2.500 l5,2.500 v6 l-5,-2.500z" fill="#7a7a7a" stroke="#333" stroke-width=".5"/><path d="M5,5 l5,-2.500 v6 l-5,2.500z" fill="#4a4a4a" stroke="#333" stroke-width=".5"/></g><path d="M12,2 q3,-2 5,1 l1,-1 l0,4 l-4,0 l1,-1.500 q-1,-1.500 -3,-0.500z" fill="#3fbf2a"/></g><g transform="translate(175,3)"><rect x="3" y="0" width="11" height="8" fill="#e8f0fa" stroke="#667"/><path d="M8.500,1 l3.500,3.500 h-2 v2.500 h-3 v-2.500 h-2z" fill="#2fc01c"/><path d="M0,8 h17 v6 h-17z" fill="#e0e0e0" stroke="#777" stroke-width=".8"/><rect x="1" y="13" width="15" height="3" fill="#b8b8b8" stroke="#777" stroke-width=".6"/></g><g transform="translate(198,3)"><circle cx="9" cy="8" r="9" fill="#5a8a2a"/><circle cx="8" cy="7" r="5.500" fill="#cfe2f6" stroke="#8fa8c0" stroke-width="1.400"/><path d="M12,11 l5,5" stroke="#9aa4b0" stroke-width="2.600" stroke-linecap="round"/><path d="M8,4 v3.500" stroke="#6a9ad0" stroke-width="1"/></g><g transform="translate(224,3)"><path d="M0,7 l7,-6 v3.500 q9,0 8,11 q-2,-6 -8,-5.500 v3.500z" fill="#a8a8a8" stroke="#888" stroke-width=".6"/></g><g transform="translate(247,3)"><path d="M16,7 l-7,-6 v3.500 q-9,0 -8,11 q2,-6 8,-5.500 v3.500z" fill="#a8a8a8" stroke="#888" stroke-width=".6"/></g><g transform="translate(270,3)"><path d="M4,7 l7,-6 v3.500 q9,0 8,11 q-2,-6 -8,-5.500 v3.500z" fill="#4a86e0" stroke="#2a5ab0" stroke-width=".6"/><path d="M1,9 h6 l-2.200,3.500 l2.200,3.500 h-6 l2.200,-3.500z" fill="#d8b060" stroke="#6a4a10" stroke-width=".6"/></g><path d="M294,9 h7 M295,11 h5 l-2.500,3z" stroke="#111" stroke-width="1" fill="#111"/><rect x="312" y="4" width="1" height="14" fill="#c8c8c8"/></svg>
<div id="title">VISI 2018 R2 from Vero Software x64 - </div><div id="title2">撕胶机.wkf - [动态的]</div>
<svg width="140" height="23" viewBox="1780 0 140 23" style="left:1780px;top:0"><path d="M1799,10.500 h10" stroke="#000" stroke-width="1"/><path d="M1844.500,7.500 h7 v7 h-7z M1846.500,7.500 v-2 h7 v7 h-2" fill="none" stroke="#000" stroke-width="1"/><path d="M1890,5 l10,10 M1900,5 l-10,10" stroke="#000" stroke-width="1.100"/></svg>
</div>

<!-- ===== menu bar ===== -->
<div id="menubar">
<span style="left:7px">文件</span><span style="left:45px">编辑</span><span style="left:83px">线架构</span><span style="left:133px">网格</span><span style="left:171px">曲面</span><span style="left:209px">实体编辑</span><span style="left:271px">建模</span><span style="left:309px">分析</span><span style="left:347px">电极</span><span style="left:385px">尺寸标注</span><span style="left:447px">工程图</span><span style="left:497px">系统</span><span style="left:535px">视窗</span><span style="left:573px">加工</span><span style="left:611px">塑模</span><span style="left:649px">冲模</span><span style="left:687px">标准件</span><span style="left:737px">模流分析</span><span style="left:799px">?</span>
<svg width="60" height="20" viewBox="1860 23 60 20" style="left:1860px;top:0"><g stroke="#8c8c8c" stroke-width="1" fill="none"><path d="M1870,37.500 h9"/><path d="M1888.500,30.500 h6 v6 h-6z M1890.500,30.500 v-2 h6 v6 h-2"/><path d="M1906,28.500 l8,8 M1914,28.500 l-8,8"/></g></svg>
</div>

<div id="strip"></div><div id="strip2"></div>

<!-- ===== tabs ===== -->
<div id="tabs">
<div style="left:1px;width:18px"><i style="left:4px;top:8px;border:4px solid transparent;border-top:5px solid #000;border-bottom:none"></i></div>
<div style="left:19px;width:34px">编辑</div>
<div class="sel" style="left:52px;width:35px">标准</div>
<div style="left:87px;width:46px">线架构</div>
<div style="left:133px;width:34px">建模</div>
<div style="left:167px;width:34px">曲面</div>
<div style="left:201px;width:34px">尺寸</div>
<div style="left:235px;width:34px">应用</div>
<div style="left:269px;width:34px">塑膜</div>
<div style="left:303px;width:34px">冲模</div>
<div style="left:337px;width:34px">加工</div>
<div style="left:371px;width:34px">模流</div>
</div>

<!-- ===== toolbar ===== -->
<div id="toolbar">
<i class="grip" style="left:1px"></i><i class="grip" style="left:252px"></i><i class="grip" style="left:582px"></i><i class="grip" style="left:860px"></i><i class="grip" style="left:1032px"></i><i class="grip" style="left:1126px"></i>
<span class="glabel" style="left:124px">属性/过滤器</span>
<span class="glabel" style="left:415px">图形</span>
<span class="glabel" style="left:718px">图像 (进阶)</span>
<span class="glabel" style="left:943px">视图</span>
<span class="glabel" style="left:1077px">工作平面</span>
<span class="glabel" style="left:1211px">系统</span>
<svg width="1908" height="44" viewBox="12 64 1908 44" style="left:0;top:0"><defs><linearGradient id="icyl" x1="0" y1="0" x2="1" y2="0"><stop offset="0" stop-color="#2458b8"/><stop offset=".45" stop-color="#7ab0f4"/><stop offset="1" stop-color="#1a3f98"/></linearGradient><linearGradient id="icylg" x1="0" y1="0" x2="1" y2="0"><stop offset="0" stop-color="#5a6888"/><stop offset=".45" stop-color="#c0cce4"/><stop offset="1" stop-color="#485878"/></linearGradient></defs><g transform="translate(23,69)"><path d="M1,3 h11 l2,2 h-11z M1,6 h11 l2,2 h-11z M1,9 h11 l2,2 h-11z" fill="#8fa0d8" stroke="#5a68a0" stroke-width=".5"/><ellipse cx="10" cy="14.5" rx="7" ry="4.5" fill="#c89a6a" stroke="#6a4a2a" stroke-width=".7"/><circle cx="6.5" cy="15" r="1.7" fill="#2050e0"/><circle cx="10.5" cy="16.3" r="1.7" fill="#20b020"/><circle cx="13.5" cy="14" r="1.7" fill="#e02020"/><path d="M19,1 l-7,10" stroke="#9a5a20" stroke-width="1.6"/><path d="M12.5,10 l-2,3.5 l3,-2z" fill="#444"/></g><g transform="translate(49,69)"><path d="M6,3 h7 l3,3 v8 h-10z" fill="#dfe8f8" stroke="#222" stroke-width=".9"/><path d="M2,6 h7 l3,3 v7 h-10z" fill="#cfdcf4" stroke="#222" stroke-width=".9"/><g transform="translate(0,9)"><path d="M0.500,7 Q10,-3.500 19.500,6" stroke="#2e3448" stroke-width="2" fill="none"/><path d="M1,7.200 Q10,0.500 19,6.600 Q10,12 1,7.200Z" fill="#dde4f0" stroke="#6b7690" stroke-width=".5"/><circle cx="10" cy="6.300" r="3.200" fill="#4d6aa8"/><circle cx="10" cy="6.300" r="1.500" fill="#16224a"/></g></g><g transform="translate(75,69)"><g transform="translate(0,0)"><path d="M0.5,6.5 Q10,-3 19.5,5.5" stroke="#4a4e62" stroke-width="1.7" fill="none"/><path d="M3,2.5 l-1,-1.500 M6,1 l-0.500,-1.500 M14,1 l0.500,-1.500 M17,2.500 l1,-1.500" stroke="#4a4e62" stroke-width=".8"/><path d="M1,7 Q10,0.5 19,6.4 Q10,11.500 1,7Z" fill="#cdd6e8" stroke="#7c86a0" stroke-width=".5"/><circle cx="10" cy="6" r="3.4" fill="#5a74a8"/><circle cx="10" cy="6" r="1.6" fill="#1c2a50"/><circle cx="8.8" cy="5" r=".8" fill="#fff"/></g><path d="M1,13.5 h7 M4.5,10 v7" stroke="#35c01c" stroke-width="2.4" fill="none"/><path d="M11,12 q5,-4 7,1 q0,4 -5,5" stroke="#2f6fd0" stroke-width="1.8" fill="none"/><path d="M10,10 l4,-1 l-1,4z" fill="#2f6fd0"/></g><g transform="translate(101,69)"><g transform="translate(0,0)"><path d="M0.5,6.5 Q10,-3 19.5,5.5" stroke="#4a4e62" stroke-width="1.7" fill="none"/><path d="M3,2.5 l-1,-1.500 M6,1 l-0.500,-1.500 M14,1 l0.500,-1.500 M17,2.500 l1,-1.500" stroke="#4a4e62" stroke-width=".8"/><path d="M1,7 Q10,0.5 19,6.4 Q10,11.500 1,7Z" fill="#cdd6e8" stroke="#7c86a0" stroke-width=".5"/><circle cx="10" cy="6" r="3.4" fill="#5a74a8"/><circle cx="10" cy="6" r="1.6" fill="#1c2a50"/><circle cx="8.8" cy="5" r=".8" fill="#fff"/></g><path d="M1,14 h8" stroke="#e6d800" stroke-width="2.4" fill="none"/><path d="M11,12 q5,-4 7,1 q0,4 -5,5" stroke="#2f6fd0" stroke-width="1.8" fill="none"/><path d="M10,10 l4,-1 l-1,4z" fill="#2f6fd0"/></g><g transform="translate(127,69)"><g transform="translate(0,-1)"><path d="M0.5,6.5 Q10,-3 19.5,5.5" stroke="#4a4e62" stroke-width="1.7" fill="none"/><path d="M3,2.5 l-1,-1.500 M6,1 l-0.500,-1.500 M14,1 l0.500,-1.500 M17,2.500 l1,-1.500" stroke="#4a4e62" stroke-width=".8"/><path d="M1,7 Q10,0.5 19,6.4 Q10,11.500 1,7Z" fill="#cdd6e8" stroke="#7c86a0" stroke-width=".5"/><circle cx="10" cy="6" r="3.4" fill="#5a74a8"/><circle cx="10" cy="6" r="1.6" fill="#1c2a50"/><circle cx="8.8" cy="5" r=".8" fill="#fff"/></g><rect x="2.5" y="7" width="6" height="12" rx="1.5" fill="#111"/><circle cx="5.5" cy="10.2" r="2.2" fill="#f4c400"/><circle cx="5.5" cy="15.8" r="2.2" fill="#1fd11f"/><rect x="11.5" y="7" width="6" height="12" rx="1.5" fill="#111"/><circle cx="14.5" cy="10.2" r="2.2" fill="#e81010"/><circle cx="14.5" cy="15.8" r="2.2" fill="#f4c400"/></g><g transform="translate(153,69)"><g transform="translate(0,-1)"><path d="M0.5,6.5 Q10,-3 19.5,5.5" stroke="#4a4e62" stroke-width="1.7" fill="none"/><path d="M3,2.5 l-1,-1.500 M6,1 l-0.500,-1.500 M14,1 l0.500,-1.500 M17,2.500 l1,-1.500" stroke="#4a4e62" stroke-width=".8"/><path d="M1,7 Q10,0.5 19,6.4 Q10,11.500 1,7Z" fill="#cdd6e8" stroke="#7c86a0" stroke-width=".5"/><circle cx="10" cy="6" r="3.4" fill="#5a74a8"/><circle cx="10" cy="6" r="1.6" fill="#1c2a50"/><circle cx="8.8" cy="5" r=".8" fill="#fff"/></g><path d="M3,13 q6,-6 12,-1 l2,-2 l0,6 l-6,0 l2,-2 q-4,-3 -8,1z" fill="#3fbf2a" stroke="#2a8a1a" stroke-width=".5"/><path d="M17,15 q-6,6 -12,1 l-2,2 l0,-6 l6,0 l-2,2 q4,3 8,-1z" fill="#e8d820" stroke="#a89a10" stroke-width=".5"/></g><g transform="translate(179,69)"><g transform="translate(0,-1)"><path d="M0.5,6.5 Q10,-3 19.5,5.5" stroke="#4a4e62" stroke-width="1.7" fill="none"/><path d="M3,2.5 l-1,-1.500 M6,1 l-0.500,-1.500 M14,1 l0.500,-1.500 M17,2.500 l1,-1.500" stroke="#4a4e62" stroke-width=".8"/><path d="M1,7 Q10,0.5 19,6.4 Q10,11.500 1,7Z" fill="#cdd6e8" stroke="#7c86a0" stroke-width=".5"/><circle cx="10" cy="6" r="3.4" fill="#5a74a8"/><circle cx="10" cy="6" r="1.6" fill="#1c2a50"/><circle cx="8.8" cy="5" r=".8" fill="#fff"/></g><path d="M1,11.0 h6 M4.0,8 v6" stroke="#35c01c" stroke-width="2.2" fill="none"/><path d="M6,17 l5,-7" stroke="#222" stroke-width="1.2"/><path d="M10,17 h7" stroke="#e6d800" stroke-width="2.2" fill="none"/></g><g transform="translate(205,69)"><g transform="translate(0,0)"><path d="M0.5,6.5 Q10,-3 19.5,5.5" stroke="#4a4e62" stroke-width="1.7" fill="none"/><path d="M3,2.5 l-1,-1.500 M6,1 l-0.500,-1.500 M14,1 l0.500,-1.500 M17,2.500 l1,-1.500" stroke="#4a4e62" stroke-width=".8"/><path d="M1,7 Q10,0.5 19,6.4 Q10,11.500 1,7Z" fill="#cdd6e8" stroke="#7c86a0" stroke-width=".5"/><circle cx="10" cy="6" r="3.4" fill="#5a74a8"/><circle cx="10" cy="6" r="1.6" fill="#1c2a50"/><circle cx="8.8" cy="5" r=".8" fill="#fff"/></g><path d="M6,13.5 h9 M10.5,9 v9" stroke="#35c01c" stroke-width="2.8" fill="none"/></g><g transform="translate(231,69)"><g transform="translate(0,0)"><path d="M0.5,6.5 Q10,-3 19.5,5.5" stroke="#4a4e62" stroke-width="1.7" fill="none"/><path d="M3,2.5 l-1,-1.500 M6,1 l-0.500,-1.500 M14,1 l0.500,-1.500 M17,2.500 l1,-1.500" stroke="#4a4e62" stroke-width=".8"/><path d="M1,7 Q10,0.5 19,6.4 Q10,11.500 1,7Z" fill="#cdd6e8" stroke="#7c86a0" stroke-width=".5"/><circle cx="10" cy="6" r="3.4" fill="#5a74a8"/><circle cx="10" cy="6" r="1.6" fill="#1c2a50"/><circle cx="8.8" cy="5" r=".8" fill="#fff"/></g><path d="M6,14 h9" stroke="#e6d800" stroke-width="2.8" fill="none"/></g><g transform="translate(273,69)"><path d="M3,9 q1,-7 9,-6 l0,-2.500 l6,5 l-6,4.500 l0,-2.500 q-5,-1 -5,3z" fill="#5b9be0" stroke="#2c64b0" stroke-width=".6"/><path d="M17,11 q-1,7 -9,6 l0,2.500 l-6,-5 l6,-4.500 l0,2.500 q5,1 5,-3z" fill="#7fb4ee" stroke="#2c64b0" stroke-width=".6"/></g><g transform="translate(300,69)"><path d="M4,4.1 v11.8 a6.0,2.6 0 0 0 12,0 v-11.8" fill="#eef1f8" fill-opacity=".6" stroke="#222" stroke-width="1.1"/><ellipse cx="10.0" cy="4.1" rx="6.0" ry="2.6" fill="#f4f6fb" stroke="#222" stroke-width="1.1"/><path d="M4,15.9 a6.0,2.6 0 0 1 12,0" fill="none" stroke="#222" stroke-width=".6" opacity=".6"/></g><g transform="translate(326,69)"><path d="M4,4.1 v11.8 a6.0,2.6 0 0 0 12,0 v-11.8" fill="#eef1f8" fill-opacity=".6" stroke="#333" stroke-width="1.1"/><ellipse cx="10.0" cy="4.1" rx="6.0" ry="2.6" fill="#f4f6fb" stroke="#333" stroke-width="1.1"/><path d="M4,15.9 a6.0,2.6 0 0 1 12,0" fill="none" stroke="#333" stroke-width=".6" opacity=".6"/></g><g transform="translate(352,69)"><path d="M4,4.1 v11.8 a6.0,2.6 0 0 0 12,0 v-11.8" fill="#eef1f8" fill-opacity=".6" stroke="#444" stroke-width="1.1"/><ellipse cx="10.0" cy="4.1" rx="6.0" ry="2.6" fill="#f4f6fb" stroke="#444" stroke-width="1.1"/><path d="M4,15.9 a6.0,2.6 0 0 1 12,0" fill="none" stroke="#444" stroke-width=".6" opacity=".6"/></g><g transform="translate(379,69)"><ellipse cx="13" cy="18" rx="6" ry="1.600" fill="#777" opacity=".5"/><path d="M4,4.1 v11.8 a6.0,2.6 0 0 0 12,0 v-11.8 Z" fill="url(#icyl)" stroke="#18e0f0" stroke-width="1.4"/><ellipse cx="10.0" cy="4.1" rx="6.0" ry="2.6" fill="#5aa0f0" stroke="#18e0f0" stroke-width="1.4"/></g><rect x="401.500" y="66.500" width="23" height="23" fill="#fde28a" stroke="#e4c160"/><g transform="translate(404,69)"><ellipse cx="13" cy="18" rx="6" ry="1.600" fill="#555" opacity=".5"/><path d="M4,4.1 v11.8 a6.0,2.6 0 0 0 12,0 v-11.8 Z" fill="url(#icyl)" stroke="#101828" stroke-width="1.3"/><ellipse cx="10.0" cy="4.1" rx="6.0" ry="2.6" fill="#4a80d0" stroke="#101828" stroke-width="1.3"/></g><g transform="translate(430,69)"><ellipse cx="13" cy="18" rx="6" ry="1.600" fill="#777" opacity=".4"/><path d="M4,4.1 v11.8 a6.0,2.6 0 0 0 12,0 v-11.8 Z" fill="#dbe6f6" stroke="#28e0ee" stroke-width="1.3"/><ellipse cx="10.0" cy="4.1" rx="6.0" ry="2.6" fill="#eef4fc" stroke="#28e0ee" stroke-width="1.3"/></g><g transform="translate(456,69)"><ellipse cx="13" cy="18" rx="6" ry="1.600" fill="#777" opacity=".4"/><path d="M4,4.1 v11.8 a6.0,2.6 0 0 0 12,0 v-11.8 Z" fill="#c6d4ec" stroke="#7a86a0" stroke-width="1.1"/><ellipse cx="10.0" cy="4.1" rx="6.0" ry="2.6" fill="#e6ecf8" stroke="#7a86a0" stroke-width="1.1"/></g><g transform="translate(482,69)"><path d="M4,4.1 v11.8 a6.0,2.6 0 0 0 12,0 v-11.8" fill="#eef1f8" fill-opacity=".6" stroke="#333" stroke-width="1.1"/><ellipse cx="10.0" cy="4.1" rx="6.0" ry="2.6" fill="#f4f6fb" stroke="#333" stroke-width="1.1"/><path d="M4,15.9 a6.0,2.6 0 0 1 12,0" fill="none" stroke="#333" stroke-width=".6" opacity=".6"/><path d="M5,5 l3,12 M8,4.500 l4,13 M11,5 l-3,12 M15,5 l-3,12 M5,17 l4,-6 l4,6" stroke="#333" stroke-width=".7" fill="none"/></g><g transform="translate(508,69)"><path d="M1,2.6 v7.8 a4.5,2.6 0 0 0 9,0 v-7.8" fill="#eef1f8" fill-opacity=".6" stroke="#666" stroke-width="1.1"/><ellipse cx="5.5" cy="2.6" rx="4.5" ry="2.6" fill="#f4f6fb" stroke="#666" stroke-width="1.1"/><path d="M1,10.4 a4.5,2.6 0 0 1 9,0" fill="none" stroke="#666" stroke-width=".6" opacity=".6"/><path d="M9,8.6 v7.8 a5.0,2.6 0 0 0 10,0 v-7.8 Z" fill="url(#icyl)" stroke="#1a2a50" stroke-width="0.9"/><ellipse cx="14.0" cy="8.6" rx="5.0" ry="2.6" fill="#5a90e0" stroke="#1a2a50" stroke-width="0.9"/><path d="M11,0 l5,1 l-2,4z M3,19 l5,-0.500 l-3,-4z" fill="#2fc01c"/></g><g transform="translate(534,69)"><path d="M1,3.6 v9.8 a5.5,2.6 0 0 0 11,0 v-9.8 Z" fill="url(#icyl)" stroke="#1a2a50" stroke-width="0.9"/><ellipse cx="6.5" cy="3.6" rx="5.5" ry="2.6" fill="#5a90e0" stroke="#1a2a50" stroke-width="0.9"/><path d="M9,10 q6,-3 8,2 l2,-1 l-1,5 l-5,-1 l2,-1 q-2,-3 -6,-1z" fill="#5b9be0" stroke="#2c64b0" stroke-width=".5"/><path d="M10,18 q5,2 8,-2" stroke="#5b9be0" stroke-width="2" fill="none"/></g><g transform="translate(560,69)"><rect x="2" y="2" width="15" height="12" fill="#6b7f98" stroke="#4a5668"/><path d="M5,5 l11,11 M16,5 l-11,11" stroke="#e8ecf2" stroke-width="3" stroke-linecap="round"/><path d="M5,5 l11,11" stroke="#8a96a8" stroke-width="1.200"/><path d="M3,17 l4,-4" stroke="#3a78d8" stroke-width="3" stroke-linecap="round"/></g><g transform="translate(602,69)"><g transform="translate(1,-2)"><path d="M0,3 l5,-2.5 l5,2.5 l-5,2.5z" fill="#d8d8d8" stroke="#444" stroke-width=".5"/><path d="M0,3 l5,2.5 v5.5 l-5,-2.5z" fill="#9a9a9a" stroke="#444" stroke-width=".5"/><path d="M5,5.5 l5,-2.5 v5.5 l-5,2.5z" fill="#6e6e6e" stroke="#444" stroke-width=".5"/><path d="M8,3 l5,-2.5 l5,2.5 l-5,2.5z" fill="#f4f4f4" stroke="#444" stroke-width=".5"/><path d="M8,3 l5,2.5 v5.5 l-5,-2.5z" fill="#e0e0e0" stroke="#444" stroke-width=".5"/><path d="M13,5.5 l5,-2.5 v5.5 l-5,2.5z" fill="#c4c4c4" stroke="#444" stroke-width=".5"/></g><path d="M1,13.5 h7 M4.5,10 v7" stroke="#35c01c" stroke-width="2.4" fill="none"/><path d="M11,12 q5,-4 7,1 q0,4 -5,5" stroke="#2f6fd0" stroke-width="1.8" fill="none"/><path d="M10,10 l4,-1 l-1,4z" fill="#2f6fd0"/></g><g transform="translate(628,69)"><g transform="translate(1,-3)"><path d="M0,3 l5,-2.5 l5,2.5 l-5,2.5z" fill="#d8d8d8" stroke="#444" stroke-width=".5"/><path d="M0,3 l5,2.5 v5.5 l-5,-2.5z" fill="#9a9a9a" stroke="#444" stroke-width=".5"/><path d="M5,5.5 l5,-2.5 v5.5 l-5,2.5z" fill="#6e6e6e" stroke="#444" stroke-width=".5"/><path d="M8,3 l5,-2.5 l5,2.5 l-5,2.5z" fill="#f4f4f4" stroke="#444" stroke-width=".5"/><path d="M8,3 l5,2.5 v5.5 l-5,-2.5z" fill="#e0e0e0" stroke="#444" stroke-width=".5"/><path d="M13,5.5 l5,-2.5 v5.5 l-5,2.5z" fill="#c4c4c4" stroke="#444" stroke-width=".5"/></g><rect x="2.5" y="7" width="6" height="12" rx="1.5" fill="#111"/><circle cx="5.5" cy="10.2" r="2.2" fill="#f4c400"/><circle cx="5.5" cy="15.8" r="2.2" fill="#1fd11f"/><rect x="11.5" y="7" width="6" height="12" rx="1.5" fill="#111"/><circle cx="14.5" cy="10.2" r="2.2" fill="#e81010"/><circle cx="14.5" cy="15.8" r="2.2" fill="#f4c400"/></g><g transform="translate(654,69)"><g transform="translate(1,-3)"><path d="M0,3 l5,-2.5 l5,2.5 l-5,2.5z" fill="#d8d8d8" stroke="#444" stroke-width=".5"/><path d="M0,3 l5,2.5 v5.5 l-5,-2.5z" fill="#9a9a9a" stroke="#444" stroke-width=".5"/><path d="M5,5.5 l5,-2.5 v5.5 l-5,2.5z" fill="#6e6e6e" stroke="#444" stroke-width=".5"/><path d="M8,3 l5,-2.5 l5,2.5 l-5,2.5z" fill="#f4f4f4" stroke="#444" stroke-width=".5"/><path d="M8,3 l5,2.5 v5.5 l-5,-2.5z" fill="#e0e0e0" stroke="#444" stroke-width=".5"/><path d="M13,5.5 l5,-2.5 v5.5 l-5,2.5z" fill="#c4c4c4" stroke="#444" stroke-width=".5"/></g><path d="M3,13 q6,-6 12,-1 l2,-2 l0,6 l-6,0 l2,-2 q-4,-3 -8,1z" fill="#3fbf2a" stroke="#2a8a1a" stroke-width=".5"/><path d="M17,15 q-6,6 -12,1 l-2,2 l0,-6 l6,0 l-2,2 q4,3 8,-1z" fill="#e8d820" stroke="#a89a10" stroke-width=".5"/></g><g transform="translate(680,69)"><g transform="translate(1,-3)"><path d="M0,3 l5,-2.5 l5,2.5 l-5,2.5z" fill="#d8d8d8" stroke="#444" stroke-width=".5"/><path d="M0,3 l5,2.5 v5.5 l-5,-2.5z" fill="#9a9a9a" stroke="#444" stroke-width=".5"/><path d="M5,5.5 l5,-2.5 v5.5 l-5,2.5z" fill="#6e6e6e" stroke="#444" stroke-width=".5"/><path d="M8,3 l5,-2.5 l5,2.5 l-5,2.5z" fill="#f4f4f4" stroke="#444" stroke-width=".5"/><path d="M8,3 l5,2.5 v5.5 l-5,-2.5z" fill="#e0e0e0" stroke="#444" stroke-width=".5"/><path d="M13,5.5 l5,-2.5 v5.5 l-5,2.5z" fill="#c4c4c4" stroke="#444" stroke-width=".5"/></g><path d="M1,11.0 h6 M4.0,8 v6" stroke="#35c01c" stroke-width="2.2" fill="none"/><path d="M6,17 l5,-7" stroke="#222" stroke-width="1.2"/><path d="M10,17 h7" stroke="#e6d800" stroke-width="2.2" fill="none"/></g><g transform="translate(707,69)"><ellipse cx="13" cy="18.500" rx="6" ry="1.500" fill="#555" opacity=".5"/><path d="M4,4.1 v11.8 a6.0,2.6 0 0 0 12,0 v-11.8 Z" fill="url(#icyl)" stroke="#101828" stroke-width="1.2"/><ellipse cx="10.0" cy="4.1" rx="6.0" ry="2.6" fill="#4a70b0" stroke="#101828" stroke-width="1.2"/><path d="M10,6 v11" stroke="#101828" stroke-width="1" stroke-dasharray="2 1.500"/></g><g transform="translate(733,69)"><ellipse cx="13" cy="18.500" rx="6" ry="1.500" fill="#555" opacity=".5"/><path d="M4,4.1 v11.8 a6.0,2.6 0 0 0 12,0 v-11.8 Z" fill="url(#icylg)" stroke="#101828" stroke-width="1.2"/><ellipse cx="10.0" cy="4.1" rx="6.0" ry="2.6" fill="#7888a8" stroke="#101828" stroke-width="1.2"/><path d="M8.500,6 v11.500 M11.500,6 v11.500" stroke="#f0e040" stroke-width="1.100"/></g><g transform="translate(759,69)"><path d="M4,4.1 v11.8 a6.0,2.6 0 0 0 12,0 v-11.8 Z" fill="#dbe6f6" stroke="#28e0ee" stroke-width="1.3"/><ellipse cx="10.0" cy="4.1" rx="6.0" ry="2.6" fill="#eef4fc" stroke="#28e0ee" stroke-width="1.3"/><path d="M6,10 l3,5 l7,-9" stroke="#35c01c" stroke-width="2.600" fill="none"/></g><g transform="translate(785,69)"><ellipse cx="6" cy="15" rx="6" ry="1.500" fill="#555" opacity=".5"/><path d="M5,5.1 v10.8 a5.5,2.6 0 0 0 11,0 v-10.8 Z" fill="#dbe6f6" stroke="#28e0ee" stroke-width="1.3"/><ellipse cx="10.5" cy="5.1" rx="5.5" ry="2.6" fill="#eef4fc" stroke="#28e0ee" stroke-width="1.3"/><rect x="13.500" y="0.500" width="5" height="5" fill="#f4b060" stroke="#c87820"/><circle cx="15.500" cy="3" r="1.200" fill="#d02020"/></g><g transform="translate(811,69)"><g opacity=".8"><path d="M4,4.1 v11.8 a6.0,2.6 0 0 0 12,0 v-11.8 Z" fill="#e8f0fa" stroke="#58a0e8" stroke-width="1"/><ellipse cx="10.0" cy="4.1" rx="6.0" ry="2.6" fill="#f4f8fe" stroke="#58a0e8" stroke-width="1"/><path d="M6,5 l3,12 M9,4.500 l3,13 M12,5 l-3,12 M15,5 l-3,12" stroke="#58a0e8" stroke-width=".6" fill="none"/></g></g><g transform="translate(837,69)"><path d="M1,5 q9,-5 18,0 l-9,4z" fill="#4a7ad8" stroke="#0c1838" stroke-width=".8"/><path d="M1,5 l9,4 v10 q-7,-4 -9,-14z" fill="#1c3f98" stroke="#0c1838" stroke-width=".8"/><path d="M19,5 l-9,4 v10 q7,-4 9,-14z" fill="#0f2460" stroke="#0c1838" stroke-width=".8"/></g><g transform="translate(879,69)"><path d="M5.7,10.3 l-6,6" stroke="#8a8f98" stroke-width="3" stroke-linecap="round"/><circle cx="9" cy="7" r="5.5" fill="#cfe2f6" stroke="#8c97a8" stroke-width="1.6"/><circle cx="9.5" cy="7.5" r="3.0250000000000004" fill="#a9cdf0" opacity=".7"/><path d="M9,9 l5,-2.5 l5,2.5 l-5,2.5z" fill="#8a8a8a" stroke="#333" stroke-width=".5"/><path d="M9,9 l5,2.5 v6 l-5,-2.5z" fill="#5c5c5c" stroke="#333" stroke-width=".5"/><path d="M14,11.5 l5,-2.5 v6 l-5,2.5z" fill="#3c3c3c" stroke="#333" stroke-width=".5"/><path d="M0,2 h4 M2,0 v4 M0,6 h4" stroke="#111" stroke-width="1"/><path d="M7.500,4.500 l4,2.500 l-4,2.500z" fill="#8aa8c8"/></g><g transform="translate(905,69)"><path d="M5.7,10.3 l-6,6" stroke="#8a8f98" stroke-width="3" stroke-linecap="round"/><circle cx="9" cy="7" r="5.5" fill="#cfe2f6" stroke="#8c97a8" stroke-width="1.6"/><circle cx="9.5" cy="7.5" r="3.0250000000000004" fill="#a9cdf0" opacity=".7"/><path d="M9,9 l5,-2.5 l5,2.5 l-5,2.5z" fill="#8a8a8a" stroke="#333" stroke-width=".5"/><path d="M9,9 l5,2.5 v6 l-5,-2.5z" fill="#5c5c5c" stroke="#333" stroke-width=".5"/><path d="M14,11.5 l5,-2.5 v6 l-5,2.5z" fill="#3c3c3c" stroke="#333" stroke-width=".5"/><path d="M0.5,0.5 h3.5 M0.5,0.5 v3.5 M0.5,0.5 l3.5,3.5" stroke="#2fb21c" stroke-width="1.4" fill="none"/><path d="M17.5,0.5 h-3.5 M17.5,0.5 v3.5 M17.5,0.5 l-3.5,3.5" stroke="#2fb21c" stroke-width="1.4" fill="none"/><path d="M0.5,17.5 h3.5 M0.5,17.5 v-3.5 M0.5,17.5 l3.5,-3.5" stroke="#2fb21c" stroke-width="1.4" fill="none"/><path d="M17.5,17.5 h-3.5 M17.5,17.5 v-3.5 M17.5,17.5 l-3.5,-3.5" stroke="#2fb21c" stroke-width="1.4" fill="none"/><path d="M7.500,4.500 l4,2.500 l-4,2.500z" fill="#8aa8c8"/></g><g transform="translate(931,69)"><rect x="3" y="4" width="14" height="12" fill="#e4ecfa" stroke="#111" stroke-width="1.200"/><path d="M6,7.500 v6 M14,7.500 v6 M5,8.500 l1,-1 M13,8.500 l1,-1" stroke="#111" stroke-width="1.200" fill="none"/><rect x="9.300" y="8" width="1.400" height="1.400" fill="#111"/><rect x="9.300" y="11.500" width="1.400" height="1.400" fill="#111"/><path d="M1,2 h3.5 M1,2 v3.5 M1,2 l3.5,3.5" stroke="#2fb21c" stroke-width="1.4" fill="none"/><path d="M19,2 h-3.5 M19,2 v3.5 M19,2 l-3.5,3.5" stroke="#2fb21c" stroke-width="1.4" fill="none"/><path d="M1,18 h3.5 M1,18 v-3.5 M1,18 l3.5,-3.5" stroke="#2fb21c" stroke-width="1.4" fill="none"/><path d="M19,18 h-3.5 M19,18 v-3.5 M19,18 l-3.5,-3.5" stroke="#2fb21c" stroke-width="1.4" fill="none"/></g><g transform="translate(957,69)"><path d="M4,16 L15,5" stroke="#2fb21c" stroke-width="2.400"/><path d="M18.500,1.500 l-2,7 l-5,-5z" fill="#2fb21c" stroke="#1c7a10" stroke-width=".5"/><circle cx="4" cy="16" r="3" fill="#c8c8c8" stroke="#555" stroke-width=".7"/><circle cx="3.200" cy="15.200" r="1" fill="#fff"/></g><g transform="translate(983,69)"><path d="M3,10 q0,-7 8,-7 l0,-2.500 l5,4.500 l-5,4.500 l0,-2.500 q-4,0 -4,3z" fill="#35b822" stroke="#1c7a10" stroke-width=".6"/><path d="M17,10 q0,7 -8,7 l0,2.500 l-5,-4.500 l5,-4.500 l0,2.500 q4,0 4,-3z" fill="#35b822" stroke="#1c7a10" stroke-width=".6"/></g><g transform="translate(1009,69)"><g transform="translate(0,-1)"><path d="M0.5,6.5 Q10,-3 19.5,5.5" stroke="#4a4e62" stroke-width="1.7" fill="none"/><path d="M3,2.5 l-1,-1.500 M6,1 l-0.500,-1.500 M14,1 l0.500,-1.500 M17,2.500 l1,-1.500" stroke="#4a4e62" stroke-width=".8"/><path d="M1,7 Q10,0.5 19,6.4 Q10,11.500 1,7Z" fill="#cdd6e8" stroke="#7c86a0" stroke-width=".5"/><circle cx="10" cy="6" r="3.4" fill="#5a74a8"/><circle cx="10" cy="6" r="1.6" fill="#1c2a50"/><circle cx="8.8" cy="5" r=".8" fill="#fff"/></g><circle cx="10" cy="13.500" r="6" fill="#ffd838" stroke="#c89a10" stroke-width=".7"/><circle cx="8" cy="12" r=".9" fill="#333"/><circle cx="12" cy="12" r=".9" fill="#333"/><path d="M7,15 q3,2.500 6,0" stroke="#333" stroke-width=".9" fill="none"/></g><g transform="translate(1052,69)"><path d="M1,11 l9,-6 l9,5 l-9,7z" fill="#e4ecf8" stroke="#8aa0c0" stroke-width=".6"/><path d="M7,12 v-10" stroke="#1850e0" stroke-width="1.600"/><path d="M7,0 l-2.500,4 h5z" fill="#1850e0"/><path d="M7,12 l8,-5" stroke="#2fb21c" stroke-width="1.600"/><path d="M17,5.500 l-4.500,0.500 l2.500,3.500z" fill="#2fb21c"/><path d="M7,12 l8,5" stroke="#e01818" stroke-width="1.600"/><path d="M17,18.500 l-4.500,-0.500 l2,-3.500z" fill="#e01818"/><circle cx="7" cy="12" r="1.800" fill="#d8d8d8" stroke="#555" stroke-width=".5"/></g><g transform="translate(1078,69)"><path d="M8,6 l8,-3 l4,4 l-8,4z" fill="#e4ecf8" stroke="#8aa0c0" stroke-width=".6"/><path d="M13,8 v-7 M13,8 l5,-3 M13,8 l5,2" stroke-width="1.100" stroke="#1850e0" fill="none"/><path d="M13,8 l5,-3" stroke="#2fb21c" stroke-width="1.100"/><path d="M13,8 l5,2" stroke="#e01818" stroke-width="1.100"/><path d="M2,17 l7,-7 l-3,-1 l8,-1 l-2,7 l-1,-3 l-6,7z" fill="#35b822" stroke="#1c7a10" stroke-width=".6"/><path d="M10,13 h8 v5 h-10" fill="none" stroke="#777" stroke-width="1.300"/></g><g transform="translate(1104,69)"><path d="M8,6 l8,-3 l4,4 l-8,4z" fill="#e4ecf8" stroke="#8aa0c0" stroke-width=".6"/><path d="M13,8 v-7" stroke="#1850e0" stroke-width="1.100"/><path d="M13,8 l5,-3" stroke="#2fb21c" stroke-width="1.100"/><path d="M13,8 l5,2" stroke="#e01818" stroke-width="1.100"/><path d="M1,9 l4,-4 l1,2 l5,5 l2,1 l-4,4 l-1,-2 l-5,-5z" fill="#35b822" stroke="#1c7a10" stroke-width=".6"/></g><g transform="translate(1147,69)"><rect x="0" y="1" width="19" height="18" fill="#555"/><rect x="0.6" y="1.7" width="5.400" height="5" fill="#18c8f0"/><rect x="6.699999999999999" y="1.7" width="5.400" height="5" fill="#f0e000"/><rect x="12.799999999999999" y="1.7" width="5.400" height="5" fill="#18d018"/><rect x="0.6" y="7.5" width="5.400" height="5" fill="#f08000"/><rect x="6.699999999999999" y="7.5" width="5.400" height="5" fill="#a06000"/><rect x="12.799999999999999" y="7.5" width="5.400" height="5" fill="#f000e0"/><rect x="0.6" y="13.299999999999999" width="5.400" height="5" fill="#1010e0"/><rect x="6.699999999999999" y="13.299999999999999" width="5.400" height="5" fill="#18b018"/><rect x="12.799999999999999" y="13.299999999999999" width="5.400" height="5" fill="#888888"/></g><g transform="translate(1173,69)"><rect x="2" y="1" width="15" height="18" fill="#f4f6fb" stroke="#4a68a8" stroke-width="1"/><rect x="2.500" y="1.500" width="14" height="2.500" fill="#9ab4e0"/><path d="M5,7 h9 M5,9.500 h6" stroke="#f0b040" stroke-width="1.200"/><rect x="4.5" y="11.0" width="3" height="2.600" fill="#18c8f0"/><rect x="7.9" y="11.0" width="3" height="2.600" fill="#f0e000"/><rect x="11.3" y="11.0" width="3" height="2.600" fill="#18d018"/><rect x="4.5" y="13.8" width="3" height="2.600" fill="#f08000"/><rect x="7.9" y="13.8" width="3" height="2.600" fill="#a06000"/><rect x="11.3" y="13.8" width="3" height="2.600" fill="#f000e0"/><rect x="4.5" y="16.6" width="3" height="2.600" fill="#1010e0"/><rect x="7.9" y="16.6" width="3" height="2.600" fill="#18b018"/><rect x="11.3" y="16.6" width="3" height="2.600" fill="#888888"/></g><g transform="translate(1199,69)"><circle cx="10" cy="10" r="9.500" fill="#6a9a2a" stroke="#3a5a14" stroke-width=".8"/><path d="M5,5 l10,10 M15,5 l-10,10" stroke="#e8e8e8" stroke-width="2.800" stroke-linecap="round"/><path d="M5,5 l10,10" stroke="#8a8a8a" stroke-width="1"/><circle cx="5" cy="5" r="2" fill="#6a9a2a"/></g><g transform="translate(1225,69)"><rect x="1" y="1" width="18" height="18" fill="#eaf0fa" stroke="#3a5a98" stroke-width="1"/><rect x="1.500" y="1.500" width="17" height="3" fill="#4a6eb8"/><path d="M3,7 h12" stroke="#b08040" stroke-width="2" stroke-dasharray="2 1"/><path d="M3,9 v8" stroke="#b08040" stroke-width="1.600" stroke-dasharray="1.500 1"/><path d="M8,9 l9,9 M17,9 l-9,9" stroke="#7a9ad0" stroke-width="2.400" stroke-linecap="round"/></g><g transform="translate(1251,69)"><rect x="1.500" y="2.500" width="17" height="15" fill="none" stroke="#223a70" stroke-width="1.600" stroke-dasharray="1.600 1.600"/><path d="M8,9 q5,-6 11,-4 l0,4 q-4,0 -6,4z" fill="#f0b878" stroke="#8a5a28" stroke-width=".7"/><circle cx="6" cy="15" r="3" fill="#f8e840" stroke="#a89a10" stroke-width=".5"/><path d="M4,15 h4 M6,13 v4" stroke="#2060e0" stroke-width="1.200"/></g><g transform="translate(1277,69)"><path d="M1,17 l5,-13 l13,-2 l-4,14z" fill="#f4a0a0" stroke="#2a5ac8" stroke-width="1.600"/><path d="M3.500,12 l13,-1.500 M5,8 l13,-2 M9,3.500 l-4,13 M13,3 l-4,13.500" stroke="#d02020" stroke-width=".8"/><path d="M1,17 l14,-1 l1,1.500 l-15,1z" fill="#1a3a90"/></g></svg>
</div>

<!-- ===== left sidebar ===== -->
<div id="sidebar">
<i class="hgrip" style="top:3px"></i><i class="hgrip" style="top:256px"></i>
<svg width="60" height="280" viewBox="0 118 60 280" style="left:0;top:0"><defs><linearGradient id="sbg" x1="0" y1="0" x2="1" y2="1"><stop offset="0" stop-color="#fff"/><stop offset="1" stop-color="#a8c8f4"/></linearGradient></defs><g transform="translate(7.5,133.5)"><path d="M3,8 l-3,1 M3,11 l-3,2 M4,14 l-3,3" stroke="#b8c0d0" stroke-width="1.600"/><path d="M7.4,11.6 l-6,6" stroke="#8a8f98" stroke-width="3" stroke-linecap="round"/><circle cx="11" cy="8" r="6" fill="#cfe2f6" stroke="#8c97a8" stroke-width="1.6"/><circle cx="11.5" cy="8.5" r="3.3000000000000003" fill="#a9cdf0" opacity=".7"/><path d="M7,13 l-4,5" stroke="#8a8f98" stroke-width="3" stroke-linecap="round"/></g><g transform="translate(33.5,133.5)"><path d="M1,4 l14,14 M3,2 l6,6" stroke="#4a78d8" stroke-width="1.400"/><path d="M18,1 l-11,13 l-2,4 l4,-2 l11,-13z" fill="#e8a030" stroke="#5a3a10" stroke-width=".7"/><path d="M5,18 l1,-3 l2,2z" fill="#222"/><path d="M18,1 l2,2 l-1.500,1.800 l-2,-2z" fill="#d02020"/></g><path d="M48.5,133.0 h5 l-2.500,3z" fill="#111"/><g transform="translate(7.5,159.5)"><rect x="3.500" y="4.500" width="13" height="11" fill="url(#sbg)" stroke="#4a5060" stroke-width=".9"/><path d="M0.5,1.5 h3.5 M0.5,1.5 v3.5 M0.5,1.5 l3.5,3.5" stroke="#2fb21c" stroke-width="1.4" fill="none"/><path d="M19.5,1.5 h-3.5 M19.5,1.5 v3.5 M19.5,1.5 l-3.5,3.5" stroke="#2fb21c" stroke-width="1.4" fill="none"/><path d="M0.5,18.5 h3.5 M0.5,18.5 v-3.5 M0.5,18.5 l3.5,-3.5" stroke="#2fb21c" stroke-width="1.4" fill="none"/><path d="M19.5,18.5 h-3.5 M19.5,18.5 v-3.5 M19.5,18.5 l-3.5,-3.5" stroke="#2fb21c" stroke-width="1.4" fill="none"/></g><g transform="translate(33.5,159.5)"><path d="M2,6 q3,-5 7,0 q3,6 -2,8 q-5,1 -3,-4 q4,-5 12,4 q2,3 -2,5" stroke="#2a68d8" stroke-width="1.800" fill="none"/><path d="M18,1 l-11,13 l-2,4 l4,-2 l11,-13z" fill="#e8a030" stroke="#5a3a10" stroke-width=".7"/><path d="M5,18 l1,-3 l2,2z" fill="#222"/><path d="M18,1 l2,2 l-1.500,1.800 l-2,-2z" fill="#d02020"/></g><path d="M48.5,159.0 h5 l-2.500,3z" fill="#111"/><g transform="translate(7.5,185.5)"><path d="M5.4,11.6 l-6,6" stroke="#8a8f98" stroke-width="3" stroke-linecap="round"/><circle cx="9" cy="8" r="6" fill="#cfe2f6" stroke="#8c97a8" stroke-width="1.6"/><circle cx="9.5" cy="8.5" r="3.3000000000000003" fill="#a9cdf0" opacity=".7"/><path d="M10,10 l5,-2.5 l5,2.5 l-5,2.5z" fill="#8a8a8a" stroke="#333" stroke-width=".5"/><path d="M10,10 l5,2.5 v6 l-5,-2.5z" fill="#5c5c5c" stroke="#333" stroke-width=".5"/><path d="M15,12.5 l5,-2.5 v6 l-5,2.5z" fill="#3c3c3c" stroke="#333" stroke-width=".5"/><path d="M0,2 h4 M2,0 v4 M0,6 h4" stroke="#111" stroke-width="1"/><path d="M7.500,5 l4.500,3 l-4.500,3z" fill="#8aa8c8"/></g><path d="M22.5,185.0 h5 l-2.500,3z" fill="#111"/><g transform="translate(33.5,185.5)"><path d="M2,3 h15 v9 h-4 v6 h-11z" fill="#e2e6f0" stroke="#e8e000" stroke-width="1.700"/><path d="M4.500,10 l3.500,4.500 l7,-9" stroke="#3cc030" stroke-width="3" fill="none"/></g><path d="M48.5,185.0 h5 l-2.500,3z" fill="#111"/><g transform="translate(7.5,211.5)"><path d="M1,11 l9,-6 l9,5 l-9,7z" fill="#e4ecf8" stroke="#8aa0c0" stroke-width=".6"/><path d="M7,12 v-10" stroke="#1850e0" stroke-width="1.600"/><path d="M7,0 l-2.500,4 h5z" fill="#1850e0"/><path d="M7,12 l8,-5" stroke="#2fb21c" stroke-width="1.600"/><path d="M17,5.500 l-4.500,0.500 l2.500,3.500z" fill="#2fb21c"/><path d="M7,12 l8,5" stroke="#e01818" stroke-width="1.600"/><path d="M17,18.500 l-4.500,-0.500 l2,-3.500z" fill="#e01818"/><circle cx="7" cy="12" r="1.800" fill="#d8d8d8" stroke="#555" stroke-width=".5"/></g><path d="M22.5,211.0 h5 l-2.500,3z" fill="#111"/><g transform="translate(33.5,211.5)"><path d="M1,7 q4,-8 8,2 q4,12 9,4" stroke="#2a68d8" stroke-width="1.800" fill="none"/><path d="M18,1 l-11,13 l-2,4 l4,-2 l11,-13z" fill="#e8a030" stroke="#5a3a10" stroke-width=".7"/><path d="M5,18 l1,-3 l2,2z" fill="#222"/><path d="M18,1 l2,2 l-1.500,1.800 l-2,-2z" fill="#d02020"/></g><path d="M48.5,211.0 h5 l-2.500,3z" fill="#111"/><g transform="translate(7.5,237.5)"><path d="M1,3 h11 l2,2 h-11z M1,6 h11 l2,2 h-11z M1,9 h11 l2,2 h-11z" fill="#8fa0d8" stroke="#5a68a0" stroke-width=".5"/><ellipse cx="10" cy="14.500" rx="7" ry="4.500" fill="#c89a6a" stroke="#6a4a2a" stroke-width=".7"/><circle cx="6.500" cy="15" r="1.700" fill="#2050e0"/><circle cx="10.500" cy="16.300" r="1.700" fill="#20b020"/><circle cx="13.500" cy="14" r="1.700" fill="#e02020"/><path d="M19,1 l-7,10" stroke="#9a5a20" stroke-width="1.600"/></g><path d="M22.5,237.0 h5 l-2.500,3z" fill="#111"/><g transform="translate(33.5,237.5)"><path d="M1,17 l5,-13 l13,-2 l-4,14z" fill="#8ac0f8" stroke="#2a5ac8" stroke-width="1.400"/><path d="M3.500,10.500 l13,-2 M11,3 l-4,13.500" stroke="#e8f4ff" stroke-width="1.200"/><path d="M1,17 l14,-1 l1,1.500 l-15,1z" fill="#1a3a90"/></g><path d="M48.5,237.0 h5 l-2.500,3z" fill="#111"/><g transform="translate(7.5,263.5)"><path d="M3,9 q1,-7 9,-6 l0,-2.500 l6,5 l-6,4.500 l0,-2.500 q-5,-1 -5,3z" fill="#5b9be0" stroke="#2c64b0" stroke-width=".6"/><path d="M17,11 q-1,7 -9,6 l0,2.500 l-6,-5 l6,-4.500 l0,2.500 q5,1 5,-3z" fill="#7fb4ee" stroke="#2c64b0" stroke-width=".6"/></g><path d="M22.5,263.0 h5 l-2.500,3z" fill="#111"/><g transform="translate(33.5,263.5)"><path d="M2,6 l8,-4 l8,4 l-8,4z" fill="#b4b4b4" stroke="#333" stroke-width=".6"/><path d="M2,6 l8,4 v9 l-8,-4z" fill="#7a7a7a" stroke="#333" stroke-width=".6"/><path d="M10,10 l8,-4 v9 l-8,4z" fill="#4e4e4e" stroke="#333" stroke-width=".6"/></g><path d="M48.5,263.0 h5 l-2.500,3z" fill="#111"/><g transform="translate(7.5,289.5)"><path d="M5,6 q0,-5 5.500,-5 q5.500,0 5.500,4.500 q0,3 -3.500,4.500 q-1.500,1 -1.500,3" stroke="#2a5ac8" stroke-width="2.800" fill="none"/><circle cx="10.800" cy="17.500" r="1.900" fill="#2a5ac8"/></g><path d="M22.5,289.0 h5 l-2.500,3z" fill="#111"/><g transform="translate(33.5,289.5)"><path d="M2,4 v15 M18,4 v15" stroke="#333" stroke-width="1.400"/><path d="M4,6 h12" stroke="#e8d800" stroke-width="1.800"/><path d="M2,6 l4,-2.500 v5z M18,6 l-4,-2.500 v5z" fill="#e8d800"/></g><path d="M48.5,289.0 h5 l-2.500,3z" fill="#111"/><g transform="translate(7.5,315.5)"><path d="M3,5 h14 l-2,14 h-10z" fill="#b8d0ec" stroke="#5a7aa8" stroke-width=".8"/><ellipse cx="10" cy="5" rx="7" ry="2" fill="#d8e6f6" stroke="#5a7aa8" stroke-width=".8"/><path d="M7,1 h6 v3 h-6z" fill="#e8d820"/><path d="M7,9 l6,7 M13,9 l-6,7" stroke="#6ab82e" stroke-width="1.200"/></g><path d="M22.5,315.0 h5 l-2.500,3z" fill="#111"/><g transform="translate(33.5,315.5)"><path d="M2,8 l8,-7 v4 q9,0 8,13 q-2,-7 -8,-6.500 v4z" fill="#b0b0b0" stroke="#8a8a8a" stroke-width=".6"/></g><path d="M48.5,315.0 h5 l-2.500,3z" fill="#111"/><g transform="translate(7.5,341.5)"><path d="M2,1 v18 M5,1 v18" stroke="#333" stroke-width="1.200"/><circle cx="11" cy="9" r="6" fill="none" stroke="#c86a10" stroke-width="1.600"/><path d="M11,1 v16 M3,9 h16 M5.500,3.500 l11,11 M16.500,3.500 l-11,11" stroke="#c86a10" stroke-width="1.100"/><path d="M2,19 l8,-4 l8,2 l-8,3z" fill="#f08a20"/></g><path d="M22.5,341.0 h5 l-2.500,3z" fill="#111"/><g transform="translate(33.5,341.5)"><path d="M1,5 h7 l1,1.500 h7 v6 h-15z" fill="#f0c860" stroke="#a87c20" stroke-width=".7"/><rect x="9" y="1" width="7" height="5" fill="#3fbf2a" stroke="#1c7a10" stroke-width=".5"/><path d="M3,11 h16 v8 h-16z" fill="#f4f6fb" stroke="#111" stroke-width="1"/><path d="M1,14 l3,-6 h13 l-3,6z" fill="#f8dc88" stroke="#a87c20" stroke-width=".6"/></g></svg>
</div>

<!-- ===== status bar ===== -->
<div id="status">
<svg width="1920" height="39" viewBox="0 1001 1920 39" style="left:0;top:0"><path d="M2,1020.500 H1338" stroke="#a4a4a4" stroke-width="1"/><path d="M2,1021.500 H1338" stroke="#f0f2f8" stroke-width="1"/><path d="M1338.5,1004 V1018 M1340.5,1005.5 V1018" stroke="#a8aec0" stroke-width="1" stroke-dasharray="1 2"/><rect x="1341" y="1003" width="131" height="16" fill="#ffffff"/><circle cx="1467" cy="1009" r="3.500" fill="none" stroke="#4a8ad8" stroke-width="1.200"/><path d="M1475.5,1004 V1018 M1477.5,1005.5 V1018" stroke="#a8aec0" stroke-width="1" stroke-dasharray="1 2"/><text x="1486" y="1016" font-family="Liberation Sans, sans-serif" font-size="12" fill="#000">绝对 XY 上视图</text><path d="M1592.5,1004 V1018" stroke="#9aa0b4" stroke-width="1"/><path d="M1593.5,1004 V1018" stroke="#f4f6fb" stroke-width="1"/><text x="1601" y="1016" font-family="Liberation Sans, sans-serif" font-size="12" fill="#000">绝对视图</text><path d="M1656.5,1004 V1018 M1658.5,1005.5 V1018" stroke="#a8aec0" stroke-width="1" stroke-dasharray="1 2"/><text x="1668" y="1016" font-family="Liberation Sans, sans-serif" font-size="12" font-weight="bold" fill="#000" textLength="46" lengthAdjust="spacingAndGlyphs">LAYER0</text><path d="M1726.5,1004 V1018" stroke="#9aa0b4" stroke-width="1"/><path d="M1727.5,1004 V1018" stroke="#f4f6fb" stroke-width="1"/><path d="M1756.5,1004 V1018" stroke="#9aa0b4" stroke-width="1"/><path d="M1757.5,1004 V1018" stroke="#f4f6fb" stroke-width="1"/><rect x="1761" y="1005" width="33" height="12" fill="#46628e"/><rect x="1805" y="1005" width="33" height="12" fill="#46628e"/><rect x="1848" y="1005" width="33" height="12" fill="#46628e"/><path d="M1799.5,1004 V1018" stroke="#9aa0b4" stroke-width="1"/><path d="M1800.5,1004 V1018" stroke="#f4f6fb" stroke-width="1"/><path d="M1843.5,1004 V1018" stroke="#9aa0b4" stroke-width="1"/><path d="M1844.5,1004 V1018" stroke="#f4f6fb" stroke-width="1"/><path d="M1887.5,1004 V1018" stroke="#9aa0b4" stroke-width="1"/><path d="M1888.5,1004 V1018" stroke="#f4f6fb" stroke-width="1"/><circle cx="1901" cy="1010.500" r="6.500" fill="#1838b0"/><path d="M1896,1008 q3,-4 6,-2 q1,3 -2,4 q-1,3 -3,1z M1901,1013 q3,-2 5,0 q-2,4 -5,3z" fill="#38c028"/><circle cx="1899" cy="1008" r="1.500" fill="#fff" opacity=".5"/><path d="M1132.5,1024 V1038" stroke="#9aa0b4" stroke-width="1"/><path d="M1133.5,1024 V1038" stroke="#f4f6fb" stroke-width="1"/><text x="1141" y="1036" font-family="Liberation Sans, sans-serif" font-size="12" fill="#000">拴牢</text><path d="M1175.5,1024 V1038" stroke="#9aa0b4" stroke-width="1"/><path d="M1176.5,1024 V1038" stroke="#f4f6fb" stroke-width="1"/><path d="M1206.5,1024 V1038" stroke="#9aa0b4" stroke-width="1"/><path d="M1207.5,1024 V1038" stroke="#f4f6fb" stroke-width="1"/><path d="M1237.5,1024 V1038" stroke="#9aa0b4" stroke-width="1"/><path d="M1238.5,1024 V1038" stroke="#f4f6fb" stroke-width="1"/><path d="M1268.5,1024 V1038" stroke="#9aa0b4" stroke-width="1"/><path d="M1269.5,1024 V1038" stroke="#f4f6fb" stroke-width="1"/><path d="M1299.5,1024 V1038" stroke="#9aa0b4" stroke-width="1"/><path d="M1300.5,1024 V1038" stroke="#f4f6fb" stroke-width="1"/><path d="M1331.5,1024 V1038" stroke="#9aa0b4" stroke-width="1"/><path d="M1332.5,1024 V1038" stroke="#f4f6fb" stroke-width="1"/><path d="M1361.5,1024 V1038" stroke="#9aa0b4" stroke-width="1"/><path d="M1362.5,1024 V1038" stroke="#f4f6fb" stroke-width="1"/><path d="M1392.5,1024 V1038" stroke="#9aa0b4" stroke-width="1"/><path d="M1393.5,1024 V1038" stroke="#f4f6fb" stroke-width="1"/><path d="M1423.5,1024 V1038" stroke="#9aa0b4" stroke-width="1"/><path d="M1424.5,1024 V1038" stroke="#f4f6fb" stroke-width="1"/><path d="M1454.5,1024 V1038" stroke="#9aa0b4" stroke-width="1"/><path d="M1455.5,1024 V1038" stroke="#f4f6fb" stroke-width="1"/><rect x="1182.500" y="1022.500" width="16" height="16" fill="#e6bcc6" stroke="#66668a"/><path d="M1186,1030 q0,-5 6,-5 l0,-1.500 l3,2.500 l-3,2.500 l0,-1.500 q-4,0 -4,3z M1195,1031 q0,5 -6,5 l0,1.500 l-3,-2.500 l3,-2.500 l0,1.500 q4,0 4,-3z" fill="#e03040"/><rect x="1212" y="1022" width="18" height="17" fill="#f8e070"/><path d="M1214,1024 l3,3 M1220,1023 v4 M1225,1024 l-3,3 M1214,1031 h3" stroke="#d040c0" stroke-width="1.200"/><path d="M1219,1028 l9,6 l-4,0.500 l2,4 l-2,1 l-2,-4 l-3,2.500z" fill="#e8d8b8" stroke="#6a5a3a" stroke-width=".7"/><path d="M1245,1031 l8,-7 l8,6 v2 h-2 v6 h-12 v-6z" fill="#d8e4f4" stroke="#3a5a98" stroke-width=".8"/><path d="M1251,1026 q5,-4 10,-2 v3 q-4,0 -6,3z" fill="#f0b878" stroke="#8a5a28" stroke-width=".6"/><rect x="1249" y="1032" width="3" height="3" fill="#2a68d8"/><rect x="1254" y="1033" width="3" height="4" fill="#2a68d8"/><ellipse cx="1285" cy="1038" rx="6" ry="1.300" fill="#888" opacity=".5"/><path d="M1280,1027 q0,-4.500 5,-4.500 q5,0 5,4 q0,2.500 -3,4 q-1.500,1 -1.500,2.500" stroke="#2a5ac8" stroke-width="2.600" fill="none"/><circle cx="1285.500" cy="1036.500" r="1.700" fill="#2a5ac8"/><path d="M1310,1026 l4.5,-2.25 l4.5,2.25 l-4.5,2.25 z" fill="#7aa8e8" stroke="#223" stroke-width=".5"/><path d="M1310,1026 l4.5,2.25 v4.5 l-4.5,-2.25 z" fill="#4a78c8" stroke="#223" stroke-width=".5"/><path d="M1314.5,1028.25 l4.5,-2.25 v4.5 l-4.5,2.25 z" fill="#2a4f98" stroke="#223" stroke-width=".5"/><path d="M1315,1031 l4.5,-2.25 l4.5,2.25 l-4.5,2.25 z" fill="#8ab0d0" stroke="#223" stroke-width=".5"/><path d="M1315,1031 l4.5,2.25 v4.5 l-4.5,-2.25 z" fill="#5a88b8" stroke="#223" stroke-width=".5"/><path d="M1319.5,1033.25 l4.5,-2.25 v4.5 l-4.5,2.25 z" fill="#3a5f88" stroke="#223" stroke-width=".5"/><path d="M1304,1033 h6 M1306,1029 l5,4 l-5,4" stroke="#e01818" stroke-width="1.600" fill="none"/><rect x="1336" y="1022" width="18" height="17" fill="#f8e070"/><path d="M1338,1027 l7,-3.5 l7,3.5 l-7,3.5 z" fill="#e040e0" stroke="#223" stroke-width=".5"/><path d="M1338,1027 l7,3.5 v7 l-7,-3.5 z" fill="#48b8e8" stroke="#223" stroke-width=".5"/><path d="M1345,1030.5 l7,-3.5 v7 l-7,3.5 z" fill="#2868c8" stroke="#223" stroke-width=".5"/><rect x="1371" y="1026" width="9" height="10" fill="none" stroke="#555" stroke-width="1"/><circle cx="1407" cy="1029" r="7" fill="none" stroke="#2a9a2a" stroke-width="1.600"/><rect x="1431" y="1025" width="15" height="11" fill="none" stroke="#666" stroke-width="1"/><path d="M1438.500,1025 v11" stroke="#666"/><text x="1463" y="1036" font-family="Liberation Sans, sans-serif" font-size="12" fill="#000">LS: 1.00 PS: 1.00</text><path d="M1580.5,1024 V1038" stroke="#9aa0b4" stroke-width="1"/><path d="M1581.5,1024 V1038" stroke="#f4f6fb" stroke-width="1"/><text x="1589" y="1036" font-family="Liberation Sans, sans-serif" font-size="12" fill="#000">单位: 毫米</text><path d="M1655.5,1024 V1038" stroke="#9aa0b4" stroke-width="1"/><path d="M1656.5,1024 V1038" stroke="#f4f6fb" stroke-width="1"/><text x="1663" y="1036" font-family="Liberation Sans, sans-serif" font-size="12" fill="#e81010" textLength="78" lengthAdjust="spacingAndGlyphs">X =-0055.098</text><text x="1746" y="1036" font-family="Liberation Sans, sans-serif" font-size="12" fill="#000" textLength="155" lengthAdjust="spacingAndGlyphs">Y = 0064.828 Z = 0000.000</text><rect x="1360.500" y="1009.500" width="205" height="23" rx="3" fill="#ffffff" stroke="#d4d4d8"/><g transform="rotate(-9 1372 1019)"><rect x="1359.500" y="1006.500" width="25" height="25" rx="5" fill="#f0582a"/><path d="M1378,1012.500 q-11,-3 -12,2 q-1,3.500 6,4.500 q6,1 5,4 q-1,4 -12,1" stroke="#fff" stroke-width="3" fill="none" stroke-linecap="round"/></g><path d="M1393,1028 l7,-16 l7,16 M1395.500,1022.500 h9" stroke="#2b7de0" stroke-width="1.800" fill="none"/><circle cx="1418" cy="1017" r="1.800" fill="#2b7de0"/><path d="M1425,1019 q1.500,3 -1.500,6" stroke="#2b7de0" stroke-width="1.800" fill="none"/><circle cx="1444" cy="1021" r="7.500" fill="none" stroke="#2b7de0" stroke-width="1.600"/><circle cx="1441.500" cy="1018.500" r="1" fill="#2b7de0"/><circle cx="1446.500" cy="1018.500" r="1" fill="#2b7de0"/><path d="M1440,1023 q4,4 8,0" stroke="#2b7de0" stroke-width="1.400" fill="none"/><rect x="1463.500" y="1012" width="6" height="11" rx="3" fill="#2b7de0"/><path d="M1460.500,1020 q0,6 6,6 q6,0 6,-6 M1466.500,1026 v3" stroke="#2b7de0" stroke-width="1.400" fill="none"/><rect x="1479" y="1015" width="18" height="12" rx="1.500" fill="#2b7de0"/><path d="M1481.500,1018 h13 M1481.500,1021 h13" stroke="#fff" stroke-width="1.400" stroke-dasharray="1.600 1.200"/><path d="M1484,1024.500 h8" stroke="#fff" stroke-width="1.400"/><circle cx="1512" cy="1016" r="3.500" fill="#c4c8d0"/><path d="M1505,1028 q0,-8 7,-8 q7,0 7,8z" fill="#c4c8d0"/><rect x="1514" y="1023" width="6" height="6" rx="1" fill="#fff" stroke="#c4c8d0" stroke-width=".8"/><path d="M1524,1016 l5,-3.500 q3.500,3 7,0 l5,3.500 l-2.500,4 l-2.500,-1.500 v10 h-7 v-10 l-2.500,1.500z" fill="#2b7de0"/><rect x="1546" y="1013" width="6.500" height="6.500" fill="#2b7de0"/><rect x="1554" y="1013" width="6.500" height="6.500" fill="none" stroke="#2b7de0" stroke-width="1.200"/><rect x="1546" y="1021" width="6.500" height="6.500" fill="#2b7de0"/><rect x="1554" y="1021" width="6.500" height="6.500" fill="#2b7de0"/></svg>
</div>

<div id="taskbar"><i style="left:48px;top:1px;width:344px;height:7px;background:#f2f2f2"></i><i style="left:638px;top:0;width:46px;height:8px;background:#4b4b4b"></i><i style="left:684px;top:0;width:2px;height:8px;background:#777"></i></div>

</div>
</body>
</html>
